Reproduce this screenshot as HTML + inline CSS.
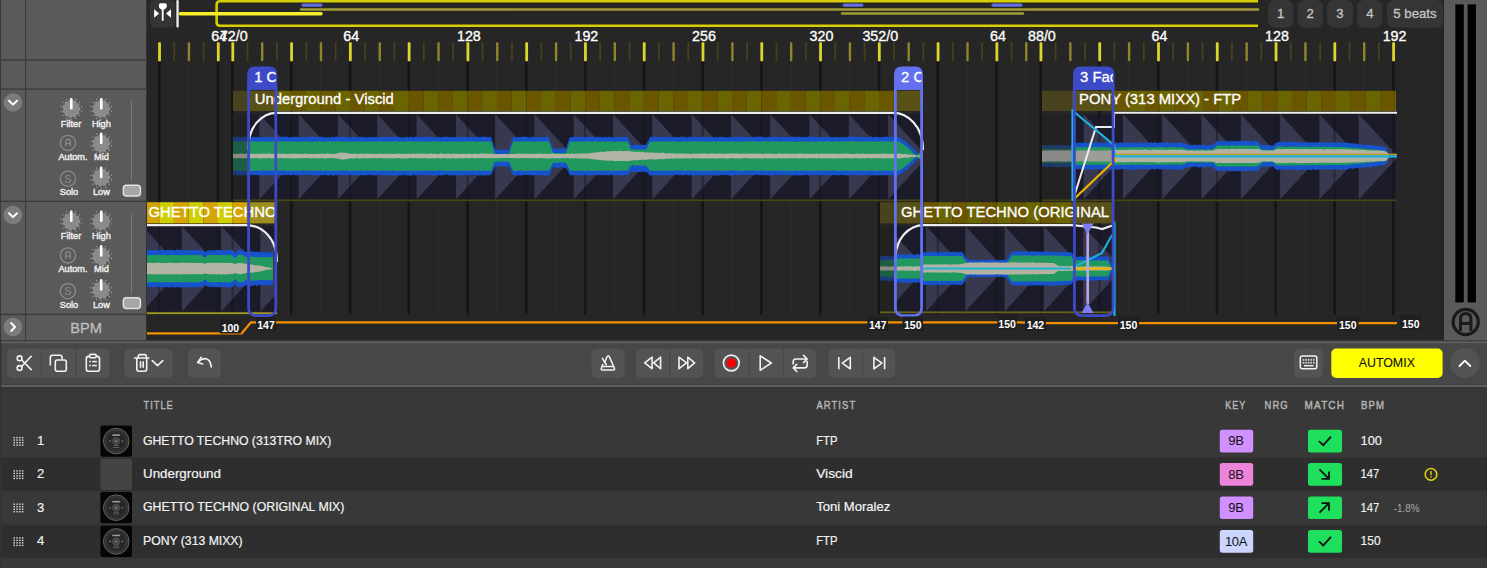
<!DOCTYPE html>
<html><head><meta charset="utf-8"><style>
html,body{margin:0;padding:0;width:1487px;height:568px;overflow:hidden;background:#262626;}
svg{position:absolute;left:0;top:0;display:block;font-family:"Liberation Sans",sans-serif;}
</style></head><body>
<svg width="1487" height="568" viewBox="0 0 1487 568">
<rect x="0" y="0" width="147" height="341" fill="#5a5a5a"/>
<rect x="147" y="0" width="1297" height="341" fill="#262626"/>
<rect x="1444" y="0" width="43" height="341" fill="#5a5a5a"/>
<rect x="0" y="0" width="1" height="341" fill="#3a3a3a"/>
<rect x="25" y="0" width="1.2" height="341" fill="#3c3c3c"/>
<rect x="146" y="0" width="1" height="341" fill="#333"/>
<rect x="0" y="59.4" width="147" height="1.4" fill="#3c3c3c"/>
<rect x="0" y="88.4" width="147" height="1.4" fill="#3c3c3c"/>
<rect x="0" y="200.6" width="147" height="1.4" fill="#3c3c3c"/>
<rect x="0" y="313.7" width="147" height="1.4" fill="#3c3c3c"/>
<rect x="157.98" y="62" width="2.5" height="252.8" fill="#151515"/>
<rect x="187.61" y="62" width="2" height="252.8" fill="#2a2a2a"/>
<rect x="216.75" y="62" width="2.5" height="252.8" fill="#151515"/>
<rect x="231.25" y="62" width="2.5" height="252.8" fill="#151515"/>
<rect x="260.89" y="62" width="2" height="252.8" fill="#2a2a2a"/>
<rect x="290.02" y="62" width="2.5" height="252.8" fill="#151515"/>
<rect x="319.66" y="62" width="2" height="252.8" fill="#2a2a2a"/>
<rect x="348.80" y="62" width="2.5" height="252.8" fill="#151515"/>
<rect x="378.44" y="62" width="2" height="252.8" fill="#2a2a2a"/>
<rect x="407.57" y="62" width="2.5" height="252.8" fill="#151515"/>
<rect x="437.21" y="62" width="2" height="252.8" fill="#2a2a2a"/>
<rect x="466.35" y="62" width="2.5" height="252.8" fill="#151515"/>
<rect x="495.98" y="62" width="2" height="252.8" fill="#2a2a2a"/>
<rect x="525.12" y="62" width="2.5" height="252.8" fill="#151515"/>
<rect x="554.76" y="62" width="2" height="252.8" fill="#2a2a2a"/>
<rect x="583.90" y="62" width="2.5" height="252.8" fill="#151515"/>
<rect x="613.53" y="62" width="2" height="252.8" fill="#2a2a2a"/>
<rect x="642.67" y="62" width="2.5" height="252.8" fill="#151515"/>
<rect x="672.31" y="62" width="2" height="252.8" fill="#2a2a2a"/>
<rect x="701.45" y="62" width="2.5" height="252.8" fill="#151515"/>
<rect x="731.08" y="62" width="2" height="252.8" fill="#2a2a2a"/>
<rect x="760.22" y="62" width="2.5" height="252.8" fill="#151515"/>
<rect x="789.86" y="62" width="2" height="252.8" fill="#2a2a2a"/>
<rect x="818.99" y="62" width="2.5" height="252.8" fill="#151515"/>
<rect x="848.63" y="62" width="2" height="252.8" fill="#2a2a2a"/>
<rect x="877.77" y="62" width="2.5" height="252.8" fill="#151515"/>
<rect x="907.41" y="62" width="2" height="252.8" fill="#2a2a2a"/>
<rect x="936.54" y="62" width="2.5" height="252.8" fill="#151515"/>
<rect x="966.18" y="62" width="2" height="252.8" fill="#2a2a2a"/>
<rect x="995.32" y="62" width="2.5" height="252.8" fill="#151515"/>
<rect x="1024.95" y="62" width="2" height="252.8" fill="#2a2a2a"/>
<rect x="1039.40" y="62" width="2.5" height="252.8" fill="#151515"/>
<rect x="1069.04" y="62" width="2" height="252.8" fill="#2a2a2a"/>
<rect x="1098.17" y="62" width="2.5" height="252.8" fill="#151515"/>
<rect x="1127.81" y="62" width="2" height="252.8" fill="#2a2a2a"/>
<rect x="1156.95" y="62" width="2.5" height="252.8" fill="#151515"/>
<rect x="1186.58" y="62" width="2" height="252.8" fill="#2a2a2a"/>
<rect x="1215.72" y="62" width="2.5" height="252.8" fill="#151515"/>
<rect x="1245.36" y="62" width="2" height="252.8" fill="#2a2a2a"/>
<rect x="1274.50" y="62" width="2.5" height="252.8" fill="#151515"/>
<rect x="1304.13" y="62" width="2" height="252.8" fill="#2a2a2a"/>
<rect x="1333.27" y="62" width="2.5" height="252.8" fill="#151515"/>
<rect x="1362.91" y="62" width="2" height="252.8" fill="#2a2a2a"/>
<rect x="1392.04" y="62" width="2.5" height="252.8" fill="#151515"/>
<rect x="158.13" y="42.3" width="2.8" height="18.9" rx="0.8" fill="#dcd52a"/>
<rect x="173.32" y="42.3" width="1.8" height="18.9" rx="0.8" fill="#45411c"/>
<rect x="187.71" y="42.3" width="2.4" height="18.9" rx="0.8" fill="#8e8628"/>
<rect x="202.71" y="42.3" width="1.8" height="18.9" rx="0.8" fill="#45411c"/>
<rect x="216.90" y="42.3" width="2.8" height="18.9" rx="0.8" fill="#dcd52a"/>
<rect x="231.40" y="42.3" width="2.8" height="18.9" rx="0.8" fill="#dcd52a"/>
<rect x="246.59" y="42.3" width="1.8" height="18.9" rx="0.8" fill="#45411c"/>
<rect x="260.99" y="42.3" width="2.4" height="18.9" rx="0.8" fill="#8e8628"/>
<rect x="275.98" y="42.3" width="1.8" height="18.9" rx="0.8" fill="#45411c"/>
<rect x="290.17" y="42.3" width="2.8" height="18.9" rx="0.8" fill="#dcd52a"/>
<rect x="305.37" y="42.3" width="1.8" height="18.9" rx="0.8" fill="#45411c"/>
<rect x="319.76" y="42.3" width="2.4" height="18.9" rx="0.8" fill="#8e8628"/>
<rect x="334.76" y="42.3" width="1.8" height="18.9" rx="0.8" fill="#45411c"/>
<rect x="348.95" y="42.3" width="2.8" height="18.9" rx="0.8" fill="#dcd52a"/>
<rect x="364.14" y="42.3" width="1.8" height="18.9" rx="0.8" fill="#45411c"/>
<rect x="378.54" y="42.3" width="2.4" height="18.9" rx="0.8" fill="#8e8628"/>
<rect x="393.53" y="42.3" width="1.8" height="18.9" rx="0.8" fill="#45411c"/>
<rect x="407.72" y="42.3" width="2.8" height="18.9" rx="0.8" fill="#dcd52a"/>
<rect x="422.92" y="42.3" width="1.8" height="18.9" rx="0.8" fill="#45411c"/>
<rect x="437.31" y="42.3" width="2.4" height="18.9" rx="0.8" fill="#8e8628"/>
<rect x="452.30" y="42.3" width="1.8" height="18.9" rx="0.8" fill="#45411c"/>
<rect x="466.50" y="42.3" width="2.8" height="18.9" rx="0.8" fill="#dcd52a"/>
<rect x="481.69" y="42.3" width="1.8" height="18.9" rx="0.8" fill="#45411c"/>
<rect x="496.08" y="42.3" width="2.4" height="18.9" rx="0.8" fill="#8e8628"/>
<rect x="511.08" y="42.3" width="1.8" height="18.9" rx="0.8" fill="#45411c"/>
<rect x="525.27" y="42.3" width="2.8" height="18.9" rx="0.8" fill="#dcd52a"/>
<rect x="540.47" y="42.3" width="1.8" height="18.9" rx="0.8" fill="#45411c"/>
<rect x="554.86" y="42.3" width="2.4" height="18.9" rx="0.8" fill="#8e8628"/>
<rect x="569.85" y="42.3" width="1.8" height="18.9" rx="0.8" fill="#45411c"/>
<rect x="584.05" y="42.3" width="2.8" height="18.9" rx="0.8" fill="#dcd52a"/>
<rect x="599.24" y="42.3" width="1.8" height="18.9" rx="0.8" fill="#45411c"/>
<rect x="613.63" y="42.3" width="2.4" height="18.9" rx="0.8" fill="#8e8628"/>
<rect x="628.63" y="42.3" width="1.8" height="18.9" rx="0.8" fill="#45411c"/>
<rect x="642.82" y="42.3" width="2.8" height="18.9" rx="0.8" fill="#dcd52a"/>
<rect x="658.01" y="42.3" width="1.8" height="18.9" rx="0.8" fill="#45411c"/>
<rect x="672.41" y="42.3" width="2.4" height="18.9" rx="0.8" fill="#8e8628"/>
<rect x="687.40" y="42.3" width="1.8" height="18.9" rx="0.8" fill="#45411c"/>
<rect x="701.60" y="42.3" width="2.8" height="18.9" rx="0.8" fill="#dcd52a"/>
<rect x="716.79" y="42.3" width="1.8" height="18.9" rx="0.8" fill="#45411c"/>
<rect x="731.18" y="42.3" width="2.4" height="18.9" rx="0.8" fill="#8e8628"/>
<rect x="746.18" y="42.3" width="1.8" height="18.9" rx="0.8" fill="#45411c"/>
<rect x="760.37" y="42.3" width="2.8" height="18.9" rx="0.8" fill="#dcd52a"/>
<rect x="775.56" y="42.3" width="1.8" height="18.9" rx="0.8" fill="#45411c"/>
<rect x="789.96" y="42.3" width="2.4" height="18.9" rx="0.8" fill="#8e8628"/>
<rect x="804.95" y="42.3" width="1.8" height="18.9" rx="0.8" fill="#45411c"/>
<rect x="819.14" y="42.3" width="2.8" height="18.9" rx="0.8" fill="#dcd52a"/>
<rect x="834.34" y="42.3" width="1.8" height="18.9" rx="0.8" fill="#45411c"/>
<rect x="848.73" y="42.3" width="2.4" height="18.9" rx="0.8" fill="#8e8628"/>
<rect x="863.72" y="42.3" width="1.8" height="18.9" rx="0.8" fill="#45411c"/>
<rect x="877.92" y="42.3" width="2.8" height="18.9" rx="0.8" fill="#dcd52a"/>
<rect x="893.11" y="42.3" width="1.8" height="18.9" rx="0.8" fill="#45411c"/>
<rect x="907.51" y="42.3" width="2.4" height="18.9" rx="0.8" fill="#8e8628"/>
<rect x="922.50" y="42.3" width="1.8" height="18.9" rx="0.8" fill="#45411c"/>
<rect x="936.69" y="42.3" width="2.8" height="18.9" rx="0.8" fill="#dcd52a"/>
<rect x="951.89" y="42.3" width="1.8" height="18.9" rx="0.8" fill="#45411c"/>
<rect x="966.28" y="42.3" width="2.4" height="18.9" rx="0.8" fill="#8e8628"/>
<rect x="981.27" y="42.3" width="1.8" height="18.9" rx="0.8" fill="#45411c"/>
<rect x="995.47" y="42.3" width="2.8" height="18.9" rx="0.8" fill="#dcd52a"/>
<rect x="1010.66" y="42.3" width="1.8" height="18.9" rx="0.8" fill="#45411c"/>
<rect x="1025.05" y="42.3" width="2.4" height="18.9" rx="0.8" fill="#8e8628"/>
<rect x="1039.55" y="42.3" width="2.8" height="18.9" rx="0.8" fill="#dcd52a"/>
<rect x="1054.74" y="42.3" width="1.8" height="18.9" rx="0.8" fill="#45411c"/>
<rect x="1069.14" y="42.3" width="2.4" height="18.9" rx="0.8" fill="#8e8628"/>
<rect x="1084.13" y="42.3" width="1.8" height="18.9" rx="0.8" fill="#45411c"/>
<rect x="1098.32" y="42.3" width="2.8" height="18.9" rx="0.8" fill="#dcd52a"/>
<rect x="1113.52" y="42.3" width="1.8" height="18.9" rx="0.8" fill="#45411c"/>
<rect x="1127.91" y="42.3" width="2.4" height="18.9" rx="0.8" fill="#8e8628"/>
<rect x="1142.90" y="42.3" width="1.8" height="18.9" rx="0.8" fill="#45411c"/>
<rect x="1157.10" y="42.3" width="2.8" height="18.9" rx="0.8" fill="#dcd52a"/>
<rect x="1172.29" y="42.3" width="1.8" height="18.9" rx="0.8" fill="#45411c"/>
<rect x="1186.68" y="42.3" width="2.4" height="18.9" rx="0.8" fill="#8e8628"/>
<rect x="1201.68" y="42.3" width="1.8" height="18.9" rx="0.8" fill="#45411c"/>
<rect x="1215.87" y="42.3" width="2.8" height="18.9" rx="0.8" fill="#dcd52a"/>
<rect x="1231.06" y="42.3" width="1.8" height="18.9" rx="0.8" fill="#45411c"/>
<rect x="1245.46" y="42.3" width="2.4" height="18.9" rx="0.8" fill="#8e8628"/>
<rect x="1260.45" y="42.3" width="1.8" height="18.9" rx="0.8" fill="#45411c"/>
<rect x="1274.65" y="42.3" width="2.8" height="18.9" rx="0.8" fill="#dcd52a"/>
<rect x="1289.84" y="42.3" width="1.8" height="18.9" rx="0.8" fill="#45411c"/>
<rect x="1304.23" y="42.3" width="2.4" height="18.9" rx="0.8" fill="#8e8628"/>
<rect x="1319.23" y="42.3" width="1.8" height="18.9" rx="0.8" fill="#45411c"/>
<rect x="1333.42" y="42.3" width="2.8" height="18.9" rx="0.8" fill="#dcd52a"/>
<rect x="1348.61" y="42.3" width="1.8" height="18.9" rx="0.8" fill="#45411c"/>
<rect x="1363.01" y="42.3" width="2.4" height="18.9" rx="0.8" fill="#8e8628"/>
<rect x="1378.00" y="42.3" width="1.8" height="18.9" rx="0.8" fill="#45411c"/>
<rect x="1392.19" y="42.3" width="2.8" height="18.9" rx="0.8" fill="#dcd52a"/>
<text stroke="#fff" stroke-width="0.32" x="219.3" y="41" font-size="14.3" fill="#fff" text-anchor="middle">64</text>
<text stroke="#fff" stroke-width="0.32" x="233.8" y="41" font-size="14.3" fill="#fff" text-anchor="middle">72/0</text>
<text stroke="#fff" stroke-width="0.32" x="351.3" y="41" font-size="14.3" fill="#fff" text-anchor="middle">64</text>
<text stroke="#fff" stroke-width="0.32" x="468.9" y="41" font-size="14.3" fill="#fff" text-anchor="middle">128</text>
<text stroke="#fff" stroke-width="0.32" x="586.4" y="41" font-size="14.3" fill="#fff" text-anchor="middle">192</text>
<text stroke="#fff" stroke-width="0.32" x="704.0" y="41" font-size="14.3" fill="#fff" text-anchor="middle">256</text>
<text stroke="#fff" stroke-width="0.32" x="821.5" y="41" font-size="14.3" fill="#fff" text-anchor="middle">320</text>
<text stroke="#fff" stroke-width="0.32" x="880.3" y="41" font-size="14.3" fill="#fff" text-anchor="middle">352/0</text>
<text stroke="#fff" stroke-width="0.32" x="997.9" y="41" font-size="14.3" fill="#fff" text-anchor="middle">64</text>
<text stroke="#fff" stroke-width="0.32" x="1041.9" y="41" font-size="14.3" fill="#fff" text-anchor="middle">88/0</text>
<text stroke="#fff" stroke-width="0.32" x="1159.5" y="41" font-size="14.3" fill="#fff" text-anchor="middle">64</text>
<text stroke="#fff" stroke-width="0.32" x="1277.0" y="41" font-size="14.3" fill="#fff" text-anchor="middle">128</text>
<text stroke="#fff" stroke-width="0.32" x="1394.6" y="41" font-size="14.3" fill="#fff" text-anchor="middle">192</text>
<rect x="149.9" y="0" width="25.1" height="27.5" rx="5.5" fill="#343434"/>
<path d="M160.6 3.2 L165.1 3.2 Q166.8 3.2 166.8 4.9 L166.8 6.6 Q166.8 8.4 164.8 9 L163.6 9.8 L163.6 20.4 Q162.7 21.2 161.8 20.4 L161.8 9.8 L160.6 9 Q158.9 8.4 158.9 6.6 L158.9 4.9 Q158.9 3.2 160.6 3.2 Z" fill="#fff"/>
<path d="M154.1 9.2 L159.2 13.5 L154.1 17.7 Z" fill="#fff"/><path d="M171 9.2 L166 13.5 L171 17.7 Z" fill="#fff"/>
<rect x="176.4" y="0" width="2.3" height="27.5" rx="1" fill="#f2f2f2"/>
<path d="M1258 1.3 L220 1.3 Q216.6 1.3 216.6 4.7 L216.6 22.3 Q216.6 25.7 220 25.7 L1258 25.7" fill="none" stroke="#d6ce00" stroke-width="2.6"/>
<line x1="301" y1="9.5" x2="1258" y2="9.5" stroke="#a49d36" stroke-width="2.4" stroke-linecap="round"/>
<line x1="842" y1="13.5" x2="1023" y2="13.5" stroke="#a49d36" stroke-width="2.4" stroke-linecap="round"/>
<line x1="180.5" y1="13.7" x2="321" y2="13.7" stroke="#f7ef2a" stroke-width="3.6" stroke-linecap="round"/>
<path d="M301 5.2 L303 3.6 L321 3.6 L323 5.2 L321 6.8 L303 6.8 Z" fill="#6370e0"/>
<path d="M842 5.2 L844 3.6 L862 3.6 L864 5.2 L862 6.8 L844 6.8 Z" fill="#6370e0"/>
<path d="M991 5.2 L993 3.6 L1021 3.6 L1023 5.2 L1021 6.8 L993 6.8 Z" fill="#6370e0"/>
<rect x="1268" y="0" width="25.4" height="27.8" rx="7" fill="#353535"/>
<text stroke="#c4c4c4" stroke-width="0.32" x="1280.7" y="17.8" font-size="13.2" fill="#c4c4c4" text-anchor="middle">1</text>
<rect x="1297.5" y="0" width="25.5" height="27.8" rx="7" fill="#353535"/>
<text stroke="#c4c4c4" stroke-width="0.32" x="1310.2" y="17.8" font-size="13.2" fill="#c4c4c4" text-anchor="middle">2</text>
<rect x="1327" y="0" width="26.0" height="27.8" rx="7" fill="#353535"/>
<text stroke="#c4c4c4" stroke-width="0.32" x="1340.0" y="17.8" font-size="13.2" fill="#c4c4c4" text-anchor="middle">3</text>
<rect x="1357" y="0" width="25.5" height="27.8" rx="7" fill="#353535"/>
<text stroke="#c4c4c4" stroke-width="0.32" x="1369.8" y="17.8" font-size="13.2" fill="#c4c4c4" text-anchor="middle">4</text>
<rect x="1387" y="0" width="56.0" height="27.8" rx="7" fill="#353535"/>
<text stroke="#c4c4c4" stroke-width="0.32" x="1415.0" y="17.8" font-size="13.2" fill="#c4c4c4" text-anchor="middle">5 beats</text>
<clipPath id="nt1"><rect x="147" y="226" width="130" height="85.5"/></clipPath><g clip-path="url(#nt1)"><rect x="147" y="226" width="130" height="85.5" fill="#1b1b29"/><path d="M142.5 226 L181.8 268.8 L142.5 311.5 Z" fill="#38384f"/><path d="M181.8 226 L221.1 268.8 L181.8 311.5 Z" fill="#38384f"/><path d="M221.1 226 L260.4 268.8 L221.1 311.5 Z" fill="#38384f"/><path d="M260.4 226 L299.7 268.8 L260.4 311.5 Z" fill="#38384f"/><rect x="158.2" y="226" width="2" height="85.5" fill="#111118" opacity="0.4"/><rect x="217.0" y="226" width="2" height="85.5" fill="#111118" opacity="0.4"/><rect x="231.5" y="226" width="2" height="85.5" fill="#111118" opacity="0.4"/></g>
<path d="M147.0 250.2 L148.0 249.8 L149.0 250.0 L150.0 250.5 L151.0 250.6 L152.0 250.5 L153.0 250.1 L154.0 250.5 L155.0 249.8 L156.0 249.9 L157.0 249.4 L158.0 249.6 L159.0 250.4 L160.0 250.2 L161.0 250.4 L162.0 249.8 L163.0 249.9 L164.0 250.5 L165.0 249.8 L166.0 250.2 L167.0 250.1 L168.0 249.6 L169.0 250.3 L170.0 250.0 L171.0 249.7 L172.0 249.4 L173.0 250.1 L174.0 250.4 L175.0 250.6 L176.0 249.7 L177.0 249.5 L178.0 249.8 L179.0 249.9 L180.0 249.6 L181.0 250.0 L182.0 250.5 L183.0 249.8 L184.0 249.6 L185.0 250.1 L186.0 250.6 L187.0 250.4 L188.0 250.5 L189.0 250.4 L190.0 250.1 L191.0 250.5 L192.0 249.9 L193.0 249.6 L194.0 250.3 L195.0 250.2 L196.0 249.5 L197.0 250.4 L198.0 250.3 L199.0 249.9 L200.0 250.6 L201.0 250.2 L202.0 249.5 L203.0 250.9 L204.0 251.7 L205.0 252.3 L206.0 251.4 L207.0 251.1 L208.0 250.5 L209.0 250.5 L210.0 250.3 L211.0 250.2 L212.0 250.6 L213.0 250.5 L214.0 250.6 L215.0 249.9 L216.0 250.3 L217.0 250.2 L218.0 249.6 L219.0 250.0 L220.0 250.5 L221.0 250.2 L222.0 249.6 L223.0 250.6 L224.0 250.0 L225.0 249.9 L226.0 250.0 L227.0 249.6 L228.0 250.3 L229.0 250.4 L230.0 250.0 L231.0 250.2 L232.0 249.6 L233.0 250.6 L234.0 251.7 L235.0 253.4 L236.0 252.2 L237.0 251.6 L238.0 250.3 L239.0 249.5 L240.0 249.5 L241.0 249.5 L242.0 250.3 L243.0 250.4 L244.0 250.9 L245.0 251.7 L246.0 252.1 L247.0 252.2 L248.0 250.6 L249.0 250.9 L250.0 251.7 L251.0 251.7 L252.0 251.0 L253.0 251.8 L254.0 251.4 L255.0 252.2 L256.0 251.3 L257.0 252.3 L258.0 251.3 L259.0 252.1 L260.0 252.4 L261.0 251.5 L262.0 252.1 L263.0 252.2 L264.0 251.7 L265.0 252.4 L266.0 252.4 L267.0 252.4 L268.0 252.5 L269.0 252.3 L270.0 252.0 L271.0 252.2 L272.0 252.1 L273.0 252.1 L273.0 284.5 L272.0 285.1 L271.0 285.6 L270.0 285.6 L269.0 285.0 L268.0 285.6 L267.0 285.0 L266.0 285.2 L265.0 284.9 L264.0 284.8 L263.0 285.5 L262.0 285.6 L261.0 285.3 L260.0 284.6 L259.0 285.3 L258.0 285.5 L257.0 285.7 L256.0 285.8 L255.0 285.0 L254.0 285.1 L253.0 286.1 L252.0 285.5 L251.0 286.1 L250.0 286.2 L249.0 285.9 L248.0 286.4 L247.0 285.7 L246.0 285.3 L245.0 285.1 L244.0 286.6 L243.0 286.8 L242.0 286.9 L241.0 287.0 L240.0 287.8 L239.0 287.1 L238.0 287.4 L237.0 285.9 L236.0 284.6 L235.0 284.1 L234.0 285.4 L233.0 286.5 L232.0 287.8 L231.0 286.9 L230.0 287.5 L229.0 287.5 L228.0 287.0 L227.0 287.4 L226.0 287.8 L225.0 286.6 L224.0 286.8 L223.0 287.7 L222.0 286.8 L221.0 286.9 L220.0 286.7 L219.0 287.2 L218.0 287.8 L217.0 286.7 L216.0 287.0 L215.0 286.8 L214.0 287.6 L213.0 287.0 L212.0 286.8 L211.0 286.7 L210.0 286.8 L209.0 286.7 L208.0 287.4 L207.0 286.1 L206.0 285.7 L205.0 284.7 L204.0 284.8 L203.0 286.4 L202.0 287.4 L201.0 287.3 L200.0 287.1 L199.0 286.9 L198.0 287.2 L197.0 286.9 L196.0 286.8 L195.0 287.7 L194.0 287.1 L193.0 287.6 L192.0 287.7 L191.0 287.1 L190.0 287.6 L189.0 286.9 L188.0 287.5 L187.0 286.7 L186.0 287.2 L185.0 287.4 L184.0 286.9 L183.0 287.8 L182.0 287.4 L181.0 287.4 L180.0 287.7 L179.0 287.1 L178.0 287.3 L177.0 287.0 L176.0 287.3 L175.0 287.4 L174.0 287.2 L173.0 287.5 L172.0 286.7 L171.0 286.9 L170.0 287.7 L169.0 287.3 L168.0 287.4 L167.0 287.0 L166.0 287.3 L165.0 287.1 L164.0 286.8 L163.0 286.7 L162.0 287.0 L161.0 287.3 L160.0 287.6 L159.0 286.7 L158.0 286.9 L157.0 286.7 L156.0 287.1 L155.0 287.7 L154.0 286.9 L153.0 287.6 L152.0 286.7 L151.0 287.1 L150.0 287.2 L149.0 287.0 L148.0 286.7 L147.0 286.8Z" fill="#1552cc"/><path d="M147.0 255.0 L148.0 255.3 L149.0 255.2 L150.0 254.9 L151.0 255.1 L152.0 255.0 L153.0 255.2 L154.0 255.2 L155.0 254.8 L156.0 255.0 L157.0 254.8 L158.0 254.9 L159.0 255.0 L160.0 255.0 L161.0 255.0 L162.0 254.9 L163.0 254.7 L164.0 255.0 L165.0 254.8 L166.0 255.2 L167.0 255.3 L168.0 255.3 L169.0 254.8 L170.0 255.2 L171.0 254.9 L172.0 254.8 L173.0 255.2 L174.0 255.1 L175.0 254.7 L176.0 255.2 L177.0 255.0 L178.0 255.2 L179.0 254.9 L180.0 255.0 L181.0 255.3 L182.0 254.9 L183.0 255.3 L184.0 254.8 L185.0 255.2 L186.0 255.3 L187.0 255.1 L188.0 255.0 L189.0 254.8 L190.0 255.2 L191.0 255.0 L192.0 255.2 L193.0 254.9 L194.0 255.3 L195.0 254.9 L196.0 255.2 L197.0 255.3 L198.0 255.0 L199.0 255.0 L200.0 255.1 L201.0 255.0 L202.0 255.2 L203.0 256.2 L204.0 257.0 L205.0 257.6 L206.0 256.9 L207.0 256.0 L208.0 255.1 L209.0 254.9 L210.0 255.2 L211.0 254.7 L212.0 254.8 L213.0 255.0 L214.0 255.1 L215.0 254.9 L216.0 255.1 L217.0 254.9 L218.0 255.1 L219.0 255.3 L220.0 255.3 L221.0 255.1 L222.0 255.2 L223.0 254.8 L224.0 255.1 L225.0 255.1 L226.0 255.2 L227.0 255.1 L228.0 254.7 L229.0 255.2 L230.0 255.1 L231.0 255.3 L232.0 255.0 L233.0 256.2 L234.0 257.4 L235.0 258.3 L236.0 257.3 L237.0 256.2 L238.0 254.9 L239.0 254.8 L240.0 254.9 L241.0 255.1 L242.0 254.7 L243.0 254.9 L244.0 256.3 L245.0 256.8 L246.0 257.2 L247.0 256.9 L248.0 256.1 L249.0 256.0 L250.0 256.3 L251.0 256.4 L252.0 256.8 L253.0 256.9 L254.0 256.9 L255.0 256.7 L256.0 256.7 L257.0 256.9 L258.0 256.7 L259.0 256.9 L260.0 256.9 L261.0 256.9 L262.0 257.4 L263.0 257.0 L264.0 257.0 L265.0 257.1 L266.0 257.1 L267.0 256.9 L268.0 257.0 L269.0 257.3 L270.0 257.0 L271.0 257.1 L272.0 257.4 L273.0 257.0 L273.0 280.2 L272.0 280.0 L271.0 279.8 L270.0 280.0 L269.0 280.0 L268.0 279.8 L267.0 280.2 L266.0 280.2 L265.0 280.0 L264.0 280.4 L263.0 279.9 L262.0 280.0 L261.0 280.0 L260.0 279.9 L259.0 280.3 L258.0 280.4 L257.0 280.1 L256.0 280.5 L255.0 280.5 L254.0 280.7 L253.0 280.5 L252.0 280.3 L251.0 280.8 L250.0 281.1 L249.0 281.2 L248.0 281.3 L247.0 280.5 L246.0 280.1 L245.0 280.2 L244.0 281.4 L243.0 282.3 L242.0 282.0 L241.0 282.1 L240.0 282.4 L239.0 282.3 L238.0 282.2 L237.0 281.0 L236.0 279.8 L235.0 279.0 L234.0 280.0 L233.0 281.2 L232.0 282.2 L231.0 282.1 L230.0 282.1 L229.0 282.5 L228.0 282.2 L227.0 282.5 L226.0 282.2 L225.0 282.2 L224.0 282.0 L223.0 282.3 L222.0 282.4 L221.0 282.0 L220.0 282.3 L219.0 282.0 L218.0 282.1 L217.0 282.3 L216.0 282.4 L215.0 282.5 L214.0 282.2 L213.0 282.4 L212.0 282.2 L211.0 282.0 L210.0 282.2 L209.0 282.2 L208.0 281.9 L207.0 281.0 L206.0 280.1 L205.0 279.3 L204.0 280.2 L203.0 281.1 L202.0 282.0 L201.0 282.0 L200.0 282.0 L199.0 282.5 L198.0 282.1 L197.0 282.4 L196.0 282.4 L195.0 282.4 L194.0 282.5 L193.0 282.2 L192.0 281.9 L191.0 282.3 L190.0 282.5 L189.0 282.1 L188.0 282.4 L187.0 282.0 L186.0 282.4 L185.0 282.1 L184.0 282.5 L183.0 282.5 L182.0 282.2 L181.0 282.1 L180.0 282.2 L179.0 281.9 L178.0 282.1 L177.0 282.1 L176.0 282.2 L175.0 282.4 L174.0 282.2 L173.0 282.5 L172.0 282.5 L171.0 282.0 L170.0 282.3 L169.0 282.4 L168.0 282.3 L167.0 282.0 L166.0 282.2 L165.0 282.0 L164.0 282.5 L163.0 282.1 L162.0 282.4 L161.0 282.5 L160.0 282.2 L159.0 282.3 L158.0 282.2 L157.0 282.2 L156.0 282.4 L155.0 282.2 L154.0 282.1 L153.0 282.2 L152.0 282.4 L151.0 282.2 L150.0 282.2 L149.0 282.2 L148.0 282.4 L147.0 282.0Z" fill="#20985e"/><path d="M147.0 262.8 L148.0 262.9 L149.0 262.9 L150.0 262.7 L151.0 262.6 L152.0 263.2 L153.0 262.7 L154.0 262.9 L155.0 263.1 L156.0 263.1 L157.0 263.1 L158.0 262.6 L159.0 262.7 L160.0 262.7 L161.0 263.1 L162.0 262.9 L163.0 263.2 L164.0 262.9 L165.0 263.1 L166.0 263.0 L167.0 263.2 L168.0 262.7 L169.0 262.6 L170.0 262.7 L171.0 263.0 L172.0 262.6 L173.0 263.0 L174.0 263.0 L175.0 263.1 L176.0 263.0 L177.0 263.1 L178.0 262.9 L179.0 263.0 L180.0 262.7 L181.0 262.8 L182.0 262.6 L183.0 262.8 L184.0 262.8 L185.0 262.7 L186.0 263.0 L187.0 262.6 L188.0 262.9 L189.0 263.0 L190.0 262.6 L191.0 262.8 L192.0 262.9 L193.0 263.1 L194.0 263.1 L195.0 262.9 L196.0 262.7 L197.0 262.9 L198.0 263.1 L199.0 263.0 L200.0 263.1 L201.0 262.9 L202.0 262.8 L203.0 263.2 L204.0 263.4 L205.0 263.9 L206.0 263.1 L207.0 263.1 L208.0 262.7 L209.0 263.0 L210.0 263.0 L211.0 262.6 L212.0 262.7 L213.0 263.2 L214.0 262.7 L215.0 262.8 L216.0 263.0 L217.0 262.7 L218.0 262.6 L219.0 263.1 L220.0 262.9 L221.0 262.6 L222.0 262.8 L223.0 262.9 L224.0 263.2 L225.0 263.1 L226.0 262.8 L227.0 263.1 L228.0 262.8 L229.0 263.1 L230.0 262.9 L231.0 263.0 L232.0 262.8 L233.0 263.4 L234.0 263.4 L235.0 263.9 L236.0 263.9 L237.0 263.2 L238.0 263.2 L239.0 263.1 L240.0 263.1 L241.0 263.0 L242.0 263.3 L243.0 263.2 L244.0 263.4 L245.0 263.7 L246.0 264.1 L247.0 263.8 L248.0 263.9 L249.0 264.4 L250.0 264.5 L251.0 264.5 L252.0 264.8 L253.0 264.7 L254.0 265.1 L255.0 265.2 L256.0 265.4 L257.0 265.6 L258.0 265.3 L259.0 265.5 L260.0 265.5 L261.0 266.1 L262.0 266.0 L263.0 266.2 L264.0 266.6 L265.0 266.9 L266.0 267.1 L267.0 266.9 L268.0 267.1 L269.0 267.7 L270.0 267.6 L271.0 268.2 L272.0 268.2 L273.0 268.5 L273.0 268.8 L272.0 269.3 L271.0 269.3 L270.0 269.4 L269.0 269.8 L268.0 269.6 L267.0 269.8 L266.0 270.1 L265.0 270.2 L264.0 270.6 L263.0 270.8 L262.0 270.8 L261.0 271.5 L260.0 271.3 L259.0 271.8 L258.0 271.9 L257.0 271.8 L256.0 271.7 L255.0 272.4 L254.0 272.2 L253.0 272.7 L252.0 272.6 L251.0 272.5 L250.0 273.1 L249.0 273.1 L248.0 272.9 L247.0 273.0 L246.0 272.9 L245.0 273.4 L244.0 273.5 L243.0 274.1 L242.0 273.8 L241.0 274.4 L240.0 274.0 L239.0 274.2 L238.0 273.8 L237.0 273.9 L236.0 273.3 L235.0 273.1 L234.0 273.6 L233.0 273.9 L232.0 274.0 L231.0 274.1 L230.0 274.3 L229.0 274.0 L228.0 274.4 L227.0 274.2 L226.0 274.2 L225.0 274.6 L224.0 274.5 L223.0 274.3 L222.0 274.5 L221.0 274.4 L220.0 274.4 L219.0 274.1 L218.0 274.1 L217.0 274.5 L216.0 274.6 L215.0 274.0 L214.0 274.3 L213.0 274.4 L212.0 274.0 L211.0 274.5 L210.0 274.3 L209.0 274.1 L208.0 274.1 L207.0 274.1 L206.0 273.6 L205.0 273.5 L204.0 273.7 L203.0 274.1 L202.0 274.2 L201.0 274.5 L200.0 274.2 L199.0 274.1 L198.0 274.1 L197.0 274.1 L196.0 274.6 L195.0 274.1 L194.0 274.5 L193.0 274.1 L192.0 274.2 L191.0 274.2 L190.0 274.2 L189.0 274.4 L188.0 274.2 L187.0 274.1 L186.0 274.0 L185.0 274.4 L184.0 274.3 L183.0 274.0 L182.0 274.3 L181.0 274.5 L180.0 274.5 L179.0 274.6 L178.0 274.1 L177.0 274.2 L176.0 274.6 L175.0 274.5 L174.0 274.0 L173.0 274.3 L172.0 274.4 L171.0 274.2 L170.0 274.2 L169.0 274.4 L168.0 274.1 L167.0 274.5 L166.0 274.5 L165.0 274.2 L164.0 274.2 L163.0 274.3 L162.0 274.0 L161.0 274.5 L160.0 274.4 L159.0 274.3 L158.0 274.1 L157.0 274.3 L156.0 274.3 L155.0 274.6 L154.0 274.2 L153.0 274.6 L152.0 274.3 L151.0 274.6 L150.0 274.1 L149.0 274.1 L148.0 274.3 L147.0 274.2Z" fill="#b3b3a3"/>
<rect x="147.00" y="202.2" width="12.23" height="21.200000000000017" fill="#d4a400"/><rect x="159.23" y="202.2" width="14.69" height="21.200000000000017" fill="#cfcf00"/><rect x="173.92" y="202.2" width="14.69" height="21.200000000000017" fill="#d4a400"/><rect x="188.61" y="202.2" width="14.69" height="21.200000000000017" fill="#cfcf00"/><rect x="203.31" y="202.2" width="14.69" height="21.200000000000017" fill="#d4a400"/><rect x="218.00" y="202.2" width="14.69" height="21.200000000000017" fill="#cfcf00"/><rect x="232.69" y="202.2" width="14.69" height="21.200000000000017" fill="#d4a400"/><rect x="247.39" y="202.2" width="0.61" height="21.200000000000017" fill="#cfcf00"/>
<rect x="248" y="202.2" width="29" height="21.2" fill="#9d8e1e"/>
<rect x="147" y="312.3" width="130" height="1.8" fill="#a09a22"/>
<rect x="233" y="114" width="15" height="85.5" fill="#222222"/>
<clipPath id="nt2"><rect x="248" y="114" width="673" height="85.5"/></clipPath><g clip-path="url(#nt2)"><rect x="248" y="114" width="673" height="85.5" fill="#1b1b29"/><path d="M259.3 114 L298.6 156.8 L259.3 199.5 Z" fill="#38384f"/><path d="M298.6 114 L337.9 156.8 L298.6 199.5 Z" fill="#38384f"/><path d="M337.9 114 L377.2 156.8 L337.9 199.5 Z" fill="#38384f"/><path d="M377.2 114 L416.5 156.8 L377.2 199.5 Z" fill="#38384f"/><path d="M416.5 114 L455.8 156.8 L416.5 199.5 Z" fill="#38384f"/><path d="M455.8 114 L495.1 156.8 L455.8 199.5 Z" fill="#38384f"/><path d="M495.1 114 L534.4 156.8 L495.1 199.5 Z" fill="#38384f"/><path d="M534.4 114 L573.7 156.8 L534.4 199.5 Z" fill="#38384f"/><path d="M573.7 114 L613.0 156.8 L573.7 199.5 Z" fill="#38384f"/><path d="M613.0 114 L652.3 156.8 L613.0 199.5 Z" fill="#38384f"/><path d="M652.3 114 L691.6 156.8 L652.3 199.5 Z" fill="#38384f"/><path d="M691.6 114 L730.9 156.8 L691.6 199.5 Z" fill="#38384f"/><path d="M730.9 114 L770.2 156.8 L730.9 199.5 Z" fill="#38384f"/><path d="M770.2 114 L809.5 156.8 L770.2 199.5 Z" fill="#38384f"/><path d="M809.5 114 L848.8 156.8 L809.5 199.5 Z" fill="#38384f"/><path d="M848.8 114 L888.1 156.8 L848.8 199.5 Z" fill="#38384f"/><path d="M888.1 114 L927.4 156.8 L888.1 199.5 Z" fill="#38384f"/><rect x="290.3" y="114" width="2" height="85.5" fill="#111118" opacity="0.4"/><rect x="349.0" y="114" width="2" height="85.5" fill="#111118" opacity="0.4"/><rect x="407.8" y="114" width="2" height="85.5" fill="#111118" opacity="0.4"/><rect x="466.6" y="114" width="2" height="85.5" fill="#111118" opacity="0.4"/><rect x="525.4" y="114" width="2" height="85.5" fill="#111118" opacity="0.4"/><rect x="584.1" y="114" width="2" height="85.5" fill="#111118" opacity="0.4"/><rect x="642.9" y="114" width="2" height="85.5" fill="#111118" opacity="0.4"/><rect x="701.7" y="114" width="2" height="85.5" fill="#111118" opacity="0.4"/><rect x="760.5" y="114" width="2" height="85.5" fill="#111118" opacity="0.4"/><rect x="819.2" y="114" width="2" height="85.5" fill="#111118" opacity="0.4"/><rect x="878.0" y="114" width="2" height="85.5" fill="#111118" opacity="0.4"/></g>
<clipPath id="preU"><rect x="233" y="100" width="15" height="100"/></clipPath>
<g clip-path="url(#preU)"><path d="M233.0 136.5 L234.0 137.1 L235.0 136.7 L236.0 137.6 L237.0 136.5 L238.0 136.7 L239.0 137.2 L240.0 136.5 L241.0 137.3 L242.0 137.2 L243.0 137.6 L244.0 136.5 L245.0 136.5 L246.0 137.3 L247.0 136.5 L248.0 137.1 L249.0 137.1 L250.0 136.5 L250.0 174.8 L249.0 175.2 L248.0 174.9 L247.0 175.7 L246.0 175.2 L245.0 174.6 L244.0 175.4 L243.0 175.5 L242.0 174.9 L241.0 175.5 L240.0 175.3 L239.0 174.9 L238.0 175.7 L237.0 174.9 L236.0 174.7 L235.0 174.6 L234.0 175.6 L233.0 174.6Z" fill="#1d3a7c"/><path d="M233.0 141.3 L234.0 141.3 L235.0 141.4 L236.0 141.6 L237.0 141.3 L238.0 141.7 L239.0 141.7 L240.0 141.8 L241.0 141.6 L242.0 141.3 L243.0 141.6 L244.0 141.7 L245.0 141.4 L246.0 141.7 L247.0 141.4 L248.0 141.4 L249.0 141.4 L250.0 141.3 L250.0 170.6 L249.0 170.5 L248.0 170.9 L247.0 170.8 L246.0 170.7 L245.0 170.7 L244.0 170.7 L243.0 170.5 L242.0 171.0 L241.0 171.0 L240.0 170.7 L239.0 170.4 L238.0 170.9 L237.0 170.4 L236.0 170.6 L235.0 170.6 L234.0 170.9 L233.0 170.8Z" fill="#1c5e44"/><path d="M233.0 153.8 L234.0 153.7 L235.0 154.0 L236.0 154.0 L237.0 153.8 L238.0 153.9 L239.0 153.8 L240.0 153.6 L241.0 153.5 L242.0 153.8 L243.0 153.6 L244.0 154.1 L245.0 154.0 L246.0 153.5 L247.0 153.5 L248.0 153.6 L249.0 153.9 L250.0 153.5 L250.0 158.0 L249.0 158.4 L248.0 158.2 L247.0 158.1 L246.0 158.2 L245.0 158.0 L244.0 158.1 L243.0 158.4 L242.0 158.4 L241.0 158.0 L240.0 158.3 L239.0 158.0 L238.0 158.5 L237.0 158.1 L236.0 158.4 L235.0 158.0 L234.0 158.0 L233.0 158.1Z" fill="#8a8a82"/></g>
<clipPath id="postU"><rect x="248" y="100" width="680" height="100"/></clipPath>
<g clip-path="url(#postU)"><path d="M247.0 136.9 L248.0 137.3 L249.0 137.4 L250.0 137.3 L251.0 136.8 L252.0 137.6 L253.0 136.8 L254.0 137.2 L255.0 136.6 L256.0 137.5 L257.0 137.1 L258.0 136.8 L259.0 137.4 L260.0 137.1 L261.0 137.2 L262.0 137.2 L263.0 137.2 L264.0 136.6 L265.0 137.2 L266.0 136.7 L267.0 137.6 L268.0 137.1 L269.0 137.1 L270.0 137.0 L271.0 137.6 L272.0 136.8 L273.0 137.5 L274.0 137.2 L275.0 137.4 L276.0 137.0 L277.0 137.5 L278.0 136.6 L279.0 137.4 L280.0 136.5 L281.0 137.0 L282.0 136.5 L283.0 136.5 L284.0 136.6 L285.0 136.7 L286.0 137.1 L287.0 136.6 L288.0 137.3 L289.0 137.0 L290.0 137.5 L291.0 136.7 L292.0 137.6 L293.0 136.7 L294.0 136.6 L295.0 136.9 L296.0 136.8 L297.0 137.1 L298.0 137.1 L299.0 137.1 L300.0 137.6 L301.0 137.0 L302.0 136.7 L303.0 137.1 L304.0 137.0 L305.0 137.4 L306.0 137.5 L307.0 137.0 L308.0 136.8 L309.0 136.7 L310.0 137.0 L311.0 137.0 L312.0 136.5 L313.0 136.6 L314.0 136.7 L315.0 137.4 L316.0 137.0 L317.0 136.5 L318.0 136.7 L319.0 137.5 L320.0 136.7 L321.0 136.5 L322.0 136.6 L323.0 137.0 L324.0 137.4 L325.0 137.0 L326.0 137.6 L327.0 137.4 L328.0 136.8 L329.0 137.4 L330.0 137.5 L331.0 136.8 L332.0 136.6 L333.0 136.9 L334.0 137.5 L335.0 136.8 L336.0 136.6 L337.0 136.4 L338.0 137.2 L339.0 137.1 L340.0 136.7 L341.0 136.6 L342.0 136.8 L343.0 136.9 L344.0 137.2 L345.0 137.6 L346.0 136.9 L347.0 137.0 L348.0 137.4 L349.0 136.8 L350.0 137.6 L351.0 137.5 L352.0 137.3 L353.0 136.9 L354.0 136.9 L355.0 137.4 L356.0 137.3 L357.0 137.5 L358.0 136.6 L359.0 137.1 L360.0 137.6 L361.0 136.9 L362.0 136.8 L363.0 136.5 L364.0 137.3 L365.0 137.5 L366.0 137.1 L367.0 137.5 L368.0 137.6 L369.0 136.5 L370.0 137.4 L371.0 137.0 L372.0 136.6 L373.0 137.2 L374.0 137.5 L375.0 136.7 L376.0 137.6 L377.0 136.7 L378.0 136.7 L379.0 137.3 L380.0 137.3 L381.0 137.2 L382.0 136.8 L383.0 136.7 L384.0 136.9 L385.0 136.7 L386.0 137.3 L387.0 136.4 L388.0 136.5 L389.0 137.3 L390.0 136.7 L391.0 136.7 L392.0 136.5 L393.0 137.3 L394.0 136.8 L395.0 136.8 L396.0 137.0 L397.0 136.8 L398.0 137.1 L399.0 136.9 L400.0 137.3 L401.0 137.5 L402.0 137.4 L403.0 137.5 L404.0 137.2 L405.0 137.6 L406.0 136.8 L407.0 136.8 L408.0 137.5 L409.0 137.2 L410.0 136.6 L411.0 137.5 L412.0 136.5 L413.0 137.5 L414.0 137.5 L415.0 136.6 L416.0 136.8 L417.0 136.8 L418.0 137.5 L419.0 136.7 L420.0 137.2 L421.0 137.6 L422.0 137.3 L423.0 137.2 L424.0 136.4 L425.0 136.6 L426.0 137.6 L427.0 137.1 L428.0 137.2 L429.0 137.0 L430.0 136.6 L431.0 136.6 L432.0 137.6 L433.0 136.7 L434.0 137.6 L435.0 137.0 L436.0 137.4 L437.0 137.2 L438.0 137.3 L439.0 137.3 L440.0 136.8 L441.0 137.5 L442.0 137.5 L443.0 136.8 L444.0 136.8 L445.0 137.1 L446.0 136.5 L447.0 136.5 L448.0 137.4 L449.0 136.5 L450.0 137.1 L451.0 137.3 L452.0 137.0 L453.0 136.7 L454.0 137.2 L455.0 137.4 L456.0 136.8 L457.0 137.4 L458.0 136.7 L459.0 137.4 L460.0 136.5 L461.0 137.4 L462.0 136.8 L463.0 137.4 L464.0 137.3 L465.0 137.0 L466.0 137.2 L467.0 136.4 L468.0 137.5 L469.0 137.5 L470.0 136.4 L471.0 136.7 L472.0 137.4 L473.0 137.5 L474.0 137.1 L475.0 137.1 L476.0 136.8 L477.0 136.8 L478.0 137.4 L479.0 137.1 L480.0 136.5 L481.0 136.9 L482.0 137.1 L483.0 136.7 L484.0 136.7 L485.0 136.6 L486.0 136.8 L487.0 137.2 L488.0 137.5 L489.0 136.7 L490.0 136.8 L491.0 137.1 L492.0 140.0 L493.0 143.1 L494.0 146.8 L495.0 149.3 L496.0 149.6 L497.0 150.2 L498.0 150.0 L499.0 149.1 L500.0 150.1 L501.0 149.6 L502.0 149.6 L503.0 149.2 L504.0 149.7 L505.0 149.9 L506.0 149.7 L507.0 150.1 L508.0 149.8 L509.0 149.9 L510.0 147.0 L511.0 143.4 L512.0 140.3 L513.0 137.3 L514.0 136.5 L515.0 137.3 L516.0 137.1 L517.0 137.4 L518.0 136.6 L519.0 137.0 L520.0 137.3 L521.0 137.2 L522.0 136.6 L523.0 137.0 L524.0 136.9 L525.0 136.6 L526.0 136.6 L527.0 137.1 L528.0 137.1 L529.0 137.6 L530.0 137.3 L531.0 137.2 L532.0 137.1 L533.0 136.8 L534.0 136.5 L535.0 137.5 L536.0 136.5 L537.0 137.4 L538.0 136.8 L539.0 137.6 L540.0 136.8 L541.0 137.5 L542.0 137.3 L543.0 137.2 L544.0 136.5 L545.0 137.4 L546.0 136.9 L547.0 136.8 L548.0 136.7 L549.0 137.4 L550.0 139.9 L551.0 142.9 L552.0 145.6 L553.0 148.9 L554.0 148.6 L555.0 148.6 L556.0 148.6 L557.0 148.6 L558.0 149.2 L559.0 148.6 L560.0 148.4 L561.0 148.8 L562.0 148.0 L563.0 148.4 L564.0 149.2 L565.0 148.4 L566.0 148.8 L567.0 145.7 L568.0 142.3 L569.0 139.6 L570.0 137.2 L571.0 137.2 L572.0 137.0 L573.0 137.3 L574.0 137.1 L575.0 136.6 L576.0 136.6 L577.0 137.0 L578.0 137.0 L579.0 136.8 L580.0 137.2 L581.0 137.2 L582.0 136.8 L583.0 137.6 L584.0 136.5 L585.0 137.5 L586.0 137.6 L587.0 136.5 L588.0 136.8 L589.0 136.5 L590.0 136.9 L591.0 136.8 L592.0 136.8 L593.0 136.8 L594.0 136.7 L595.0 137.4 L596.0 136.7 L597.0 136.8 L598.0 136.6 L599.0 136.9 L600.0 137.2 L601.0 137.2 L602.0 136.8 L603.0 137.5 L604.0 137.6 L605.0 136.6 L606.0 136.5 L607.0 137.6 L608.0 136.9 L609.0 136.4 L610.0 137.1 L611.0 136.8 L612.0 137.4 L613.0 137.6 L614.0 137.5 L615.0 137.5 L616.0 137.4 L617.0 136.7 L618.0 136.7 L619.0 137.5 L620.0 136.7 L621.0 136.7 L622.0 136.8 L623.0 137.0 L624.0 137.3 L625.0 136.7 L626.0 137.6 L627.0 136.6 L628.0 137.2 L629.0 140.1 L630.0 142.3 L631.0 145.2 L632.0 145.1 L633.0 145.4 L634.0 145.2 L635.0 144.8 L636.0 145.1 L637.0 144.5 L638.0 144.9 L639.0 145.5 L640.0 144.8 L641.0 145.2 L642.0 144.4 L643.0 144.9 L644.0 145.1 L645.0 145.1 L646.0 144.9 L647.0 142.6 L648.0 141.6 L649.0 139.1 L650.0 136.6 L651.0 137.5 L652.0 136.6 L653.0 136.9 L654.0 136.6 L655.0 136.8 L656.0 137.2 L657.0 136.9 L658.0 137.4 L659.0 136.5 L660.0 136.9 L661.0 137.0 L662.0 137.3 L663.0 136.7 L664.0 137.5 L665.0 136.7 L666.0 136.9 L667.0 136.5 L668.0 137.0 L669.0 137.4 L670.0 137.4 L671.0 137.2 L672.0 137.1 L673.0 137.4 L674.0 136.4 L675.0 137.5 L676.0 136.7 L677.0 136.9 L678.0 137.0 L679.0 137.6 L680.0 136.6 L681.0 136.9 L682.0 136.7 L683.0 136.5 L684.0 136.6 L685.0 137.3 L686.0 137.4 L687.0 137.5 L688.0 136.9 L689.0 137.1 L690.0 136.5 L691.0 136.9 L692.0 137.5 L693.0 137.3 L694.0 136.8 L695.0 136.8 L696.0 137.1 L697.0 136.4 L698.0 137.3 L699.0 137.3 L700.0 136.5 L701.0 136.6 L702.0 136.7 L703.0 136.8 L704.0 137.5 L705.0 136.7 L706.0 136.8 L707.0 136.9 L708.0 137.5 L709.0 137.3 L710.0 137.0 L711.0 137.3 L712.0 136.8 L713.0 136.7 L714.0 137.6 L715.0 137.3 L716.0 136.6 L717.0 137.4 L718.0 137.5 L719.0 136.6 L720.0 137.1 L721.0 136.6 L722.0 136.8 L723.0 137.3 L724.0 136.7 L725.0 137.4 L726.0 137.3 L727.0 137.4 L728.0 136.6 L729.0 137.4 L730.0 137.2 L731.0 137.5 L732.0 137.5 L733.0 136.8 L734.0 137.0 L735.0 137.3 L736.0 137.2 L737.0 136.4 L738.0 137.5 L739.0 136.5 L740.0 136.7 L741.0 136.4 L742.0 136.6 L743.0 137.4 L744.0 136.6 L745.0 137.4 L746.0 136.5 L747.0 136.9 L748.0 137.4 L749.0 136.7 L750.0 137.5 L751.0 136.9 L752.0 137.3 L753.0 136.9 L754.0 136.6 L755.0 137.4 L756.0 136.7 L757.0 136.7 L758.0 136.6 L759.0 136.6 L760.0 137.0 L761.0 136.5 L762.0 136.6 L763.0 137.4 L764.0 137.2 L765.0 137.2 L766.0 137.6 L767.0 137.1 L768.0 137.5 L769.0 136.6 L770.0 137.2 L771.0 137.1 L772.0 137.5 L773.0 136.5 L774.0 137.0 L775.0 137.0 L776.0 136.4 L777.0 137.4 L778.0 137.3 L779.0 137.6 L780.0 136.8 L781.0 137.6 L782.0 136.9 L783.0 136.8 L784.0 136.6 L785.0 137.5 L786.0 137.0 L787.0 137.3 L788.0 137.1 L789.0 136.9 L790.0 137.4 L791.0 136.7 L792.0 136.6 L793.0 137.1 L794.0 136.6 L795.0 137.1 L796.0 136.7 L797.0 137.3 L798.0 137.1 L799.0 136.6 L800.0 136.6 L801.0 137.5 L802.0 136.5 L803.0 137.3 L804.0 136.8 L805.0 137.0 L806.0 137.1 L807.0 137.6 L808.0 136.4 L809.0 136.5 L810.0 136.6 L811.0 136.5 L812.0 136.8 L813.0 136.8 L814.0 136.9 L815.0 136.9 L816.0 137.0 L817.0 136.5 L818.0 137.2 L819.0 137.5 L820.0 136.5 L821.0 137.3 L822.0 137.0 L823.0 137.5 L824.0 137.2 L825.0 137.3 L826.0 137.5 L827.0 136.6 L828.0 136.9 L829.0 137.4 L830.0 137.0 L831.0 136.9 L832.0 137.2 L833.0 137.3 L834.0 137.1 L835.0 137.6 L836.0 136.6 L837.0 136.9 L838.0 137.3 L839.0 137.2 L840.0 137.4 L841.0 136.6 L842.0 137.5 L843.0 137.1 L844.0 137.5 L845.0 136.4 L846.0 137.4 L847.0 137.2 L848.0 136.9 L849.0 136.6 L850.0 136.7 L851.0 136.7 L852.0 136.7 L853.0 136.5 L854.0 136.6 L855.0 136.7 L856.0 137.0 L857.0 136.9 L858.0 136.7 L859.0 136.9 L860.0 137.1 L861.0 136.7 L862.0 137.1 L863.0 137.1 L864.0 136.7 L865.0 137.0 L866.0 137.4 L867.0 137.4 L868.0 136.9 L869.0 136.5 L870.0 136.6 L871.0 136.4 L872.0 137.1 L873.0 137.6 L874.0 136.9 L875.0 136.5 L876.0 137.0 L877.0 137.0 L878.0 136.8 L879.0 137.2 L880.0 137.2 L881.0 136.8 L882.0 137.5 L883.0 137.1 L884.0 136.9 L885.0 136.4 L886.0 137.1 L887.0 136.4 L888.0 137.0 L889.0 137.4 L890.0 136.4 L891.0 137.0 L892.0 136.5 L893.0 136.6 L894.0 136.5 L895.0 137.4 L896.0 137.0 L897.0 137.4 L898.0 136.8 L899.0 137.2 L900.0 137.5 L901.0 138.4 L902.0 139.2 L903.0 140.3 L904.0 139.9 L905.0 140.8 L906.0 141.9 L907.0 143.0 L908.0 143.5 L909.0 144.3 L910.0 145.7 L911.0 145.8 L912.0 147.5 L913.0 148.0 L914.0 149.0 L915.0 150.7 L916.0 151.0 L917.0 152.1 L918.0 153.8 L919.0 155.0 L920.0 154.4 L921.0 154.6 L921.0 157.4 L920.0 157.3 L919.0 158.0 L918.0 158.3 L917.0 159.5 L916.0 160.5 L915.0 161.2 L914.0 163.2 L913.0 164.3 L912.0 164.6 L911.0 165.4 L910.0 166.3 L909.0 167.5 L908.0 169.0 L907.0 169.5 L906.0 170.2 L905.0 170.6 L904.0 171.8 L903.0 172.2 L902.0 173.3 L901.0 174.1 L900.0 174.0 L899.0 175.8 L898.0 175.3 L897.0 174.8 L896.0 175.2 L895.0 174.9 L894.0 175.1 L893.0 175.8 L892.0 175.4 L891.0 174.7 L890.0 175.6 L889.0 175.0 L888.0 175.6 L887.0 175.0 L886.0 175.3 L885.0 175.2 L884.0 175.7 L883.0 175.3 L882.0 175.0 L881.0 175.2 L880.0 175.7 L879.0 175.3 L878.0 175.1 L877.0 175.2 L876.0 175.8 L875.0 175.5 L874.0 175.2 L873.0 174.7 L872.0 175.7 L871.0 174.8 L870.0 175.6 L869.0 175.0 L868.0 174.7 L867.0 175.3 L866.0 175.0 L865.0 175.1 L864.0 175.6 L863.0 175.0 L862.0 175.3 L861.0 175.0 L860.0 175.1 L859.0 175.1 L858.0 175.6 L857.0 175.1 L856.0 175.8 L855.0 175.3 L854.0 174.6 L853.0 174.8 L852.0 175.5 L851.0 175.2 L850.0 175.5 L849.0 175.2 L848.0 175.6 L847.0 175.4 L846.0 175.0 L845.0 175.5 L844.0 174.9 L843.0 175.5 L842.0 175.1 L841.0 175.1 L840.0 174.7 L839.0 175.5 L838.0 175.8 L837.0 175.2 L836.0 174.9 L835.0 175.0 L834.0 175.3 L833.0 175.2 L832.0 174.9 L831.0 175.2 L830.0 175.3 L829.0 175.5 L828.0 175.4 L827.0 175.3 L826.0 175.3 L825.0 174.9 L824.0 175.1 L823.0 174.8 L822.0 174.8 L821.0 175.2 L820.0 175.2 L819.0 175.3 L818.0 175.4 L817.0 174.9 L816.0 175.1 L815.0 174.9 L814.0 175.7 L813.0 174.9 L812.0 174.9 L811.0 174.6 L810.0 175.7 L809.0 175.4 L808.0 175.5 L807.0 174.8 L806.0 175.2 L805.0 174.7 L804.0 175.0 L803.0 175.1 L802.0 175.7 L801.0 175.2 L800.0 175.6 L799.0 175.7 L798.0 175.8 L797.0 175.0 L796.0 175.0 L795.0 175.7 L794.0 175.2 L793.0 175.1 L792.0 175.7 L791.0 174.8 L790.0 175.3 L789.0 175.6 L788.0 174.8 L787.0 174.7 L786.0 175.2 L785.0 174.7 L784.0 175.5 L783.0 174.7 L782.0 175.2 L781.0 175.3 L780.0 174.8 L779.0 174.7 L778.0 175.6 L777.0 174.7 L776.0 174.9 L775.0 174.6 L774.0 175.2 L773.0 175.2 L772.0 175.6 L771.0 175.5 L770.0 175.5 L769.0 175.6 L768.0 175.5 L767.0 175.2 L766.0 175.2 L765.0 175.3 L764.0 174.8 L763.0 175.6 L762.0 174.9 L761.0 175.2 L760.0 174.6 L759.0 175.6 L758.0 175.0 L757.0 174.7 L756.0 175.1 L755.0 174.7 L754.0 175.3 L753.0 175.4 L752.0 174.8 L751.0 175.2 L750.0 174.7 L749.0 174.8 L748.0 175.5 L747.0 174.8 L746.0 174.9 L745.0 175.1 L744.0 175.2 L743.0 174.6 L742.0 175.0 L741.0 174.6 L740.0 175.0 L739.0 174.7 L738.0 174.9 L737.0 175.7 L736.0 175.8 L735.0 174.8 L734.0 174.9 L733.0 174.9 L732.0 175.7 L731.0 175.8 L730.0 175.7 L729.0 175.2 L728.0 175.0 L727.0 174.9 L726.0 175.1 L725.0 175.6 L724.0 175.3 L723.0 174.7 L722.0 174.8 L721.0 175.2 L720.0 175.0 L719.0 175.4 L718.0 175.7 L717.0 175.1 L716.0 175.7 L715.0 175.7 L714.0 175.7 L713.0 174.8 L712.0 174.6 L711.0 174.8 L710.0 174.8 L709.0 174.7 L708.0 175.0 L707.0 175.5 L706.0 175.0 L705.0 175.7 L704.0 174.8 L703.0 175.8 L702.0 175.5 L701.0 174.7 L700.0 175.7 L699.0 175.0 L698.0 174.6 L697.0 175.8 L696.0 174.8 L695.0 175.1 L694.0 175.7 L693.0 175.3 L692.0 175.8 L691.0 175.1 L690.0 174.7 L689.0 175.7 L688.0 175.6 L687.0 174.7 L686.0 174.8 L685.0 174.6 L684.0 175.8 L683.0 175.5 L682.0 175.1 L681.0 174.9 L680.0 175.2 L679.0 175.8 L678.0 174.6 L677.0 175.0 L676.0 174.8 L675.0 175.4 L674.0 175.0 L673.0 174.7 L672.0 175.2 L671.0 175.3 L670.0 175.4 L669.0 174.8 L668.0 175.3 L667.0 175.2 L666.0 175.7 L665.0 174.9 L664.0 175.6 L663.0 175.2 L662.0 175.5 L661.0 174.8 L660.0 175.4 L659.0 174.9 L658.0 175.5 L657.0 175.6 L656.0 174.7 L655.0 175.7 L654.0 175.6 L653.0 174.9 L652.0 175.6 L651.0 175.6 L650.0 175.7 L649.0 174.4 L648.0 173.1 L647.0 172.2 L646.0 172.1 L645.0 171.8 L644.0 172.1 L643.0 171.4 L642.0 172.0 L641.0 171.7 L640.0 172.0 L639.0 172.2 L638.0 171.4 L637.0 171.9 L636.0 171.9 L635.0 171.5 L634.0 171.8 L633.0 172.0 L632.0 171.8 L631.0 171.7 L630.0 172.3 L629.0 174.4 L628.0 175.5 L627.0 174.7 L626.0 175.4 L625.0 174.6 L624.0 175.8 L623.0 175.7 L622.0 175.5 L621.0 174.7 L620.0 175.6 L619.0 175.5 L618.0 174.8 L617.0 174.9 L616.0 174.6 L615.0 175.6 L614.0 175.8 L613.0 175.4 L612.0 174.6 L611.0 174.9 L610.0 174.7 L609.0 175.2 L608.0 175.7 L607.0 175.1 L606.0 175.1 L605.0 175.3 L604.0 174.7 L603.0 175.3 L602.0 175.7 L601.0 175.1 L600.0 175.1 L599.0 174.9 L598.0 175.5 L597.0 175.0 L596.0 175.7 L595.0 174.6 L594.0 174.7 L593.0 175.1 L592.0 174.9 L591.0 175.3 L590.0 175.4 L589.0 175.3 L588.0 175.5 L587.0 175.3 L586.0 174.8 L585.0 175.0 L584.0 175.3 L583.0 175.5 L582.0 175.5 L581.0 175.3 L580.0 175.0 L579.0 175.6 L578.0 175.8 L577.0 174.9 L576.0 175.1 L575.0 175.0 L574.0 175.3 L573.0 175.1 L572.0 175.5 L571.0 175.2 L570.0 175.6 L569.0 173.4 L568.0 170.7 L567.0 169.3 L566.0 168.0 L565.0 167.9 L564.0 167.5 L563.0 167.6 L562.0 166.9 L561.0 167.3 L560.0 167.8 L559.0 167.5 L558.0 167.8 L557.0 167.8 L556.0 167.4 L555.0 167.0 L554.0 166.9 L553.0 167.0 L552.0 169.1 L551.0 171.8 L550.0 173.5 L549.0 175.4 L548.0 175.6 L547.0 175.7 L546.0 175.5 L545.0 175.7 L544.0 175.6 L543.0 174.8 L542.0 175.5 L541.0 174.8 L540.0 174.9 L539.0 175.7 L538.0 174.6 L537.0 175.6 L536.0 175.5 L535.0 175.6 L534.0 175.6 L533.0 175.0 L532.0 175.4 L531.0 175.2 L530.0 174.9 L529.0 175.5 L528.0 174.8 L527.0 174.9 L526.0 174.9 L525.0 175.0 L524.0 174.8 L523.0 175.0 L522.0 175.6 L521.0 175.4 L520.0 175.8 L519.0 175.3 L518.0 175.4 L517.0 175.5 L516.0 174.9 L515.0 175.6 L514.0 175.2 L513.0 175.5 L512.0 172.7 L511.0 170.9 L510.0 168.4 L509.0 166.1 L508.0 165.7 L507.0 166.8 L506.0 166.5 L505.0 166.4 L504.0 166.7 L503.0 166.2 L502.0 166.4 L501.0 166.5 L500.0 166.3 L499.0 166.2 L498.0 166.5 L497.0 166.3 L496.0 166.8 L495.0 166.1 L494.0 168.6 L493.0 171.2 L492.0 172.8 L491.0 175.1 L490.0 174.9 L489.0 175.5 L488.0 175.1 L487.0 175.4 L486.0 175.1 L485.0 175.4 L484.0 175.4 L483.0 175.7 L482.0 174.9 L481.0 175.5 L480.0 175.1 L479.0 175.5 L478.0 175.3 L477.0 175.2 L476.0 175.2 L475.0 175.5 L474.0 174.6 L473.0 174.8 L472.0 175.4 L471.0 175.1 L470.0 175.6 L469.0 175.1 L468.0 175.8 L467.0 175.5 L466.0 174.8 L465.0 174.8 L464.0 175.0 L463.0 174.8 L462.0 175.6 L461.0 175.0 L460.0 174.9 L459.0 175.2 L458.0 175.3 L457.0 175.1 L456.0 175.5 L455.0 175.6 L454.0 175.0 L453.0 175.4 L452.0 175.5 L451.0 175.2 L450.0 175.7 L449.0 175.2 L448.0 174.9 L447.0 174.6 L446.0 174.7 L445.0 175.1 L444.0 175.0 L443.0 175.5 L442.0 175.5 L441.0 175.4 L440.0 175.2 L439.0 174.9 L438.0 175.7 L437.0 175.6 L436.0 175.2 L435.0 175.6 L434.0 175.2 L433.0 175.8 L432.0 174.8 L431.0 174.8 L430.0 174.7 L429.0 174.9 L428.0 175.4 L427.0 175.5 L426.0 175.1 L425.0 175.3 L424.0 175.2 L423.0 175.0 L422.0 175.5 L421.0 174.9 L420.0 175.1 L419.0 174.8 L418.0 174.7 L417.0 174.9 L416.0 175.6 L415.0 175.6 L414.0 174.6 L413.0 174.8 L412.0 175.7 L411.0 175.6 L410.0 175.7 L409.0 175.6 L408.0 175.3 L407.0 175.5 L406.0 175.4 L405.0 174.6 L404.0 174.8 L403.0 175.7 L402.0 174.6 L401.0 175.7 L400.0 175.3 L399.0 175.0 L398.0 175.5 L397.0 175.6 L396.0 175.6 L395.0 175.8 L394.0 175.4 L393.0 175.7 L392.0 175.0 L391.0 175.0 L390.0 175.7 L389.0 174.9 L388.0 174.6 L387.0 174.9 L386.0 175.4 L385.0 175.2 L384.0 175.1 L383.0 174.9 L382.0 175.6 L381.0 175.5 L380.0 174.6 L379.0 174.7 L378.0 175.1 L377.0 175.2 L376.0 175.6 L375.0 175.5 L374.0 175.7 L373.0 175.0 L372.0 174.8 L371.0 175.4 L370.0 175.3 L369.0 174.8 L368.0 175.3 L367.0 175.5 L366.0 174.9 L365.0 175.2 L364.0 175.7 L363.0 175.5 L362.0 175.1 L361.0 175.0 L360.0 175.4 L359.0 174.9 L358.0 175.5 L357.0 175.4 L356.0 174.8 L355.0 175.7 L354.0 175.2 L353.0 174.8 L352.0 175.3 L351.0 175.0 L350.0 175.0 L349.0 174.6 L348.0 174.9 L347.0 175.7 L346.0 175.1 L345.0 174.8 L344.0 174.6 L343.0 175.4 L342.0 175.8 L341.0 174.9 L340.0 174.7 L339.0 174.8 L338.0 175.5 L337.0 175.3 L336.0 174.9 L335.0 175.1 L334.0 175.8 L333.0 175.7 L332.0 175.3 L331.0 175.0 L330.0 175.2 L329.0 175.5 L328.0 175.7 L327.0 175.7 L326.0 174.8 L325.0 175.0 L324.0 174.9 L323.0 175.7 L322.0 174.8 L321.0 174.9 L320.0 174.8 L319.0 175.0 L318.0 175.7 L317.0 174.8 L316.0 175.7 L315.0 175.8 L314.0 175.6 L313.0 175.8 L312.0 174.8 L311.0 175.1 L310.0 174.7 L309.0 175.5 L308.0 174.7 L307.0 174.6 L306.0 175.1 L305.0 175.1 L304.0 174.7 L303.0 174.8 L302.0 175.5 L301.0 174.9 L300.0 175.3 L299.0 175.1 L298.0 175.4 L297.0 175.3 L296.0 175.0 L295.0 175.3 L294.0 174.7 L293.0 174.6 L292.0 175.3 L291.0 175.7 L290.0 174.9 L289.0 175.1 L288.0 175.1 L287.0 174.8 L286.0 175.6 L285.0 174.9 L284.0 174.8 L283.0 175.3 L282.0 175.1 L281.0 174.7 L280.0 175.8 L279.0 174.8 L278.0 175.8 L277.0 175.2 L276.0 175.7 L275.0 174.9 L274.0 175.2 L273.0 175.3 L272.0 175.7 L271.0 175.3 L270.0 174.8 L269.0 175.7 L268.0 175.6 L267.0 175.7 L266.0 174.8 L265.0 174.8 L264.0 175.8 L263.0 175.1 L262.0 175.3 L261.0 175.7 L260.0 174.9 L259.0 175.4 L258.0 174.7 L257.0 175.3 L256.0 174.7 L255.0 175.3 L254.0 174.8 L253.0 174.8 L252.0 175.0 L251.0 174.8 L250.0 175.3 L249.0 174.8 L248.0 175.0 L247.0 175.3Z" fill="#1552cc"/><path d="M247.0 141.8 L248.0 141.5 L249.0 141.5 L250.0 141.7 L251.0 141.2 L252.0 141.6 L253.0 141.3 L254.0 141.4 L255.0 141.5 L256.0 141.7 L257.0 141.4 L258.0 141.6 L259.0 141.5 L260.0 141.7 L261.0 141.6 L262.0 141.2 L263.0 141.5 L264.0 141.5 L265.0 141.6 L266.0 141.7 L267.0 141.6 L268.0 141.7 L269.0 141.7 L270.0 141.4 L271.0 141.7 L272.0 141.7 L273.0 141.3 L274.0 141.5 L275.0 141.3 L276.0 141.6 L277.0 141.6 L278.0 141.7 L279.0 141.5 L280.0 141.5 L281.0 141.4 L282.0 141.3 L283.0 141.6 L284.0 141.4 L285.0 141.3 L286.0 141.5 L287.0 141.6 L288.0 141.6 L289.0 141.5 L290.0 141.6 L291.0 141.7 L292.0 141.6 L293.0 141.7 L294.0 141.6 L295.0 141.6 L296.0 141.6 L297.0 141.7 L298.0 141.6 L299.0 141.3 L300.0 141.3 L301.0 141.7 L302.0 141.8 L303.0 141.4 L304.0 141.6 L305.0 141.4 L306.0 141.3 L307.0 141.4 L308.0 141.7 L309.0 141.4 L310.0 141.8 L311.0 141.7 L312.0 141.6 L313.0 141.8 L314.0 141.4 L315.0 141.3 L316.0 141.4 L317.0 141.5 L318.0 141.6 L319.0 141.3 L320.0 141.6 L321.0 141.3 L322.0 141.8 L323.0 141.7 L324.0 141.7 L325.0 141.4 L326.0 141.4 L327.0 141.4 L328.0 141.6 L329.0 141.2 L330.0 141.2 L331.0 141.4 L332.0 141.4 L333.0 141.8 L334.0 141.5 L335.0 141.2 L336.0 141.3 L337.0 141.4 L338.0 141.6 L339.0 141.2 L340.0 141.5 L341.0 141.8 L342.0 141.6 L343.0 141.6 L344.0 141.4 L345.0 141.7 L346.0 141.5 L347.0 141.2 L348.0 141.6 L349.0 141.7 L350.0 141.6 L351.0 141.5 L352.0 141.7 L353.0 141.4 L354.0 141.3 L355.0 141.7 L356.0 141.6 L357.0 141.8 L358.0 141.7 L359.0 141.5 L360.0 141.6 L361.0 141.6 L362.0 141.8 L363.0 141.2 L364.0 141.7 L365.0 141.2 L366.0 141.7 L367.0 141.5 L368.0 141.5 L369.0 141.2 L370.0 141.4 L371.0 141.4 L372.0 141.7 L373.0 141.8 L374.0 141.3 L375.0 141.7 L376.0 141.3 L377.0 141.7 L378.0 141.3 L379.0 141.6 L380.0 141.3 L381.0 141.6 L382.0 141.6 L383.0 141.7 L384.0 141.5 L385.0 141.3 L386.0 141.3 L387.0 141.5 L388.0 141.7 L389.0 141.5 L390.0 141.4 L391.0 141.5 L392.0 141.7 L393.0 141.5 L394.0 141.4 L395.0 141.3 L396.0 141.3 L397.0 141.6 L398.0 141.5 L399.0 141.6 L400.0 141.4 L401.0 141.3 L402.0 141.6 L403.0 141.5 L404.0 141.7 L405.0 141.6 L406.0 141.2 L407.0 141.3 L408.0 141.2 L409.0 141.3 L410.0 141.4 L411.0 141.6 L412.0 141.2 L413.0 141.4 L414.0 141.6 L415.0 141.8 L416.0 141.4 L417.0 141.7 L418.0 141.6 L419.0 141.6 L420.0 141.5 L421.0 141.7 L422.0 141.3 L423.0 141.7 L424.0 141.6 L425.0 141.5 L426.0 141.5 L427.0 141.7 L428.0 141.7 L429.0 141.4 L430.0 141.6 L431.0 141.5 L432.0 141.5 L433.0 141.3 L434.0 141.2 L435.0 141.7 L436.0 141.6 L437.0 141.2 L438.0 141.3 L439.0 141.3 L440.0 141.7 L441.0 141.8 L442.0 141.7 L443.0 141.4 L444.0 141.3 L445.0 141.3 L446.0 141.2 L447.0 141.7 L448.0 141.6 L449.0 141.4 L450.0 141.7 L451.0 141.4 L452.0 141.4 L453.0 141.4 L454.0 141.5 L455.0 141.7 L456.0 141.4 L457.0 141.7 L458.0 141.3 L459.0 141.7 L460.0 141.7 L461.0 141.7 L462.0 141.6 L463.0 141.6 L464.0 141.3 L465.0 141.4 L466.0 141.2 L467.0 141.6 L468.0 141.5 L469.0 141.3 L470.0 141.7 L471.0 141.4 L472.0 141.5 L473.0 141.3 L474.0 141.3 L475.0 141.8 L476.0 141.7 L477.0 141.4 L478.0 141.7 L479.0 141.5 L480.0 141.6 L481.0 141.8 L482.0 141.6 L483.0 141.5 L484.0 141.8 L485.0 141.4 L486.0 141.6 L487.0 141.6 L488.0 141.5 L489.0 141.2 L490.0 141.5 L491.0 141.3 L492.0 144.6 L493.0 147.9 L494.0 150.8 L495.0 153.8 L496.0 154.2 L497.0 154.0 L498.0 154.0 L499.0 154.1 L500.0 154.4 L501.0 154.2 L502.0 154.1 L503.0 154.3 L504.0 154.2 L505.0 154.4 L506.0 154.1 L507.0 154.1 L508.0 154.3 L509.0 154.2 L510.0 150.8 L511.0 147.5 L512.0 144.4 L513.0 141.8 L514.0 141.5 L515.0 141.6 L516.0 141.5 L517.0 141.8 L518.0 141.3 L519.0 141.6 L520.0 141.7 L521.0 141.4 L522.0 141.6 L523.0 141.4 L524.0 141.4 L525.0 141.4 L526.0 141.4 L527.0 141.3 L528.0 141.6 L529.0 141.7 L530.0 141.3 L531.0 141.2 L532.0 141.6 L533.0 141.4 L534.0 141.4 L535.0 141.8 L536.0 141.8 L537.0 141.6 L538.0 141.4 L539.0 141.5 L540.0 141.2 L541.0 141.2 L542.0 141.4 L543.0 141.6 L544.0 141.7 L545.0 141.3 L546.0 141.3 L547.0 141.5 L548.0 141.5 L549.0 141.4 L550.0 144.3 L551.0 147.2 L552.0 150.0 L553.0 152.9 L554.0 153.1 L555.0 153.1 L556.0 153.3 L557.0 153.1 L558.0 152.9 L559.0 152.8 L560.0 152.9 L561.0 153.4 L562.0 153.4 L563.0 153.1 L564.0 152.8 L565.0 153.3 L566.0 153.0 L567.0 150.4 L568.0 147.1 L569.0 144.1 L570.0 141.4 L571.0 141.3 L572.0 141.6 L573.0 141.7 L574.0 141.8 L575.0 141.6 L576.0 141.8 L577.0 141.6 L578.0 141.2 L579.0 141.7 L580.0 141.6 L581.0 141.7 L582.0 141.3 L583.0 141.6 L584.0 141.7 L585.0 141.7 L586.0 141.3 L587.0 141.3 L588.0 141.6 L589.0 141.5 L590.0 141.7 L591.0 141.4 L592.0 141.5 L593.0 141.7 L594.0 141.6 L595.0 141.3 L596.0 141.3 L597.0 141.6 L598.0 141.7 L599.0 141.8 L600.0 141.7 L601.0 141.7 L602.0 141.4 L603.0 141.6 L604.0 141.4 L605.0 141.2 L606.0 141.7 L607.0 141.4 L608.0 141.5 L609.0 141.5 L610.0 141.8 L611.0 141.6 L612.0 141.7 L613.0 141.7 L614.0 141.7 L615.0 141.7 L616.0 141.5 L617.0 141.6 L618.0 141.2 L619.0 141.7 L620.0 141.3 L621.0 141.6 L622.0 141.6 L623.0 141.8 L624.0 141.6 L625.0 141.6 L626.0 141.4 L627.0 141.5 L628.0 141.4 L629.0 143.9 L630.0 146.9 L631.0 149.5 L632.0 149.6 L633.0 149.6 L634.0 149.2 L635.0 149.4 L636.0 149.6 L637.0 149.6 L638.0 149.7 L639.0 149.3 L640.0 149.3 L641.0 149.4 L642.0 149.4 L643.0 149.6 L644.0 149.8 L645.0 149.3 L646.0 149.4 L647.0 147.7 L648.0 145.4 L649.0 143.4 L650.0 141.5 L651.0 141.4 L652.0 141.4 L653.0 141.7 L654.0 141.6 L655.0 141.5 L656.0 141.5 L657.0 141.7 L658.0 141.2 L659.0 141.5 L660.0 141.3 L661.0 141.7 L662.0 141.5 L663.0 141.3 L664.0 141.3 L665.0 141.6 L666.0 141.3 L667.0 141.7 L668.0 141.7 L669.0 141.3 L670.0 141.5 L671.0 141.6 L672.0 141.4 L673.0 141.5 L674.0 141.3 L675.0 141.4 L676.0 141.5 L677.0 141.6 L678.0 141.6 L679.0 141.7 L680.0 141.8 L681.0 141.4 L682.0 141.6 L683.0 141.3 L684.0 141.4 L685.0 141.7 L686.0 141.3 L687.0 141.6 L688.0 141.5 L689.0 141.4 L690.0 141.6 L691.0 141.3 L692.0 141.6 L693.0 141.2 L694.0 141.2 L695.0 141.6 L696.0 141.6 L697.0 141.3 L698.0 141.5 L699.0 141.3 L700.0 141.8 L701.0 141.5 L702.0 141.3 L703.0 141.5 L704.0 141.5 L705.0 141.5 L706.0 141.4 L707.0 141.6 L708.0 141.4 L709.0 141.3 L710.0 141.7 L711.0 141.8 L712.0 141.7 L713.0 141.3 L714.0 141.8 L715.0 141.4 L716.0 141.8 L717.0 141.5 L718.0 141.2 L719.0 141.3 L720.0 141.6 L721.0 141.8 L722.0 141.6 L723.0 141.6 L724.0 141.3 L725.0 141.5 L726.0 141.8 L727.0 141.3 L728.0 141.3 L729.0 141.7 L730.0 141.5 L731.0 141.5 L732.0 141.4 L733.0 141.3 L734.0 141.2 L735.0 141.8 L736.0 141.5 L737.0 141.5 L738.0 141.6 L739.0 141.6 L740.0 141.3 L741.0 141.5 L742.0 141.5 L743.0 141.8 L744.0 141.4 L745.0 141.3 L746.0 141.4 L747.0 141.2 L748.0 141.3 L749.0 141.4 L750.0 141.6 L751.0 141.3 L752.0 141.2 L753.0 141.7 L754.0 141.3 L755.0 141.6 L756.0 141.6 L757.0 141.4 L758.0 141.8 L759.0 141.8 L760.0 141.6 L761.0 141.5 L762.0 141.5 L763.0 141.3 L764.0 141.3 L765.0 141.3 L766.0 141.6 L767.0 141.6 L768.0 141.7 L769.0 141.7 L770.0 141.4 L771.0 141.4 L772.0 141.3 L773.0 141.2 L774.0 141.2 L775.0 141.6 L776.0 141.3 L777.0 141.2 L778.0 141.5 L779.0 141.4 L780.0 141.7 L781.0 141.6 L782.0 141.3 L783.0 141.2 L784.0 141.4 L785.0 141.6 L786.0 141.4 L787.0 141.6 L788.0 141.7 L789.0 141.7 L790.0 141.6 L791.0 141.5 L792.0 141.5 L793.0 141.4 L794.0 141.8 L795.0 141.7 L796.0 141.7 L797.0 141.6 L798.0 141.4 L799.0 141.7 L800.0 141.6 L801.0 141.3 L802.0 141.7 L803.0 141.3 L804.0 141.5 L805.0 141.7 L806.0 141.7 L807.0 141.5 L808.0 141.7 L809.0 141.7 L810.0 141.7 L811.0 141.5 L812.0 141.8 L813.0 141.5 L814.0 141.5 L815.0 141.7 L816.0 141.7 L817.0 141.8 L818.0 141.5 L819.0 141.3 L820.0 141.5 L821.0 141.4 L822.0 141.4 L823.0 141.7 L824.0 141.2 L825.0 141.4 L826.0 141.3 L827.0 141.3 L828.0 141.2 L829.0 141.2 L830.0 141.6 L831.0 141.7 L832.0 141.4 L833.0 141.6 L834.0 141.7 L835.0 141.6 L836.0 141.2 L837.0 141.5 L838.0 141.3 L839.0 141.3 L840.0 141.7 L841.0 141.3 L842.0 141.7 L843.0 141.6 L844.0 141.2 L845.0 141.4 L846.0 141.3 L847.0 141.3 L848.0 141.3 L849.0 141.4 L850.0 141.3 L851.0 141.3 L852.0 141.2 L853.0 141.2 L854.0 141.2 L855.0 141.6 L856.0 141.7 L857.0 141.5 L858.0 141.5 L859.0 141.4 L860.0 141.6 L861.0 141.3 L862.0 141.2 L863.0 141.6 L864.0 141.4 L865.0 141.6 L866.0 141.3 L867.0 141.8 L868.0 141.8 L869.0 141.3 L870.0 141.4 L871.0 141.6 L872.0 141.6 L873.0 141.4 L874.0 141.7 L875.0 141.4 L876.0 141.4 L877.0 141.7 L878.0 141.8 L879.0 141.7 L880.0 141.2 L881.0 141.7 L882.0 141.4 L883.0 141.6 L884.0 141.2 L885.0 141.2 L886.0 141.3 L887.0 141.5 L888.0 141.7 L889.0 141.5 L890.0 141.6 L891.0 141.7 L892.0 141.3 L893.0 141.6 L894.0 141.3 L895.0 141.8 L896.0 141.5 L897.0 141.6 L898.0 141.4 L899.0 141.5 L900.0 141.9 L901.0 142.9 L902.0 143.8 L903.0 144.1 L904.0 144.9 L905.0 145.3 L906.0 146.2 L907.0 147.3 L908.0 147.8 L909.0 149.1 L910.0 149.7 L911.0 150.7 L912.0 151.4 L913.0 152.4 L914.0 153.6 L915.0 154.4 L916.0 155.6 L917.0 156.9 L918.0 157.8 L919.0 159.1 L920.0 159.0 L921.0 158.8 L921.0 152.9 L920.0 153.2 L919.0 152.8 L918.0 154.2 L917.0 155.4 L916.0 156.3 L915.0 157.4 L914.0 158.3 L913.0 159.3 L912.0 160.4 L911.0 161.5 L910.0 161.9 L909.0 163.1 L908.0 164.2 L907.0 164.6 L906.0 165.4 L905.0 166.6 L904.0 167.4 L903.0 167.9 L902.0 168.8 L901.0 169.6 L900.0 170.0 L899.0 170.8 L898.0 170.6 L897.0 170.8 L896.0 171.0 L895.0 170.8 L894.0 170.8 L893.0 171.0 L892.0 170.7 L891.0 170.7 L890.0 170.6 L889.0 170.9 L888.0 171.0 L887.0 170.4 L886.0 170.5 L885.0 170.5 L884.0 170.7 L883.0 170.7 L882.0 170.9 L881.0 170.9 L880.0 170.6 L879.0 170.6 L878.0 170.9 L877.0 170.8 L876.0 170.9 L875.0 170.7 L874.0 170.6 L873.0 170.6 L872.0 170.9 L871.0 170.5 L870.0 170.7 L869.0 170.7 L868.0 170.5 L867.0 170.7 L866.0 170.9 L865.0 170.8 L864.0 170.9 L863.0 170.5 L862.0 170.9 L861.0 170.8 L860.0 170.9 L859.0 170.8 L858.0 170.9 L857.0 170.5 L856.0 170.5 L855.0 170.9 L854.0 170.9 L853.0 170.5 L852.0 170.7 L851.0 170.6 L850.0 170.9 L849.0 170.7 L848.0 170.9 L847.0 170.8 L846.0 171.0 L845.0 170.5 L844.0 170.8 L843.0 170.5 L842.0 170.8 L841.0 170.9 L840.0 170.8 L839.0 170.8 L838.0 170.9 L837.0 170.7 L836.0 170.9 L835.0 171.0 L834.0 170.5 L833.0 170.5 L832.0 170.5 L831.0 170.8 L830.0 170.5 L829.0 170.6 L828.0 170.4 L827.0 170.7 L826.0 170.6 L825.0 170.8 L824.0 170.4 L823.0 170.8 L822.0 170.4 L821.0 170.9 L820.0 170.5 L819.0 170.5 L818.0 170.6 L817.0 170.6 L816.0 170.6 L815.0 170.9 L814.0 170.8 L813.0 170.9 L812.0 171.0 L811.0 170.9 L810.0 170.9 L809.0 170.5 L808.0 170.6 L807.0 170.6 L806.0 170.7 L805.0 170.7 L804.0 170.7 L803.0 170.5 L802.0 170.5 L801.0 170.7 L800.0 170.9 L799.0 171.0 L798.0 170.5 L797.0 170.6 L796.0 170.7 L795.0 170.8 L794.0 170.7 L793.0 170.7 L792.0 170.9 L791.0 170.5 L790.0 170.4 L789.0 170.9 L788.0 170.8 L787.0 170.7 L786.0 170.4 L785.0 171.0 L784.0 171.0 L783.0 170.4 L782.0 170.5 L781.0 170.9 L780.0 170.5 L779.0 170.7 L778.0 170.9 L777.0 170.5 L776.0 170.7 L775.0 170.6 L774.0 170.7 L773.0 171.0 L772.0 170.5 L771.0 170.5 L770.0 170.7 L769.0 170.7 L768.0 170.7 L767.0 170.8 L766.0 170.4 L765.0 171.0 L764.0 170.5 L763.0 170.6 L762.0 170.5 L761.0 170.6 L760.0 170.5 L759.0 170.9 L758.0 170.8 L757.0 170.5 L756.0 170.9 L755.0 170.8 L754.0 171.0 L753.0 170.5 L752.0 170.5 L751.0 170.5 L750.0 170.5 L749.0 170.8 L748.0 170.7 L747.0 170.7 L746.0 170.5 L745.0 170.4 L744.0 170.4 L743.0 170.7 L742.0 170.9 L741.0 171.0 L740.0 170.8 L739.0 170.8 L738.0 170.9 L737.0 170.6 L736.0 170.6 L735.0 170.6 L734.0 170.7 L733.0 170.5 L732.0 170.6 L731.0 170.7 L730.0 170.6 L729.0 170.4 L728.0 170.6 L727.0 170.9 L726.0 170.6 L725.0 170.7 L724.0 170.7 L723.0 170.6 L722.0 170.6 L721.0 171.0 L720.0 170.7 L719.0 170.5 L718.0 170.9 L717.0 170.8 L716.0 170.8 L715.0 170.7 L714.0 170.8 L713.0 170.7 L712.0 170.5 L711.0 170.9 L710.0 170.5 L709.0 170.9 L708.0 170.7 L707.0 170.4 L706.0 170.8 L705.0 170.9 L704.0 170.7 L703.0 170.9 L702.0 170.6 L701.0 170.7 L700.0 170.8 L699.0 170.9 L698.0 170.7 L697.0 170.6 L696.0 170.4 L695.0 170.8 L694.0 170.8 L693.0 170.5 L692.0 170.7 L691.0 170.6 L690.0 170.8 L689.0 170.6 L688.0 170.6 L687.0 170.4 L686.0 170.8 L685.0 170.7 L684.0 170.9 L683.0 170.5 L682.0 170.5 L681.0 170.6 L680.0 170.5 L679.0 170.7 L678.0 170.4 L677.0 170.6 L676.0 170.5 L675.0 170.6 L674.0 170.5 L673.0 170.9 L672.0 170.7 L671.0 171.0 L670.0 170.5 L669.0 170.7 L668.0 170.6 L667.0 170.6 L666.0 170.5 L665.0 170.9 L664.0 170.4 L663.0 170.9 L662.0 170.8 L661.0 170.9 L660.0 170.5 L659.0 170.7 L658.0 170.7 L657.0 170.5 L656.0 170.7 L655.0 170.8 L654.0 170.9 L653.0 170.8 L652.0 170.7 L651.0 170.6 L650.0 170.8 L649.0 169.3 L648.0 168.0 L647.0 166.9 L646.0 165.8 L645.0 165.5 L644.0 165.6 L643.0 165.8 L642.0 165.5 L641.0 165.4 L640.0 165.2 L639.0 165.7 L638.0 165.3 L637.0 165.3 L636.0 165.6 L635.0 165.8 L634.0 165.2 L633.0 165.3 L632.0 165.4 L631.0 165.8 L630.0 167.1 L629.0 169.1 L628.0 171.0 L627.0 170.7 L626.0 170.8 L625.0 170.4 L624.0 170.7 L623.0 170.7 L622.0 170.4 L621.0 170.5 L620.0 170.8 L619.0 171.0 L618.0 170.6 L617.0 170.7 L616.0 170.5 L615.0 170.8 L614.0 170.8 L613.0 170.7 L612.0 170.7 L611.0 170.9 L610.0 171.0 L609.0 170.5 L608.0 170.5 L607.0 170.4 L606.0 170.9 L605.0 170.4 L604.0 170.9 L603.0 171.0 L602.0 170.5 L601.0 170.5 L600.0 170.8 L599.0 170.9 L598.0 171.0 L597.0 170.4 L596.0 171.0 L595.0 170.5 L594.0 170.9 L593.0 170.9 L592.0 170.9 L591.0 170.7 L590.0 170.8 L589.0 170.9 L588.0 170.6 L587.0 170.9 L586.0 170.6 L585.0 170.9 L584.0 170.7 L583.0 171.0 L582.0 170.8 L581.0 170.5 L580.0 170.7 L579.0 170.6 L578.0 170.8 L577.0 171.0 L576.0 170.7 L575.0 170.9 L574.0 170.8 L573.0 170.8 L572.0 170.9 L571.0 170.7 L570.0 170.6 L569.0 168.7 L568.0 166.6 L567.0 164.5 L566.0 163.1 L565.0 162.6 L564.0 162.7 L563.0 162.6 L562.0 162.8 L561.0 162.6 L560.0 162.6 L559.0 162.6 L558.0 162.7 L557.0 162.9 L556.0 162.5 L555.0 163.1 L554.0 162.7 L553.0 163.1 L552.0 164.7 L551.0 166.9 L550.0 168.6 L549.0 170.6 L548.0 170.8 L547.0 170.8 L546.0 170.7 L545.0 170.5 L544.0 170.5 L543.0 170.5 L542.0 170.8 L541.0 170.4 L540.0 170.7 L539.0 170.4 L538.0 170.6 L537.0 170.7 L536.0 170.8 L535.0 170.6 L534.0 170.6 L533.0 170.6 L532.0 170.8 L531.0 170.5 L530.0 170.8 L529.0 170.7 L528.0 170.5 L527.0 170.9 L526.0 170.4 L525.0 171.0 L524.0 170.5 L523.0 170.9 L522.0 170.5 L521.0 170.5 L520.0 170.6 L519.0 170.4 L518.0 170.6 L517.0 170.7 L516.0 170.9 L515.0 170.9 L514.0 171.0 L513.0 170.5 L512.0 168.5 L511.0 166.1 L510.0 164.0 L509.0 161.6 L508.0 161.4 L507.0 161.6 L506.0 161.7 L505.0 161.9 L504.0 161.5 L503.0 161.5 L502.0 161.6 L501.0 162.0 L500.0 161.6 L499.0 161.6 L498.0 161.6 L497.0 161.7 L496.0 161.9 L495.0 161.8 L494.0 164.2 L493.0 166.1 L492.0 168.5 L491.0 170.9 L490.0 170.9 L489.0 170.4 L488.0 171.0 L487.0 170.7 L486.0 170.7 L485.0 170.6 L484.0 170.5 L483.0 171.0 L482.0 170.4 L481.0 170.7 L480.0 170.6 L479.0 170.7 L478.0 170.6 L477.0 170.4 L476.0 170.9 L475.0 170.6 L474.0 170.8 L473.0 170.6 L472.0 170.5 L471.0 170.6 L470.0 170.9 L469.0 170.4 L468.0 170.9 L467.0 170.5 L466.0 170.4 L465.0 170.9 L464.0 170.7 L463.0 170.5 L462.0 170.8 L461.0 170.7 L460.0 170.9 L459.0 170.4 L458.0 170.7 L457.0 170.7 L456.0 170.6 L455.0 171.0 L454.0 170.9 L453.0 170.5 L452.0 170.4 L451.0 171.0 L450.0 170.6 L449.0 170.9 L448.0 170.9 L447.0 170.8 L446.0 170.9 L445.0 170.7 L444.0 170.8 L443.0 170.7 L442.0 170.6 L441.0 170.8 L440.0 170.6 L439.0 170.4 L438.0 170.5 L437.0 170.7 L436.0 170.5 L435.0 170.9 L434.0 170.8 L433.0 170.5 L432.0 170.8 L431.0 170.9 L430.0 170.4 L429.0 170.4 L428.0 170.7 L427.0 170.7 L426.0 170.7 L425.0 170.6 L424.0 170.5 L423.0 170.9 L422.0 170.7 L421.0 170.5 L420.0 170.6 L419.0 170.7 L418.0 170.7 L417.0 170.8 L416.0 170.7 L415.0 170.5 L414.0 170.9 L413.0 170.6 L412.0 170.7 L411.0 170.7 L410.0 170.8 L409.0 170.4 L408.0 170.8 L407.0 171.0 L406.0 170.9 L405.0 170.7 L404.0 170.5 L403.0 170.6 L402.0 170.7 L401.0 170.5 L400.0 170.9 L399.0 170.7 L398.0 170.7 L397.0 170.8 L396.0 170.7 L395.0 170.9 L394.0 170.4 L393.0 170.5 L392.0 170.4 L391.0 171.0 L390.0 170.5 L389.0 170.4 L388.0 170.6 L387.0 170.7 L386.0 171.0 L385.0 170.8 L384.0 170.8 L383.0 170.4 L382.0 170.9 L381.0 170.7 L380.0 170.6 L379.0 170.5 L378.0 170.8 L377.0 170.9 L376.0 171.0 L375.0 170.8 L374.0 170.6 L373.0 170.9 L372.0 170.5 L371.0 170.6 L370.0 171.0 L369.0 170.8 L368.0 170.4 L367.0 170.5 L366.0 170.7 L365.0 170.7 L364.0 170.8 L363.0 170.9 L362.0 170.4 L361.0 170.5 L360.0 170.7 L359.0 170.5 L358.0 170.8 L357.0 170.6 L356.0 170.5 L355.0 170.6 L354.0 170.9 L353.0 170.7 L352.0 170.8 L351.0 170.9 L350.0 170.9 L349.0 170.7 L348.0 170.9 L347.0 170.6 L346.0 170.7 L345.0 170.5 L344.0 170.8 L343.0 170.5 L342.0 170.5 L341.0 170.6 L340.0 170.5 L339.0 170.8 L338.0 170.7 L337.0 170.9 L336.0 170.4 L335.0 170.5 L334.0 170.7 L333.0 170.8 L332.0 170.7 L331.0 170.9 L330.0 170.8 L329.0 170.7 L328.0 170.5 L327.0 170.9 L326.0 170.6 L325.0 170.5 L324.0 170.9 L323.0 170.9 L322.0 170.5 L321.0 170.8 L320.0 170.4 L319.0 170.9 L318.0 170.4 L317.0 170.8 L316.0 170.6 L315.0 170.7 L314.0 170.5 L313.0 170.6 L312.0 170.6 L311.0 170.5 L310.0 170.4 L309.0 170.8 L308.0 170.9 L307.0 170.5 L306.0 170.6 L305.0 170.5 L304.0 170.8 L303.0 170.6 L302.0 170.8 L301.0 170.6 L300.0 170.9 L299.0 170.9 L298.0 170.6 L297.0 170.8 L296.0 170.5 L295.0 170.4 L294.0 170.7 L293.0 170.7 L292.0 170.8 L291.0 170.9 L290.0 170.5 L289.0 170.6 L288.0 170.8 L287.0 170.9 L286.0 170.7 L285.0 170.5 L284.0 170.5 L283.0 170.5 L282.0 170.8 L281.0 170.6 L280.0 170.5 L279.0 170.5 L278.0 171.0 L277.0 171.0 L276.0 170.8 L275.0 170.5 L274.0 170.9 L273.0 170.5 L272.0 170.6 L271.0 170.8 L270.0 170.6 L269.0 170.4 L268.0 170.6 L267.0 170.5 L266.0 170.9 L265.0 170.4 L264.0 170.6 L263.0 170.5 L262.0 170.6 L261.0 170.5 L260.0 170.5 L259.0 170.9 L258.0 170.9 L257.0 170.5 L256.0 170.6 L255.0 171.0 L254.0 171.0 L253.0 170.6 L252.0 170.9 L251.0 170.9 L250.0 170.4 L249.0 170.8 L248.0 171.0 L247.0 170.9Z" fill="#20985e"/><path d="M247.0 154.0 L248.0 153.6 L249.0 153.7 L250.0 153.9 L251.0 153.9 L252.0 153.5 L253.0 154.0 L254.0 153.5 L255.0 153.9 L256.0 154.0 L257.0 153.9 L258.0 153.5 L259.0 154.0 L260.0 153.8 L261.0 153.7 L262.0 153.9 L263.0 153.6 L264.0 153.8 L265.0 153.6 L266.0 153.9 L267.0 153.8 L268.0 153.7 L269.0 153.6 L270.0 153.6 L271.0 153.9 L272.0 153.9 L273.0 154.1 L274.0 153.6 L275.0 153.9 L276.0 154.0 L277.0 153.7 L278.0 153.7 L279.0 153.6 L280.0 153.5 L281.0 153.9 L282.0 153.6 L283.0 154.0 L284.0 153.8 L285.0 153.7 L286.0 154.0 L287.0 154.1 L288.0 153.8 L289.0 153.7 L290.0 153.9 L291.0 153.9 L292.0 153.6 L293.0 154.0 L294.0 153.6 L295.0 153.6 L296.0 153.7 L297.0 153.7 L298.0 154.0 L299.0 153.7 L300.0 153.9 L301.0 153.7 L302.0 153.9 L303.0 154.0 L304.0 153.7 L305.0 153.6 L306.0 153.7 L307.0 153.6 L308.0 154.1 L309.0 154.0 L310.0 154.1 L311.0 153.8 L312.0 154.1 L313.0 154.0 L314.0 153.7 L315.0 153.9 L316.0 154.0 L317.0 154.0 L318.0 153.6 L319.0 154.1 L320.0 154.1 L321.0 153.8 L322.0 153.7 L323.0 153.7 L324.0 153.8 L325.0 154.0 L326.0 153.5 L327.0 153.5 L328.0 153.5 L329.0 153.8 L330.0 153.8 L331.0 153.7 L332.0 153.9 L333.0 153.9 L334.0 154.0 L335.0 153.8 L336.0 153.8 L337.0 153.6 L338.0 153.2 L339.0 152.8 L340.0 152.7 L341.0 152.6 L342.0 152.8 L343.0 152.7 L344.0 152.4 L345.0 152.9 L346.0 153.1 L347.0 152.7 L348.0 153.5 L349.0 153.4 L350.0 153.3 L351.0 153.9 L352.0 154.0 L353.0 153.8 L354.0 153.6 L355.0 153.8 L356.0 154.0 L357.0 153.8 L358.0 154.0 L359.0 154.1 L360.0 153.7 L361.0 153.5 L362.0 153.7 L363.0 153.6 L364.0 154.0 L365.0 154.0 L366.0 153.9 L367.0 153.6 L368.0 153.8 L369.0 153.6 L370.0 154.1 L371.0 153.7 L372.0 153.8 L373.0 154.0 L374.0 153.6 L375.0 154.0 L376.0 154.0 L377.0 153.8 L378.0 153.7 L379.0 153.8 L380.0 153.7 L381.0 153.8 L382.0 153.7 L383.0 154.0 L384.0 153.7 L385.0 154.0 L386.0 153.7 L387.0 154.0 L388.0 154.0 L389.0 153.6 L390.0 153.7 L391.0 154.1 L392.0 153.5 L393.0 154.1 L394.0 154.0 L395.0 154.0 L396.0 153.5 L397.0 153.5 L398.0 154.0 L399.0 153.6 L400.0 153.5 L401.0 154.0 L402.0 154.0 L403.0 154.0 L404.0 153.6 L405.0 154.1 L406.0 153.8 L407.0 153.8 L408.0 153.7 L409.0 154.1 L410.0 153.8 L411.0 153.9 L412.0 153.7 L413.0 153.6 L414.0 153.8 L415.0 153.7 L416.0 153.8 L417.0 153.5 L418.0 153.9 L419.0 153.7 L420.0 153.6 L421.0 153.9 L422.0 153.6 L423.0 153.7 L424.0 153.6 L425.0 154.1 L426.0 153.7 L427.0 153.8 L428.0 153.9 L429.0 153.7 L430.0 153.7 L431.0 153.6 L432.0 153.7 L433.0 153.7 L434.0 153.8 L435.0 154.0 L436.0 153.8 L437.0 153.9 L438.0 153.9 L439.0 154.0 L440.0 153.5 L441.0 153.5 L442.0 153.6 L443.0 153.6 L444.0 154.0 L445.0 154.1 L446.0 153.6 L447.0 153.9 L448.0 153.6 L449.0 153.6 L450.0 154.0 L451.0 153.9 L452.0 153.9 L453.0 153.5 L454.0 153.8 L455.0 153.8 L456.0 153.9 L457.0 153.7 L458.0 154.0 L459.0 153.9 L460.0 154.1 L461.0 153.7 L462.0 154.0 L463.0 153.7 L464.0 153.7 L465.0 154.0 L466.0 154.1 L467.0 154.0 L468.0 153.5 L469.0 153.7 L470.0 153.7 L471.0 153.9 L472.0 154.1 L473.0 153.9 L474.0 154.0 L475.0 153.5 L476.0 153.9 L477.0 154.0 L478.0 153.9 L479.0 153.7 L480.0 153.7 L481.0 153.5 L482.0 153.6 L483.0 153.6 L484.0 153.6 L485.0 153.7 L486.0 154.1 L487.0 153.6 L488.0 153.7 L489.0 153.7 L490.0 154.0 L491.0 153.5 L492.0 153.8 L493.0 154.1 L494.0 154.2 L495.0 154.2 L496.0 154.1 L497.0 154.2 L498.0 154.1 L499.0 154.0 L500.0 154.2 L501.0 154.1 L502.0 153.8 L503.0 154.2 L504.0 154.1 L505.0 153.9 L506.0 153.8 L507.0 153.9 L508.0 154.2 L509.0 154.0 L510.0 154.0 L511.0 154.1 L512.0 153.9 L513.0 154.0 L514.0 154.0 L515.0 153.9 L516.0 153.5 L517.0 154.1 L518.0 153.7 L519.0 153.6 L520.0 153.6 L521.0 153.5 L522.0 154.0 L523.0 153.6 L524.0 154.1 L525.0 153.5 L526.0 153.7 L527.0 153.8 L528.0 154.0 L529.0 153.9 L530.0 153.5 L531.0 154.0 L532.0 153.7 L533.0 154.1 L534.0 153.7 L535.0 154.0 L536.0 153.7 L537.0 154.0 L538.0 153.5 L539.0 153.6 L540.0 153.6 L541.0 154.0 L542.0 153.6 L543.0 154.0 L544.0 153.8 L545.0 154.0 L546.0 153.8 L547.0 153.9 L548.0 154.1 L549.0 154.0 L550.0 153.8 L551.0 153.8 L552.0 153.7 L553.0 153.6 L554.0 153.5 L555.0 154.0 L556.0 153.9 L557.0 153.9 L558.0 154.1 L559.0 154.0 L560.0 154.1 L561.0 153.9 L562.0 153.8 L563.0 154.0 L564.0 154.0 L565.0 154.0 L566.0 153.8 L567.0 153.6 L568.0 154.0 L569.0 153.7 L570.0 153.9 L571.0 153.7 L572.0 153.5 L573.0 153.5 L574.0 154.0 L575.0 153.9 L576.0 153.8 L577.0 153.4 L578.0 153.7 L579.0 153.4 L580.0 153.5 L581.0 153.8 L582.0 153.4 L583.0 153.3 L584.0 153.2 L585.0 153.7 L586.0 153.4 L587.0 153.3 L588.0 153.6 L589.0 153.3 L590.0 153.4 L591.0 153.0 L592.0 152.8 L593.0 153.1 L594.0 152.6 L595.0 152.5 L596.0 152.2 L597.0 152.5 L598.0 151.9 L599.0 152.2 L600.0 151.7 L601.0 151.7 L602.0 151.7 L603.0 151.9 L604.0 151.7 L605.0 151.7 L606.0 151.4 L607.0 151.6 L608.0 151.1 L609.0 151.4 L610.0 151.3 L611.0 151.3 L612.0 151.1 L613.0 151.3 L614.0 151.0 L615.0 151.1 L616.0 151.0 L617.0 151.3 L618.0 151.2 L619.0 150.8 L620.0 150.8 L621.0 150.9 L622.0 151.2 L623.0 150.8 L624.0 151.2 L625.0 151.1 L626.0 151.1 L627.0 151.0 L628.0 150.5 L629.0 151.2 L630.0 150.9 L631.0 151.5 L632.0 151.6 L633.0 151.5 L634.0 151.9 L635.0 151.9 L636.0 151.7 L637.0 151.9 L638.0 151.7 L639.0 151.9 L640.0 151.7 L641.0 152.3 L642.0 152.0 L643.0 152.1 L644.0 152.1 L645.0 152.6 L646.0 152.6 L647.0 152.2 L648.0 152.6 L649.0 152.4 L650.0 152.7 L651.0 152.5 L652.0 152.5 L653.0 152.8 L654.0 152.6 L655.0 153.0 L656.0 152.9 L657.0 152.7 L658.0 152.7 L659.0 153.0 L660.0 152.8 L661.0 153.1 L662.0 152.8 L663.0 152.8 L664.0 152.8 L665.0 153.2 L666.0 153.4 L667.0 153.4 L668.0 153.2 L669.0 152.9 L670.0 153.3 L671.0 153.5 L672.0 153.3 L673.0 153.2 L674.0 153.2 L675.0 153.7 L676.0 153.5 L677.0 153.4 L678.0 153.6 L679.0 153.4 L680.0 153.7 L681.0 153.3 L682.0 153.5 L683.0 153.6 L684.0 153.7 L685.0 153.3 L686.0 153.8 L687.0 153.5 L688.0 153.9 L689.0 153.4 L690.0 153.9 L691.0 153.9 L692.0 153.9 L693.0 153.5 L694.0 153.8 L695.0 153.8 L696.0 153.4 L697.0 153.8 L698.0 153.7 L699.0 153.8 L700.0 153.3 L701.0 153.8 L702.0 153.4 L703.0 153.6 L704.0 153.6 L705.0 153.6 L706.0 153.5 L707.0 153.8 L708.0 153.9 L709.0 153.7 L710.0 153.8 L711.0 153.3 L712.0 153.4 L713.0 153.8 L714.0 153.7 L715.0 153.7 L716.0 153.4 L717.0 153.9 L718.0 153.6 L719.0 153.4 L720.0 153.4 L721.0 153.8 L722.0 153.7 L723.0 153.7 L724.0 153.8 L725.0 153.7 L726.0 153.4 L727.0 153.8 L728.0 153.5 L729.0 153.5 L730.0 153.5 L731.0 153.6 L732.0 153.4 L733.0 153.6 L734.0 153.5 L735.0 153.4 L736.0 153.4 L737.0 153.4 L738.0 153.5 L739.0 153.9 L740.0 153.6 L741.0 153.8 L742.0 153.5 L743.0 153.8 L744.0 153.8 L745.0 153.8 L746.0 153.5 L747.0 153.9 L748.0 153.5 L749.0 153.7 L750.0 153.5 L751.0 153.8 L752.0 153.4 L753.0 153.4 L754.0 153.8 L755.0 153.6 L756.0 153.6 L757.0 153.7 L758.0 153.7 L759.0 153.6 L760.0 153.8 L761.0 153.4 L762.0 153.9 L763.0 154.0 L764.0 153.7 L765.0 153.7 L766.0 153.7 L767.0 153.5 L768.0 153.8 L769.0 153.5 L770.0 153.5 L771.0 153.7 L772.0 153.6 L773.0 153.9 L774.0 153.8 L775.0 153.9 L776.0 153.7 L777.0 153.9 L778.0 153.4 L779.0 153.5 L780.0 153.4 L781.0 153.5 L782.0 153.8 L783.0 153.9 L784.0 153.7 L785.0 153.5 L786.0 153.7 L787.0 153.7 L788.0 153.6 L789.0 153.7 L790.0 153.8 L791.0 153.7 L792.0 153.7 L793.0 154.0 L794.0 153.6 L795.0 153.9 L796.0 153.7 L797.0 153.6 L798.0 153.9 L799.0 153.6 L800.0 153.6 L801.0 153.8 L802.0 153.5 L803.0 153.4 L804.0 154.0 L805.0 153.5 L806.0 153.9 L807.0 153.6 L808.0 153.8 L809.0 153.9 L810.0 153.9 L811.0 153.6 L812.0 153.9 L813.0 154.0 L814.0 153.8 L815.0 153.9 L816.0 153.8 L817.0 153.7 L818.0 153.7 L819.0 153.7 L820.0 153.9 L821.0 153.6 L822.0 153.8 L823.0 153.8 L824.0 153.6 L825.0 153.9 L826.0 153.7 L827.0 153.5 L828.0 153.8 L829.0 153.5 L830.0 153.8 L831.0 153.7 L832.0 153.6 L833.0 154.0 L834.0 153.5 L835.0 153.7 L836.0 153.8 L837.0 153.7 L838.0 153.9 L839.0 153.5 L840.0 154.0 L841.0 153.8 L842.0 153.8 L843.0 153.8 L844.0 153.5 L845.0 153.8 L846.0 153.8 L847.0 153.6 L848.0 153.8 L849.0 153.8 L850.0 153.7 L851.0 153.9 L852.0 154.0 L853.0 154.0 L854.0 154.0 L855.0 154.0 L856.0 154.0 L857.0 153.6 L858.0 153.5 L859.0 153.7 L860.0 154.0 L861.0 153.8 L862.0 153.6 L863.0 153.8 L864.0 153.5 L865.0 153.7 L866.0 154.0 L867.0 154.0 L868.0 153.6 L869.0 154.0 L870.0 154.0 L871.0 153.7 L872.0 153.9 L873.0 153.8 L874.0 153.9 L875.0 153.5 L876.0 153.7 L877.0 154.0 L878.0 153.9 L879.0 154.0 L880.0 153.7 L881.0 153.8 L882.0 153.7 L883.0 153.6 L884.0 153.9 L885.0 153.5 L886.0 153.5 L887.0 154.0 L888.0 153.9 L889.0 154.1 L890.0 153.6 L891.0 154.1 L892.0 153.8 L893.0 153.8 L894.0 153.9 L895.0 153.5 L896.0 153.7 L897.0 153.9 L898.0 153.6 L899.0 153.6 L900.0 153.6 L901.0 154.0 L902.0 154.1 L903.0 154.3 L904.0 154.1 L905.0 153.9 L906.0 154.0 L907.0 154.6 L908.0 154.4 L909.0 154.5 L910.0 154.4 L911.0 154.5 L912.0 154.9 L913.0 154.7 L914.0 154.9 L915.0 155.0 L916.0 155.5 L917.0 155.2 L918.0 155.4 L919.0 155.7 L920.0 155.3 L921.0 155.6 L921.0 156.4 L920.0 156.7 L919.0 156.7 L918.0 156.4 L917.0 156.5 L916.0 156.7 L915.0 156.9 L914.0 156.8 L913.0 157.1 L912.0 157.0 L911.0 157.0 L910.0 157.1 L909.0 157.4 L908.0 157.8 L907.0 157.8 L906.0 157.9 L905.0 157.5 L904.0 157.7 L903.0 158.1 L902.0 158.1 L901.0 158.2 L900.0 158.2 L899.0 158.4 L898.0 158.4 L897.0 158.1 L896.0 158.1 L895.0 158.5 L894.0 158.5 L893.0 158.3 L892.0 158.3 L891.0 158.4 L890.0 158.2 L889.0 158.4 L888.0 158.3 L887.0 158.0 L886.0 158.2 L885.0 158.4 L884.0 158.2 L883.0 158.3 L882.0 158.2 L881.0 158.4 L880.0 157.9 L879.0 158.2 L878.0 158.4 L877.0 158.0 L876.0 158.0 L875.0 158.5 L874.0 158.1 L873.0 158.2 L872.0 158.5 L871.0 158.5 L870.0 158.3 L869.0 158.0 L868.0 158.3 L867.0 157.9 L866.0 158.0 L865.0 158.5 L864.0 158.4 L863.0 158.0 L862.0 158.4 L861.0 158.1 L860.0 158.5 L859.0 158.5 L858.0 158.5 L857.0 158.4 L856.0 158.1 L855.0 158.1 L854.0 158.4 L853.0 158.1 L852.0 158.4 L851.0 158.4 L850.0 158.1 L849.0 158.5 L848.0 158.2 L847.0 158.1 L846.0 158.3 L845.0 158.1 L844.0 158.3 L843.0 158.3 L842.0 158.5 L841.0 158.3 L840.0 158.1 L839.0 158.4 L838.0 158.0 L837.0 158.2 L836.0 158.5 L835.0 158.4 L834.0 158.4 L833.0 158.2 L832.0 158.5 L831.0 158.4 L830.0 158.1 L829.0 158.2 L828.0 158.3 L827.0 158.4 L826.0 158.0 L825.0 158.5 L824.0 158.2 L823.0 158.2 L822.0 158.2 L821.0 158.6 L820.0 158.0 L819.0 158.1 L818.0 158.1 L817.0 158.5 L816.0 158.6 L815.0 158.3 L814.0 158.3 L813.0 158.1 L812.0 158.1 L811.0 158.2 L810.0 158.2 L809.0 158.1 L808.0 158.4 L807.0 158.6 L806.0 158.3 L805.0 158.4 L804.0 158.0 L803.0 158.3 L802.0 158.0 L801.0 158.5 L800.0 158.4 L799.0 158.4 L798.0 158.3 L797.0 158.5 L796.0 158.1 L795.0 158.1 L794.0 158.4 L793.0 158.2 L792.0 158.1 L791.0 158.3 L790.0 158.2 L789.0 158.4 L788.0 158.5 L787.0 158.1 L786.0 158.6 L785.0 158.6 L784.0 158.5 L783.0 158.0 L782.0 158.6 L781.0 158.5 L780.0 158.3 L779.0 158.1 L778.0 158.3 L777.0 158.6 L776.0 158.4 L775.0 158.3 L774.0 158.5 L773.0 158.2 L772.0 158.6 L771.0 158.2 L770.0 158.6 L769.0 158.2 L768.0 158.5 L767.0 158.2 L766.0 158.5 L765.0 158.1 L764.0 158.5 L763.0 158.4 L762.0 158.6 L761.0 158.4 L760.0 158.2 L759.0 158.2 L758.0 158.6 L757.0 158.3 L756.0 158.5 L755.0 158.1 L754.0 158.6 L753.0 158.5 L752.0 158.3 L751.0 158.4 L750.0 158.6 L749.0 158.3 L748.0 158.2 L747.0 158.1 L746.0 158.2 L745.0 158.1 L744.0 158.1 L743.0 158.2 L742.0 158.6 L741.0 158.5 L740.0 158.3 L739.0 158.6 L738.0 158.4 L737.0 158.5 L736.0 158.1 L735.0 158.6 L734.0 158.3 L733.0 158.3 L732.0 158.1 L731.0 158.3 L730.0 158.2 L729.0 158.5 L728.0 158.7 L727.0 158.6 L726.0 158.5 L725.0 158.4 L724.0 158.6 L723.0 158.1 L722.0 158.3 L721.0 158.3 L720.0 158.6 L719.0 158.3 L718.0 158.6 L717.0 158.5 L716.0 158.4 L715.0 158.6 L714.0 158.2 L713.0 158.5 L712.0 158.3 L711.0 158.2 L710.0 158.4 L709.0 158.2 L708.0 158.6 L707.0 158.7 L706.0 158.2 L705.0 158.5 L704.0 158.3 L703.0 158.7 L702.0 158.6 L701.0 158.5 L700.0 158.2 L699.0 158.2 L698.0 158.3 L697.0 158.5 L696.0 158.2 L695.0 158.4 L694.0 158.1 L693.0 158.2 L692.0 158.3 L691.0 158.7 L690.0 158.3 L689.0 158.4 L688.0 158.5 L687.0 158.3 L686.0 158.4 L685.0 158.6 L684.0 158.1 L683.0 158.5 L682.0 158.2 L681.0 158.7 L680.0 158.4 L679.0 158.6 L678.0 158.5 L677.0 158.3 L676.0 158.4 L675.0 158.5 L674.0 158.4 L673.0 158.7 L672.0 158.6 L671.0 158.7 L670.0 158.6 L669.0 159.0 L668.0 158.6 L667.0 158.6 L666.0 159.0 L665.0 159.1 L664.0 158.9 L663.0 159.3 L662.0 159.3 L661.0 158.9 L660.0 159.0 L659.0 159.1 L658.0 159.4 L657.0 159.4 L656.0 159.2 L655.0 159.5 L654.0 159.5 L653.0 159.3 L652.0 159.3 L651.0 159.2 L650.0 159.3 L649.0 159.6 L648.0 159.3 L647.0 159.7 L646.0 159.7 L645.0 159.7 L644.0 159.9 L643.0 159.6 L642.0 159.8 L641.0 159.7 L640.0 160.0 L639.0 159.9 L638.0 160.0 L637.0 160.4 L636.0 160.4 L635.0 160.1 L634.0 160.2 L633.0 160.3 L632.0 160.5 L631.0 160.6 L630.0 160.6 L629.0 161.3 L628.0 160.9 L627.0 161.3 L626.0 161.0 L625.0 161.2 L624.0 160.8 L623.0 160.9 L622.0 161.1 L621.0 160.8 L620.0 161.2 L619.0 161.0 L618.0 160.8 L617.0 161.1 L616.0 161.2 L615.0 160.9 L614.0 161.0 L613.0 161.1 L612.0 160.6 L611.0 160.5 L610.0 160.5 L609.0 160.8 L608.0 160.7 L607.0 160.7 L606.0 160.6 L605.0 160.4 L604.0 160.3 L603.0 160.2 L602.0 160.4 L601.0 160.0 L600.0 159.9 L599.0 160.2 L598.0 159.6 L597.0 159.6 L596.0 159.7 L595.0 159.2 L594.0 159.4 L593.0 159.2 L592.0 159.3 L591.0 158.9 L590.0 159.0 L589.0 158.8 L588.0 158.5 L587.0 158.4 L586.0 158.4 L585.0 158.8 L584.0 158.3 L583.0 158.7 L582.0 158.5 L581.0 158.3 L580.0 158.4 L579.0 158.6 L578.0 158.4 L577.0 158.6 L576.0 158.2 L575.0 158.0 L574.0 158.5 L573.0 158.2 L572.0 158.1 L571.0 158.4 L570.0 158.4 L569.0 158.2 L568.0 158.0 L567.0 157.9 L566.0 158.2 L565.0 158.0 L564.0 158.5 L563.0 158.0 L562.0 158.3 L561.0 158.2 L560.0 158.3 L559.0 158.4 L558.0 158.1 L557.0 158.3 L556.0 158.1 L555.0 158.5 L554.0 158.2 L553.0 158.0 L552.0 158.0 L551.0 158.5 L550.0 158.5 L549.0 158.2 L548.0 158.5 L547.0 158.3 L546.0 158.5 L545.0 158.3 L544.0 158.0 L543.0 157.9 L542.0 157.9 L541.0 158.3 L540.0 158.0 L539.0 158.1 L538.0 158.3 L537.0 158.4 L536.0 158.3 L535.0 158.2 L534.0 158.2 L533.0 158.2 L532.0 158.2 L531.0 157.9 L530.0 158.2 L529.0 158.0 L528.0 158.3 L527.0 158.1 L526.0 157.9 L525.0 158.2 L524.0 158.1 L523.0 158.0 L522.0 158.0 L521.0 158.2 L520.0 158.0 L519.0 158.5 L518.0 158.2 L517.0 158.0 L516.0 158.2 L515.0 158.2 L514.0 157.9 L513.0 158.2 L512.0 158.0 L511.0 157.9 L510.0 158.2 L509.0 157.8 L508.0 157.7 L507.0 158.2 L506.0 157.7 L505.0 158.0 L504.0 157.9 L503.0 157.8 L502.0 157.8 L501.0 157.9 L500.0 158.2 L499.0 157.8 L498.0 157.9 L497.0 158.2 L496.0 158.1 L495.0 158.3 L494.0 158.3 L493.0 157.8 L492.0 158.2 L491.0 158.1 L490.0 158.0 L489.0 158.0 L488.0 158.3 L487.0 158.0 L486.0 158.0 L485.0 158.1 L484.0 158.4 L483.0 158.0 L482.0 157.9 L481.0 158.1 L480.0 158.0 L479.0 158.2 L478.0 158.1 L477.0 158.0 L476.0 158.4 L475.0 158.3 L474.0 158.2 L473.0 158.0 L472.0 157.9 L471.0 157.9 L470.0 158.3 L469.0 158.3 L468.0 158.3 L467.0 158.1 L466.0 158.3 L465.0 158.1 L464.0 158.4 L463.0 158.3 L462.0 158.2 L461.0 158.5 L460.0 158.1 L459.0 158.4 L458.0 158.0 L457.0 158.5 L456.0 158.4 L455.0 158.5 L454.0 158.3 L453.0 158.0 L452.0 158.2 L451.0 158.3 L450.0 158.4 L449.0 158.2 L448.0 158.4 L447.0 158.4 L446.0 158.5 L445.0 158.0 L444.0 158.1 L443.0 158.1 L442.0 158.5 L441.0 158.4 L440.0 158.3 L439.0 158.2 L438.0 158.1 L437.0 158.1 L436.0 158.3 L435.0 158.5 L434.0 158.4 L433.0 158.4 L432.0 157.9 L431.0 158.4 L430.0 158.4 L429.0 158.4 L428.0 158.3 L427.0 158.2 L426.0 158.3 L425.0 158.0 L424.0 157.9 L423.0 158.5 L422.0 158.0 L421.0 158.1 L420.0 158.0 L419.0 158.4 L418.0 158.0 L417.0 158.2 L416.0 158.0 L415.0 158.0 L414.0 158.0 L413.0 158.4 L412.0 157.9 L411.0 157.9 L410.0 158.1 L409.0 157.9 L408.0 158.4 L407.0 158.3 L406.0 158.4 L405.0 158.4 L404.0 158.4 L403.0 158.4 L402.0 158.2 L401.0 158.4 L400.0 158.3 L399.0 158.0 L398.0 157.9 L397.0 158.1 L396.0 158.3 L395.0 158.3 L394.0 158.5 L393.0 157.9 L392.0 158.4 L391.0 158.0 L390.0 158.3 L389.0 158.4 L388.0 158.1 L387.0 158.5 L386.0 157.9 L385.0 158.4 L384.0 158.2 L383.0 158.3 L382.0 158.3 L381.0 158.1 L380.0 157.9 L379.0 157.9 L378.0 158.3 L377.0 158.3 L376.0 158.0 L375.0 158.3 L374.0 158.1 L373.0 158.0 L372.0 158.3 L371.0 158.4 L370.0 158.1 L369.0 158.2 L368.0 157.9 L367.0 158.4 L366.0 157.9 L365.0 158.3 L364.0 157.9 L363.0 158.4 L362.0 158.1 L361.0 158.2 L360.0 158.5 L359.0 158.4 L358.0 158.1 L357.0 158.2 L356.0 158.0 L355.0 158.4 L354.0 158.4 L353.0 158.5 L352.0 158.4 L351.0 158.1 L350.0 158.5 L349.0 158.9 L348.0 158.6 L347.0 158.9 L346.0 159.2 L345.0 159.2 L344.0 159.5 L343.0 159.8 L342.0 159.2 L341.0 159.4 L340.0 159.3 L339.0 159.0 L338.0 158.8 L337.0 158.4 L336.0 158.5 L335.0 158.2 L334.0 158.3 L333.0 158.1 L332.0 158.0 L331.0 158.2 L330.0 158.3 L329.0 158.0 L328.0 157.9 L327.0 158.1 L326.0 158.4 L325.0 158.4 L324.0 158.3 L323.0 158.1 L322.0 158.3 L321.0 157.9 L320.0 158.2 L319.0 158.4 L318.0 158.2 L317.0 158.4 L316.0 158.4 L315.0 158.2 L314.0 158.1 L313.0 158.0 L312.0 158.4 L311.0 158.4 L310.0 158.2 L309.0 158.1 L308.0 158.3 L307.0 158.1 L306.0 157.9 L305.0 158.1 L304.0 158.5 L303.0 158.0 L302.0 158.0 L301.0 158.4 L300.0 157.9 L299.0 158.3 L298.0 158.3 L297.0 158.4 L296.0 158.4 L295.0 158.4 L294.0 158.2 L293.0 158.3 L292.0 158.4 L291.0 158.4 L290.0 158.2 L289.0 158.2 L288.0 158.4 L287.0 158.1 L286.0 158.1 L285.0 158.4 L284.0 158.2 L283.0 158.4 L282.0 158.1 L281.0 158.1 L280.0 158.3 L279.0 158.1 L278.0 158.3 L277.0 158.5 L276.0 158.1 L275.0 158.4 L274.0 158.3 L273.0 158.2 L272.0 158.0 L271.0 158.5 L270.0 158.2 L269.0 157.9 L268.0 158.1 L267.0 158.1 L266.0 158.5 L265.0 158.1 L264.0 158.3 L263.0 158.2 L262.0 158.0 L261.0 158.4 L260.0 158.4 L259.0 158.4 L258.0 158.1 L257.0 158.1 L256.0 158.1 L255.0 158.2 L254.0 158.0 L253.0 158.1 L252.0 158.5 L251.0 158.1 L250.0 157.9 L249.0 158.0 L248.0 158.0 L247.0 158.2Z" fill="#b3b3a3"/></g>
<rect x="233" y="90.8" width="15" height="20.2" fill="#48431c"/>
<rect x="248" y="90.8" width="28" height="20.2" fill="#5a5118"/>
<rect x="276.00" y="90.8" width="0.58" height="20.200000000000003" fill="#6b5600"/><rect x="276.58" y="90.8" width="14.69" height="20.200000000000003" fill="#6a6500"/><rect x="291.27" y="90.8" width="14.69" height="20.200000000000003" fill="#6b5600"/><rect x="305.97" y="90.8" width="14.69" height="20.200000000000003" fill="#6a6500"/><rect x="320.66" y="90.8" width="14.69" height="20.200000000000003" fill="#6b5600"/><rect x="335.36" y="90.8" width="14.69" height="20.200000000000003" fill="#6a6500"/><rect x="350.05" y="90.8" width="14.69" height="20.200000000000003" fill="#6b5600"/><rect x="364.74" y="90.8" width="14.69" height="20.200000000000003" fill="#6a6500"/><rect x="379.44" y="90.8" width="14.69" height="20.200000000000003" fill="#6b5600"/><rect x="394.13" y="90.8" width="14.69" height="20.200000000000003" fill="#6a6500"/><rect x="408.82" y="90.8" width="14.69" height="20.200000000000003" fill="#6b5600"/><rect x="423.52" y="90.8" width="14.69" height="20.200000000000003" fill="#6a6500"/><rect x="438.21" y="90.8" width="14.69" height="20.200000000000003" fill="#6b5600"/><rect x="452.90" y="90.8" width="14.69" height="20.200000000000003" fill="#6a6500"/><rect x="467.60" y="90.8" width="14.69" height="20.200000000000003" fill="#6b5600"/><rect x="482.29" y="90.8" width="14.69" height="20.200000000000003" fill="#6a6500"/><rect x="496.98" y="90.8" width="14.69" height="20.200000000000003" fill="#6b5600"/><rect x="511.68" y="90.8" width="14.69" height="20.200000000000003" fill="#6a6500"/><rect x="526.37" y="90.8" width="14.69" height="20.200000000000003" fill="#6b5600"/><rect x="541.07" y="90.8" width="14.69" height="20.200000000000003" fill="#6a6500"/><rect x="555.76" y="90.8" width="14.69" height="20.200000000000003" fill="#6b5600"/><rect x="570.45" y="90.8" width="14.69" height="20.200000000000003" fill="#6a6500"/><rect x="585.15" y="90.8" width="14.69" height="20.200000000000003" fill="#6b5600"/><rect x="599.84" y="90.8" width="14.69" height="20.200000000000003" fill="#6a6500"/><rect x="614.53" y="90.8" width="14.69" height="20.200000000000003" fill="#6b5600"/><rect x="629.23" y="90.8" width="14.69" height="20.200000000000003" fill="#6a6500"/><rect x="643.92" y="90.8" width="14.69" height="20.200000000000003" fill="#6b5600"/><rect x="658.61" y="90.8" width="14.69" height="20.200000000000003" fill="#6a6500"/><rect x="673.31" y="90.8" width="14.69" height="20.200000000000003" fill="#6b5600"/><rect x="688.00" y="90.8" width="14.69" height="20.200000000000003" fill="#6a6500"/><rect x="702.70" y="90.8" width="14.69" height="20.200000000000003" fill="#6b5600"/><rect x="717.39" y="90.8" width="14.69" height="20.200000000000003" fill="#6a6500"/><rect x="732.08" y="90.8" width="14.69" height="20.200000000000003" fill="#6b5600"/><rect x="746.78" y="90.8" width="14.69" height="20.200000000000003" fill="#6a6500"/><rect x="761.47" y="90.8" width="14.69" height="20.200000000000003" fill="#6b5600"/><rect x="776.16" y="90.8" width="14.69" height="20.200000000000003" fill="#6a6500"/><rect x="790.86" y="90.8" width="14.69" height="20.200000000000003" fill="#6b5600"/><rect x="805.55" y="90.8" width="14.69" height="20.200000000000003" fill="#6a6500"/><rect x="820.24" y="90.8" width="14.69" height="20.200000000000003" fill="#6b5600"/><rect x="834.94" y="90.8" width="14.69" height="20.200000000000003" fill="#6a6500"/><rect x="849.63" y="90.8" width="14.69" height="20.200000000000003" fill="#6b5600"/><rect x="864.32" y="90.8" width="14.69" height="20.200000000000003" fill="#6a6500"/><rect x="879.02" y="90.8" width="14.69" height="20.200000000000003" fill="#6b5600"/><rect x="893.71" y="90.8" width="0.29" height="20.200000000000003" fill="#6a6500"/>
<rect x="894" y="90.8" width="27" height="20.2" fill="#5a5118"/>
<rect x="233" y="199.5" width="688" height="1.6" fill="#4a4512"/>
<rect x="880" y="226" width="15" height="85.5" fill="#222222"/>
<clipPath id="nt3"><rect x="895" y="226" width="219" height="85.5"/></clipPath><g clip-path="url(#nt3)"><rect x="895" y="226" width="219" height="85.5" fill="#1b1b29"/><path d="M886.7 226 L926.0 268.8 L886.7 311.5 Z" fill="#38384f"/><path d="M926.0 226 L965.3 268.8 L926.0 311.5 Z" fill="#38384f"/><path d="M965.3 226 L1004.6 268.8 L965.3 311.5 Z" fill="#38384f"/><path d="M1004.6 226 L1043.9 268.8 L1004.6 311.5 Z" fill="#38384f"/><path d="M1043.9 226 L1083.2 268.8 L1043.9 311.5 Z" fill="#38384f"/><path d="M1083.2 226 L1122.5 268.8 L1083.2 311.5 Z" fill="#38384f"/><rect x="936.8" y="226" width="2" height="85.5" fill="#111118" opacity="0.4"/><rect x="995.6" y="226" width="2" height="85.5" fill="#111118" opacity="0.4"/><rect x="1039.6" y="226" width="2" height="85.5" fill="#111118" opacity="0.4"/><rect x="1098.4" y="226" width="2" height="85.5" fill="#111118" opacity="0.4"/></g>
<clipPath id="preO"><rect x="880" y="220" width="15" height="95"/></clipPath>
<g clip-path="url(#preO)"><path d="M880.0 256.1 L881.0 256.5 L882.0 256.5 L883.0 256.4 L884.0 256.1 L885.0 256.1 L886.0 255.7 L887.0 256.0 L888.0 256.1 L889.0 256.5 L890.0 256.7 L891.0 256.6 L892.0 255.6 L893.0 256.1 L894.0 255.7 L895.0 255.4 L896.0 254.9 L897.0 254.1 L897.0 282.0 L896.0 282.1 L895.0 282.3 L894.0 281.3 L893.0 280.9 L892.0 280.4 L891.0 281.3 L890.0 280.8 L889.0 281.2 L888.0 280.6 L887.0 280.3 L886.0 280.8 L885.0 280.1 L884.0 280.2 L883.0 280.1 L882.0 281.1 L881.0 281.0 L880.0 280.8Z" fill="#1d3a7c"/><path d="M880.0 260.7 L881.0 260.6 L882.0 260.2 L883.0 260.2 L884.0 260.1 L885.0 260.1 L886.0 260.0 L887.0 260.2 L888.0 260.0 L889.0 260.4 L890.0 260.0 L891.0 260.0 L892.0 260.1 L893.0 259.8 L894.0 260.2 L895.0 259.2 L896.0 258.7 L897.0 258.5 L897.0 278.5 L896.0 278.3 L895.0 277.7 L894.0 277.1 L893.0 277.2 L892.0 277.1 L891.0 276.7 L890.0 277.0 L889.0 277.1 L888.0 276.8 L887.0 276.8 L886.0 276.9 L885.0 276.7 L884.0 276.5 L883.0 276.5 L882.0 276.6 L881.0 276.3 L880.0 276.5Z" fill="#1c5e44"/><path d="M880.0 266.6 L881.0 266.5 L882.0 266.4 L883.0 266.3 L884.0 266.2 L885.0 266.7 L886.0 266.2 L887.0 266.5 L888.0 266.8 L889.0 266.7 L890.0 266.4 L891.0 266.2 L892.0 266.6 L893.0 266.4 L894.0 266.3 L895.0 266.6 L896.0 266.6 L897.0 266.6 L897.0 270.8 L896.0 270.8 L895.0 270.6 L894.0 270.6 L893.0 270.5 L892.0 270.8 L891.0 270.6 L890.0 270.5 L889.0 270.4 L888.0 270.3 L887.0 270.4 L886.0 270.4 L885.0 270.5 L884.0 270.8 L883.0 270.4 L882.0 270.3 L881.0 270.7 L880.0 270.4Z" fill="#8a8a82"/></g>
<clipPath id="postO"><rect x="895" y="220" width="220" height="95"/></clipPath>
<g clip-path="url(#postO)"><path d="M893.0 256.6 L894.0 255.9 L895.0 255.2 L896.0 254.1 L897.0 254.3 L898.0 253.9 L899.0 254.2 L900.0 255.0 L901.0 253.9 L902.0 254.4 L903.0 254.6 L904.0 254.4 L905.0 255.1 L906.0 254.9 L907.0 255.0 L908.0 254.8 L909.0 254.5 L910.0 253.9 L911.0 254.3 L912.0 254.1 L913.0 255.0 L914.0 254.8 L915.0 254.7 L916.0 254.0 L917.0 253.9 L918.0 254.3 L919.0 254.2 L920.0 254.7 L921.0 254.8 L922.0 254.1 L923.0 252.7 L924.0 252.4 L925.0 251.9 L926.0 252.1 L927.0 252.6 L928.0 252.1 L929.0 251.7 L930.0 251.6 L931.0 252.5 L932.0 252.1 L933.0 251.7 L934.0 251.8 L935.0 252.1 L936.0 251.5 L937.0 252.4 L938.0 252.5 L939.0 252.5 L940.0 252.1 L941.0 252.0 L942.0 252.3 L943.0 252.2 L944.0 251.5 L945.0 252.1 L946.0 252.5 L947.0 251.6 L948.0 252.4 L949.0 252.5 L950.0 252.2 L951.0 251.7 L952.0 252.0 L953.0 251.8 L954.0 251.8 L955.0 251.5 L956.0 252.3 L957.0 252.4 L958.0 251.8 L959.0 252.2 L960.0 251.8 L961.0 252.1 L962.0 252.1 L963.0 253.8 L964.0 254.1 L965.0 256.5 L966.0 257.3 L967.0 258.5 L968.0 259.6 L969.0 259.5 L970.0 260.0 L971.0 260.0 L972.0 259.8 L973.0 259.9 L974.0 260.5 L975.0 259.6 L976.0 260.2 L977.0 259.9 L978.0 260.2 L979.0 260.2 L980.0 260.3 L981.0 260.1 L982.0 260.5 L983.0 259.6 L984.0 260.4 L985.0 259.7 L986.0 260.1 L987.0 260.6 L988.0 260.2 L989.0 259.4 L990.0 259.5 L991.0 259.6 L992.0 259.4 L993.0 259.5 L994.0 260.4 L995.0 260.0 L996.0 260.2 L997.0 259.9 L998.0 260.3 L999.0 260.0 L1000.0 259.8 L1001.0 260.0 L1002.0 259.7 L1003.0 259.7 L1004.0 260.3 L1005.0 260.0 L1006.0 260.3 L1007.0 258.3 L1008.0 257.2 L1009.0 256.1 L1010.0 254.5 L1011.0 253.1 L1012.0 251.2 L1013.0 251.8 L1014.0 251.3 L1015.0 251.3 L1016.0 251.8 L1017.0 251.7 L1018.0 250.9 L1019.0 251.3 L1020.0 251.1 L1021.0 251.7 L1022.0 251.1 L1023.0 251.5 L1024.0 251.8 L1025.0 251.2 L1026.0 251.1 L1027.0 251.6 L1028.0 251.7 L1029.0 251.9 L1030.0 251.8 L1031.0 251.1 L1032.0 251.1 L1033.0 251.6 L1034.0 251.2 L1035.0 252.0 L1036.0 251.6 L1037.0 251.4 L1038.0 252.1 L1039.0 251.6 L1040.0 251.7 L1041.0 251.7 L1042.0 251.4 L1043.0 252.1 L1044.0 251.4 L1045.0 251.9 L1046.0 251.0 L1047.0 251.4 L1048.0 251.7 L1049.0 251.7 L1050.0 251.4 L1051.0 252.0 L1052.0 251.7 L1053.0 251.7 L1054.0 252.0 L1055.0 251.9 L1056.0 252.1 L1057.0 252.0 L1058.0 251.6 L1059.0 252.3 L1060.0 252.0 L1061.0 252.5 L1062.0 252.3 L1063.0 251.7 L1064.0 251.9 L1065.0 251.6 L1066.0 252.3 L1067.0 252.1 L1068.0 252.5 L1069.0 252.3 L1070.0 252.5 L1071.0 252.2 L1072.0 253.5 L1073.0 254.8 L1074.0 255.9 L1075.0 256.5 L1076.0 256.7 L1077.0 256.8 L1078.0 256.7 L1079.0 256.4 L1080.0 256.8 L1081.0 256.0 L1082.0 257.0 L1083.0 256.5 L1084.0 256.7 L1085.0 256.7 L1086.0 256.0 L1087.0 256.6 L1088.0 256.3 L1089.0 256.6 L1090.0 256.8 L1091.0 256.6 L1092.0 256.7 L1093.0 257.1 L1094.0 255.9 L1095.0 256.3 L1096.0 256.5 L1097.0 256.9 L1098.0 256.3 L1099.0 256.3 L1100.0 256.4 L1101.0 256.5 L1102.0 256.4 L1103.0 256.5 L1104.0 256.9 L1105.0 256.3 L1106.0 256.4 L1107.0 256.4 L1108.0 256.6 L1109.0 258.7 L1110.0 261.2 L1111.0 262.7 L1112.0 265.3 L1112.0 271.0 L1111.0 274.1 L1110.0 275.9 L1109.0 278.6 L1108.0 280.9 L1107.0 280.2 L1106.0 280.8 L1105.0 280.6 L1104.0 280.3 L1103.0 280.6 L1102.0 280.1 L1101.0 280.3 L1100.0 280.1 L1099.0 280.1 L1098.0 280.2 L1097.0 280.7 L1096.0 280.1 L1095.0 280.5 L1094.0 280.7 L1093.0 280.2 L1092.0 280.8 L1091.0 280.9 L1090.0 280.8 L1089.0 280.4 L1088.0 280.7 L1087.0 280.1 L1086.0 280.3 L1085.0 280.4 L1084.0 280.9 L1083.0 280.3 L1082.0 280.7 L1081.0 280.3 L1080.0 280.0 L1079.0 280.6 L1078.0 280.3 L1077.0 281.0 L1076.0 280.9 L1075.0 280.5 L1074.0 280.1 L1073.0 282.0 L1072.0 283.2 L1071.0 284.9 L1070.0 284.5 L1069.0 284.4 L1068.0 285.0 L1067.0 285.6 L1066.0 285.3 L1065.0 284.5 L1064.0 284.9 L1063.0 285.4 L1062.0 285.1 L1061.0 284.9 L1060.0 285.6 L1059.0 285.3 L1058.0 285.4 L1057.0 284.6 L1056.0 285.4 L1055.0 285.8 L1054.0 286.1 L1053.0 286.0 L1052.0 285.4 L1051.0 285.2 L1050.0 285.5 L1049.0 285.7 L1048.0 284.9 L1047.0 285.6 L1046.0 285.2 L1045.0 285.9 L1044.0 285.3 L1043.0 285.7 L1042.0 285.1 L1041.0 285.7 L1040.0 285.8 L1039.0 284.9 L1038.0 285.4 L1037.0 285.2 L1036.0 285.4 L1035.0 286.0 L1034.0 285.3 L1033.0 285.1 L1032.0 286.0 L1031.0 285.3 L1030.0 286.0 L1029.0 285.1 L1028.0 286.1 L1027.0 285.4 L1026.0 285.9 L1025.0 286.0 L1024.0 285.5 L1023.0 285.3 L1022.0 285.8 L1021.0 285.0 L1020.0 285.2 L1019.0 286.1 L1018.0 285.5 L1017.0 284.9 L1016.0 285.0 L1015.0 285.7 L1014.0 285.7 L1013.0 285.8 L1012.0 285.1 L1011.0 284.4 L1010.0 282.4 L1009.0 281.2 L1008.0 280.1 L1007.0 278.8 L1006.0 276.9 L1005.0 276.9 L1004.0 277.5 L1003.0 277.0 L1002.0 277.2 L1001.0 276.7 L1000.0 276.6 L999.0 276.9 L998.0 277.0 L997.0 276.7 L996.0 277.0 L995.0 276.8 L994.0 277.0 L993.0 277.1 L992.0 277.2 L991.0 277.1 L990.0 277.3 L989.0 276.8 L988.0 277.4 L987.0 276.5 L986.0 277.2 L985.0 276.5 L984.0 277.4 L983.0 277.2 L982.0 277.3 L981.0 276.4 L980.0 277.6 L979.0 277.3 L978.0 277.2 L977.0 277.3 L976.0 276.5 L975.0 276.5 L974.0 277.3 L973.0 277.6 L972.0 277.2 L971.0 276.6 L970.0 276.6 L969.0 277.4 L968.0 276.8 L967.0 278.3 L966.0 279.3 L965.0 281.0 L964.0 282.8 L963.0 283.7 L962.0 284.6 L961.0 285.2 L960.0 284.7 L959.0 284.7 L958.0 285.6 L957.0 284.5 L956.0 284.9 L955.0 284.4 L954.0 284.5 L953.0 284.9 L952.0 284.6 L951.0 285.3 L950.0 284.5 L949.0 285.0 L948.0 285.2 L947.0 285.2 L946.0 284.5 L945.0 284.6 L944.0 285.2 L943.0 284.8 L942.0 284.6 L941.0 285.5 L940.0 284.8 L939.0 285.2 L938.0 284.8 L937.0 284.5 L936.0 285.1 L935.0 285.0 L934.0 285.4 L933.0 284.7 L932.0 284.8 L931.0 285.0 L930.0 284.7 L929.0 284.7 L928.0 284.7 L927.0 284.5 L926.0 285.1 L925.0 285.1 L924.0 285.0 L923.0 284.5 L922.0 282.9 L921.0 282.1 L920.0 283.0 L919.0 282.6 L918.0 282.1 L917.0 282.6 L916.0 283.1 L915.0 282.7 L914.0 282.1 L913.0 282.8 L912.0 283.1 L911.0 282.0 L910.0 282.4 L909.0 282.3 L908.0 283.0 L907.0 283.0 L906.0 282.9 L905.0 282.1 L904.0 282.9 L903.0 283.0 L902.0 281.9 L901.0 282.3 L900.0 282.4 L899.0 281.9 L898.0 282.7 L897.0 283.0 L896.0 282.7 L895.0 281.3 L894.0 280.6 L893.0 280.4Z" fill="#1552cc"/><path d="M893.0 260.0 L894.0 259.7 L895.0 259.1 L896.0 258.3 L897.0 258.3 L898.0 258.8 L899.0 258.5 L900.0 258.4 L901.0 258.3 L902.0 258.3 L903.0 258.8 L904.0 258.8 L905.0 258.4 L906.0 258.7 L907.0 258.6 L908.0 258.3 L909.0 258.2 L910.0 258.3 L911.0 258.2 L912.0 258.4 L913.0 258.7 L914.0 258.5 L915.0 258.3 L916.0 258.4 L917.0 258.3 L918.0 258.7 L919.0 258.6 L920.0 258.3 L921.0 258.4 L922.0 257.8 L923.0 256.6 L924.0 256.0 L925.0 256.3 L926.0 255.9 L927.0 256.1 L928.0 256.1 L929.0 255.9 L930.0 256.0 L931.0 255.7 L932.0 256.0 L933.0 256.2 L934.0 256.1 L935.0 256.2 L936.0 255.9 L937.0 256.1 L938.0 256.2 L939.0 256.3 L940.0 256.1 L941.0 256.0 L942.0 255.9 L943.0 255.8 L944.0 255.8 L945.0 255.9 L946.0 256.0 L947.0 255.7 L948.0 256.2 L949.0 256.0 L950.0 256.2 L951.0 256.1 L952.0 256.2 L953.0 256.2 L954.0 256.0 L955.0 256.0 L956.0 256.3 L957.0 256.2 L958.0 255.8 L959.0 256.0 L960.0 255.8 L961.0 255.9 L962.0 256.0 L963.0 257.4 L964.0 258.9 L965.0 259.9 L966.0 261.3 L967.0 262.9 L968.0 263.8 L969.0 264.2 L970.0 264.1 L971.0 264.0 L972.0 264.1 L973.0 264.1 L974.0 263.9 L975.0 264.2 L976.0 264.1 L977.0 263.9 L978.0 263.7 L979.0 264.3 L980.0 264.1 L981.0 264.1 L982.0 264.3 L983.0 264.0 L984.0 264.0 L985.0 263.8 L986.0 264.2 L987.0 263.8 L988.0 263.9 L989.0 264.0 L990.0 264.2 L991.0 263.8 L992.0 264.1 L993.0 263.7 L994.0 263.9 L995.0 263.8 L996.0 264.2 L997.0 263.9 L998.0 264.2 L999.0 263.9 L1000.0 264.3 L1001.0 264.1 L1002.0 264.1 L1003.0 263.9 L1004.0 263.8 L1005.0 264.0 L1006.0 264.2 L1007.0 262.8 L1008.0 261.5 L1009.0 259.8 L1010.0 258.4 L1011.0 257.0 L1012.0 255.5 L1013.0 255.2 L1014.0 255.5 L1015.0 255.2 L1016.0 255.4 L1017.0 255.6 L1018.0 255.6 L1019.0 255.8 L1020.0 255.3 L1021.0 255.5 L1022.0 255.6 L1023.0 255.5 L1024.0 255.2 L1025.0 255.7 L1026.0 255.6 L1027.0 255.5 L1028.0 255.6 L1029.0 255.4 L1030.0 255.2 L1031.0 255.6 L1032.0 255.8 L1033.0 255.7 L1034.0 255.8 L1035.0 255.7 L1036.0 255.7 L1037.0 255.5 L1038.0 255.3 L1039.0 255.6 L1040.0 255.3 L1041.0 255.4 L1042.0 255.2 L1043.0 255.4 L1044.0 255.7 L1045.0 255.4 L1046.0 255.4 L1047.0 255.5 L1048.0 255.5 L1049.0 255.4 L1050.0 255.6 L1051.0 255.7 L1052.0 255.5 L1053.0 255.7 L1054.0 255.5 L1055.0 255.7 L1056.0 255.5 L1057.0 255.6 L1058.0 255.7 L1059.0 256.1 L1060.0 255.9 L1061.0 255.7 L1062.0 255.8 L1063.0 256.3 L1064.0 256.2 L1065.0 255.9 L1066.0 256.0 L1067.0 256.2 L1068.0 256.2 L1069.0 255.9 L1070.0 256.3 L1071.0 255.7 L1072.0 257.5 L1073.0 258.9 L1074.0 260.4 L1075.0 260.5 L1076.0 260.7 L1077.0 260.2 L1078.0 260.2 L1079.0 260.3 L1080.0 260.4 L1081.0 260.2 L1082.0 260.3 L1083.0 260.3 L1084.0 260.6 L1085.0 260.3 L1086.0 260.3 L1087.0 260.7 L1088.0 260.5 L1089.0 260.6 L1090.0 260.7 L1091.0 260.7 L1092.0 260.6 L1093.0 260.6 L1094.0 260.6 L1095.0 260.5 L1096.0 260.8 L1097.0 260.6 L1098.0 260.2 L1099.0 260.6 L1100.0 260.7 L1101.0 260.5 L1102.0 260.7 L1103.0 260.2 L1104.0 260.2 L1105.0 260.7 L1106.0 260.8 L1107.0 260.3 L1108.0 260.5 L1109.0 263.0 L1110.0 265.1 L1111.0 267.4 L1112.0 269.5 L1112.0 267.7 L1111.0 269.9 L1110.0 271.9 L1109.0 274.3 L1108.0 276.7 L1107.0 276.6 L1106.0 276.6 L1105.0 276.7 L1104.0 276.7 L1103.0 276.4 L1102.0 276.4 L1101.0 276.5 L1100.0 276.6 L1099.0 276.2 L1098.0 276.3 L1097.0 276.2 L1096.0 276.7 L1095.0 276.4 L1094.0 276.2 L1093.0 276.4 L1092.0 276.7 L1091.0 276.7 L1090.0 276.6 L1089.0 276.3 L1088.0 276.3 L1087.0 276.3 L1086.0 276.6 L1085.0 276.7 L1084.0 276.4 L1083.0 276.5 L1082.0 276.4 L1081.0 276.7 L1080.0 276.6 L1079.0 276.3 L1078.0 276.5 L1077.0 276.7 L1076.0 276.8 L1075.0 276.5 L1074.0 276.4 L1073.0 278.1 L1072.0 279.4 L1071.0 280.9 L1070.0 280.8 L1069.0 281.1 L1068.0 281.0 L1067.0 281.1 L1066.0 281.1 L1065.0 280.8 L1064.0 280.9 L1063.0 281.2 L1062.0 281.0 L1061.0 281.1 L1060.0 280.8 L1059.0 281.2 L1058.0 281.3 L1057.0 281.4 L1056.0 281.1 L1055.0 281.3 L1054.0 281.6 L1053.0 281.5 L1052.0 281.3 L1051.0 281.7 L1050.0 281.6 L1049.0 281.4 L1048.0 281.4 L1047.0 281.3 L1046.0 281.4 L1045.0 281.6 L1044.0 281.2 L1043.0 281.7 L1042.0 281.4 L1041.0 281.3 L1040.0 281.2 L1039.0 281.3 L1038.0 281.5 L1037.0 281.3 L1036.0 281.3 L1035.0 281.2 L1034.0 281.3 L1033.0 281.5 L1032.0 281.4 L1031.0 281.6 L1030.0 281.3 L1029.0 281.2 L1028.0 281.6 L1027.0 281.7 L1026.0 281.2 L1025.0 281.5 L1024.0 281.7 L1023.0 281.5 L1022.0 281.3 L1021.0 281.7 L1020.0 281.3 L1019.0 281.5 L1018.0 281.3 L1017.0 281.7 L1016.0 281.7 L1015.0 281.4 L1014.0 281.3 L1013.0 281.4 L1012.0 281.4 L1011.0 279.9 L1010.0 278.7 L1009.0 277.1 L1008.0 276.0 L1007.0 274.7 L1006.0 273.1 L1005.0 273.2 L1004.0 272.9 L1003.0 272.9 L1002.0 272.8 L1001.0 273.1 L1000.0 273.0 L999.0 273.1 L998.0 273.1 L997.0 273.1 L996.0 272.9 L995.0 273.0 L994.0 273.1 L993.0 272.7 L992.0 273.2 L991.0 272.7 L990.0 273.0 L989.0 273.0 L988.0 273.0 L987.0 272.9 L986.0 272.9 L985.0 273.0 L984.0 273.2 L983.0 273.0 L982.0 273.3 L981.0 272.9 L980.0 273.3 L979.0 273.2 L978.0 272.8 L977.0 273.2 L976.0 272.8 L975.0 272.7 L974.0 272.8 L973.0 273.2 L972.0 273.0 L971.0 272.9 L970.0 272.8 L969.0 272.8 L968.0 272.7 L967.0 274.5 L966.0 275.8 L965.0 276.8 L964.0 278.4 L963.0 279.7 L962.0 281.1 L961.0 280.8 L960.0 280.9 L959.0 280.8 L958.0 281.0 L957.0 280.7 L956.0 281.3 L955.0 281.2 L954.0 281.0 L953.0 281.0 L952.0 281.0 L951.0 280.8 L950.0 281.2 L949.0 280.8 L948.0 280.9 L947.0 280.8 L946.0 281.1 L945.0 281.2 L944.0 281.2 L943.0 280.9 L942.0 280.8 L941.0 281.1 L940.0 281.2 L939.0 281.2 L938.0 281.0 L937.0 281.0 L936.0 281.0 L935.0 280.9 L934.0 281.2 L933.0 281.1 L932.0 281.2 L931.0 281.0 L930.0 280.8 L929.0 280.9 L928.0 281.1 L927.0 280.8 L926.0 281.2 L925.0 281.2 L924.0 281.0 L923.0 280.1 L922.0 279.2 L921.0 278.4 L920.0 278.3 L919.0 278.6 L918.0 278.8 L917.0 278.5 L916.0 278.5 L915.0 278.3 L914.0 278.6 L913.0 278.8 L912.0 278.3 L911.0 278.7 L910.0 278.4 L909.0 278.5 L908.0 278.7 L907.0 278.8 L906.0 278.4 L905.0 278.3 L904.0 278.2 L903.0 278.4 L902.0 278.4 L901.0 278.3 L900.0 278.5 L899.0 278.7 L898.0 278.7 L897.0 278.5 L896.0 278.3 L895.0 277.6 L894.0 277.3 L893.0 276.7Z" fill="#20985e"/><path d="M893.0 266.4 L894.0 266.2 L895.0 266.5 L896.0 266.2 L897.0 266.7 L898.0 266.4 L899.0 266.4 L900.0 266.2 L901.0 266.5 L902.0 266.3 L903.0 266.7 L904.0 266.3 L905.0 266.3 L906.0 266.6 L907.0 266.4 L908.0 266.1 L909.0 266.4 L910.0 266.3 L911.0 266.1 L912.0 266.6 L913.0 266.7 L914.0 266.4 L915.0 266.4 L916.0 266.2 L917.0 266.5 L918.0 266.3 L919.0 266.2 L920.0 266.4 L921.0 266.0 L922.0 265.8 L923.0 265.3 L924.0 264.5 L925.0 264.4 L926.0 264.3 L927.0 264.5 L928.0 264.6 L929.0 264.4 L930.0 264.5 L931.0 264.5 L932.0 264.7 L933.0 264.3 L934.0 264.7 L935.0 264.3 L936.0 264.3 L937.0 264.3 L938.0 264.6 L939.0 264.3 L940.0 264.7 L941.0 264.6 L942.0 264.3 L943.0 264.6 L944.0 264.2 L945.0 264.3 L946.0 264.2 L947.0 264.5 L948.0 264.4 L949.0 264.4 L950.0 264.4 L951.0 264.4 L952.0 264.8 L953.0 264.3 L954.0 264.3 L955.0 264.4 L956.0 264.6 L957.0 264.5 L958.0 264.3 L959.0 264.3 L960.0 263.9 L961.0 263.8 L962.0 264.0 L963.0 263.8 L964.0 263.7 L965.0 263.1 L966.0 263.3 L967.0 262.8 L968.0 262.7 L969.0 262.6 L970.0 262.2 L971.0 262.6 L972.0 262.7 L973.0 262.4 L974.0 262.7 L975.0 262.5 L976.0 262.3 L977.0 262.7 L978.0 262.3 L979.0 262.8 L980.0 262.3 L981.0 262.3 L982.0 262.4 L983.0 262.2 L984.0 262.3 L985.0 262.6 L986.0 262.4 L987.0 262.5 L988.0 262.6 L989.0 262.7 L990.0 262.3 L991.0 262.4 L992.0 262.7 L993.0 262.3 L994.0 262.7 L995.0 262.3 L996.0 262.3 L997.0 262.7 L998.0 262.3 L999.0 262.8 L1000.0 262.7 L1001.0 262.7 L1002.0 262.4 L1003.0 262.6 L1004.0 262.8 L1005.0 262.7 L1006.0 262.4 L1007.0 262.5 L1008.0 262.7 L1009.0 262.6 L1010.0 262.4 L1011.0 262.6 L1012.0 262.3 L1013.0 262.5 L1014.0 262.3 L1015.0 262.6 L1016.0 262.3 L1017.0 262.7 L1018.0 262.6 L1019.0 262.8 L1020.0 262.3 L1021.0 262.7 L1022.0 262.4 L1023.0 262.9 L1024.0 262.5 L1025.0 262.6 L1026.0 262.7 L1027.0 262.7 L1028.0 262.4 L1029.0 262.4 L1030.0 262.4 L1031.0 262.5 L1032.0 262.5 L1033.0 262.5 L1034.0 262.6 L1035.0 262.8 L1036.0 263.0 L1037.0 262.8 L1038.0 263.0 L1039.0 262.7 L1040.0 262.5 L1041.0 262.9 L1042.0 262.8 L1043.0 262.6 L1044.0 263.0 L1045.0 263.2 L1046.0 262.9 L1047.0 262.6 L1048.0 263.0 L1049.0 263.1 L1050.0 262.9 L1051.0 263.0 L1052.0 263.1 L1053.0 263.0 L1054.0 263.0 L1055.0 264.0 L1056.0 264.6 L1057.0 265.0 L1058.0 265.8 L1059.0 266.0 L1060.0 266.3 L1061.0 265.9 L1062.0 266.1 L1063.0 265.8 L1064.0 266.3 L1065.0 265.9 L1066.0 266.3 L1067.0 266.3 L1068.0 265.9 L1069.0 266.0 L1070.0 266.2 L1071.0 265.8 L1072.0 266.0 L1073.0 266.1 L1074.0 266.4 L1075.0 266.5 L1076.0 266.2 L1077.0 266.5 L1078.0 266.7 L1079.0 266.7 L1080.0 266.8 L1081.0 266.3 L1082.0 266.4 L1083.0 266.7 L1084.0 266.6 L1085.0 266.6 L1086.0 266.5 L1087.0 266.2 L1088.0 266.2 L1089.0 266.3 L1090.0 266.5 L1091.0 266.3 L1092.0 266.7 L1093.0 266.5 L1094.0 266.5 L1095.0 266.3 L1096.0 266.5 L1097.0 266.6 L1098.0 266.3 L1099.0 266.5 L1100.0 266.4 L1101.0 266.5 L1102.0 266.4 L1103.0 266.6 L1104.0 266.7 L1105.0 266.4 L1106.0 266.7 L1107.0 266.7 L1108.0 266.7 L1109.0 267.0 L1110.0 267.4 L1111.0 267.4 L1112.0 267.9 L1112.0 269.1 L1111.0 269.2 L1110.0 270.0 L1109.0 270.1 L1108.0 270.3 L1107.0 270.7 L1106.0 270.6 L1105.0 270.5 L1104.0 270.4 L1103.0 270.4 L1102.0 270.3 L1101.0 270.6 L1100.0 270.3 L1099.0 270.6 L1098.0 270.6 L1097.0 270.6 L1096.0 270.2 L1095.0 270.3 L1094.0 270.2 L1093.0 270.7 L1092.0 270.7 L1091.0 270.4 L1090.0 270.4 L1089.0 270.2 L1088.0 270.2 L1087.0 270.4 L1086.0 270.7 L1085.0 270.7 L1084.0 270.6 L1083.0 270.6 L1082.0 270.4 L1081.0 270.7 L1080.0 270.5 L1079.0 270.7 L1078.0 270.4 L1077.0 270.6 L1076.0 270.6 L1075.0 270.3 L1074.0 270.4 L1073.0 270.7 L1072.0 270.7 L1071.0 271.0 L1070.0 270.8 L1069.0 270.8 L1068.0 270.9 L1067.0 271.1 L1066.0 271.0 L1065.0 270.8 L1064.0 271.0 L1063.0 270.9 L1062.0 271.3 L1061.0 271.1 L1060.0 270.7 L1059.0 271.0 L1058.0 271.0 L1057.0 271.6 L1056.0 272.7 L1055.0 273.0 L1054.0 273.8 L1053.0 274.3 L1052.0 274.0 L1051.0 273.9 L1050.0 274.1 L1049.0 274.3 L1048.0 274.0 L1047.0 274.0 L1046.0 274.1 L1045.0 274.1 L1044.0 273.9 L1043.0 274.2 L1042.0 274.4 L1041.0 274.1 L1040.0 274.0 L1039.0 273.9 L1038.0 274.4 L1037.0 274.1 L1036.0 274.4 L1035.0 274.4 L1034.0 274.4 L1033.0 274.0 L1032.0 274.2 L1031.0 274.4 L1030.0 274.1 L1029.0 274.3 L1028.0 274.6 L1027.0 274.3 L1026.0 274.2 L1025.0 274.2 L1024.0 274.6 L1023.0 274.5 L1022.0 274.3 L1021.0 274.6 L1020.0 274.4 L1019.0 274.4 L1018.0 274.6 L1017.0 274.2 L1016.0 274.3 L1015.0 274.5 L1014.0 274.7 L1013.0 274.4 L1012.0 274.6 L1011.0 274.4 L1010.0 274.3 L1009.0 274.4 L1008.0 274.4 L1007.0 274.6 L1006.0 274.7 L1005.0 274.7 L1004.0 274.4 L1003.0 274.5 L1002.0 274.7 L1001.0 274.3 L1000.0 274.6 L999.0 274.7 L998.0 274.3 L997.0 274.4 L996.0 274.3 L995.0 274.5 L994.0 274.4 L993.0 274.4 L992.0 274.7 L991.0 274.6 L990.0 274.3 L989.0 274.7 L988.0 274.5 L987.0 274.4 L986.0 274.7 L985.0 274.6 L984.0 274.8 L983.0 274.4 L982.0 274.7 L981.0 274.7 L980.0 274.3 L979.0 274.7 L978.0 274.3 L977.0 274.8 L976.0 274.7 L975.0 274.3 L974.0 274.7 L973.0 274.5 L972.0 274.4 L971.0 274.3 L970.0 274.2 L969.0 274.5 L968.0 274.7 L967.0 274.5 L966.0 273.9 L965.0 274.0 L964.0 273.5 L963.0 273.4 L962.0 272.9 L961.0 272.8 L960.0 273.0 L959.0 272.8 L958.0 272.8 L957.0 272.8 L956.0 272.5 L955.0 272.7 L954.0 272.2 L953.0 272.2 L952.0 272.4 L951.0 272.8 L950.0 272.5 L949.0 272.5 L948.0 272.8 L947.0 272.5 L946.0 272.2 L945.0 272.5 L944.0 272.5 L943.0 272.5 L942.0 272.6 L941.0 272.4 L940.0 272.5 L939.0 272.7 L938.0 272.8 L937.0 272.6 L936.0 272.2 L935.0 272.8 L934.0 272.6 L933.0 272.6 L932.0 272.6 L931.0 272.4 L930.0 272.4 L929.0 272.2 L928.0 272.4 L927.0 272.2 L926.0 272.6 L925.0 272.8 L924.0 272.7 L923.0 271.6 L922.0 271.0 L921.0 270.5 L920.0 270.8 L919.0 270.7 L918.0 270.6 L917.0 270.6 L916.0 270.7 L915.0 270.9 L914.0 270.9 L913.0 270.6 L912.0 270.6 L911.0 270.4 L910.0 270.4 L909.0 270.8 L908.0 270.9 L907.0 270.5 L906.0 270.4 L905.0 270.8 L904.0 270.4 L903.0 270.6 L902.0 270.4 L901.0 270.5 L900.0 270.7 L899.0 270.6 L898.0 270.8 L897.0 270.4 L896.0 270.4 L895.0 270.4 L894.0 270.7 L893.0 270.6Z" fill="#b3b3a3"/></g>
<rect x="880" y="202.2" width="15" height="21.2" fill="#48431c"/>
<rect x="895" y="202.2" width="28" height="21.2" fill="#5a5118"/>
<rect x="923.00" y="202.2" width="0.10" height="21.200000000000017" fill="#6a6500"/><rect x="923.10" y="202.2" width="14.69" height="21.200000000000017" fill="#6b5600"/><rect x="937.79" y="202.2" width="14.69" height="21.200000000000017" fill="#6a6500"/><rect x="952.49" y="202.2" width="14.69" height="21.200000000000017" fill="#6b5600"/><rect x="967.18" y="202.2" width="14.69" height="21.200000000000017" fill="#6a6500"/><rect x="981.87" y="202.2" width="14.69" height="21.200000000000017" fill="#6b5600"/><rect x="996.57" y="202.2" width="14.69" height="21.200000000000017" fill="#6a6500"/><rect x="1011.26" y="202.2" width="14.69" height="21.200000000000017" fill="#6b5600"/><rect x="1025.95" y="202.2" width="14.69" height="21.200000000000017" fill="#6a6500"/><rect x="1040.65" y="202.2" width="14.69" height="21.200000000000017" fill="#6b5600"/><rect x="1055.34" y="202.2" width="14.69" height="21.200000000000017" fill="#6a6500"/><rect x="1070.04" y="202.2" width="1.96" height="21.200000000000017" fill="#6b5600"/>
<rect x="1072" y="202.2" width="40" height="21.2" fill="#5a5118"/>
<rect x="880" y="311.5" width="234" height="1.6" fill="#6a6418"/>
<rect x="1042" y="114" width="30" height="85.5" fill="#222222"/>
<clipPath id="nt4"><rect x="1072" y="114" width="324" height="85.5"/></clipPath><g clip-path="url(#nt4)"><rect x="1072" y="114" width="324" height="85.5" fill="#1b1b29"/><path d="M1044.3 114 L1083.6 156.8 L1044.3 199.5 Z" fill="#38384f"/><path d="M1083.6 114 L1122.9 156.8 L1083.6 199.5 Z" fill="#38384f"/><path d="M1122.9 114 L1162.2 156.8 L1122.9 199.5 Z" fill="#38384f"/><path d="M1162.2 114 L1201.5 156.8 L1162.2 199.5 Z" fill="#38384f"/><path d="M1201.5 114 L1240.8 156.8 L1201.5 199.5 Z" fill="#38384f"/><path d="M1240.8 114 L1280.1 156.8 L1240.8 199.5 Z" fill="#38384f"/><path d="M1280.1 114 L1319.4 156.8 L1280.1 199.5 Z" fill="#38384f"/><path d="M1319.4 114 L1358.7 156.8 L1319.4 199.5 Z" fill="#38384f"/><path d="M1358.7 114 L1398.0 156.8 L1358.7 199.5 Z" fill="#38384f"/><rect x="1098.4" y="114" width="2" height="85.5" fill="#111118" opacity="0.4"/><rect x="1157.2" y="114" width="2" height="85.5" fill="#111118" opacity="0.4"/><rect x="1216.0" y="114" width="2" height="85.5" fill="#111118" opacity="0.4"/><rect x="1274.7" y="114" width="2" height="85.5" fill="#111118" opacity="0.4"/><rect x="1333.5" y="114" width="2" height="85.5" fill="#111118" opacity="0.4"/><rect x="1392.3" y="114" width="2" height="85.5" fill="#111118" opacity="0.4"/></g>
<clipPath id="preP"><rect x="1042" y="100" width="30" height="100"/></clipPath>
<g clip-path="url(#preP)"><path d="M1042.0 144.9 L1043.0 144.5 L1044.0 145.6 L1045.0 145.2 L1046.0 145.1 L1047.0 145.6 L1048.0 145.2 L1049.0 144.5 L1050.0 145.3 L1051.0 145.2 L1052.0 145.4 L1053.0 144.9 L1054.0 145.2 L1055.0 144.7 L1056.0 145.2 L1057.0 144.7 L1058.0 145.0 L1059.0 145.4 L1060.0 144.9 L1061.0 144.5 L1062.0 145.6 L1063.0 145.3 L1064.0 144.6 L1065.0 145.0 L1066.0 145.4 L1067.0 145.1 L1068.0 145.4 L1069.0 145.6 L1070.0 145.5 L1071.0 144.4 L1072.0 143.5 L1073.0 143.1 L1074.0 143.1 L1074.0 169.0 L1073.0 169.2 L1072.0 167.7 L1071.0 167.2 L1070.0 166.6 L1069.0 166.7 L1068.0 167.3 L1067.0 167.6 L1066.0 167.2 L1065.0 167.2 L1064.0 166.8 L1063.0 167.0 L1062.0 167.2 L1061.0 167.5 L1060.0 166.5 L1059.0 167.5 L1058.0 166.8 L1057.0 167.1 L1056.0 167.5 L1055.0 167.3 L1054.0 167.0 L1053.0 166.9 L1052.0 166.7 L1051.0 166.5 L1050.0 166.5 L1049.0 166.7 L1048.0 166.4 L1047.0 167.4 L1046.0 167.5 L1045.0 166.6 L1044.0 166.8 L1043.0 167.5 L1042.0 166.7Z" fill="#1f3a66"/><path d="M1042.0 148.8 L1043.0 148.7 L1044.0 149.1 L1045.0 149.1 L1046.0 148.8 L1047.0 149.0 L1048.0 149.2 L1049.0 148.8 L1050.0 148.9 L1051.0 148.7 L1052.0 148.8 L1053.0 149.1 L1054.0 149.1 L1055.0 149.3 L1056.0 149.1 L1057.0 149.0 L1058.0 149.1 L1059.0 149.3 L1060.0 149.3 L1061.0 148.9 L1062.0 148.7 L1063.0 148.7 L1064.0 148.9 L1065.0 148.9 L1066.0 148.7 L1067.0 148.9 L1068.0 149.1 L1069.0 148.7 L1070.0 149.3 L1071.0 148.1 L1072.0 148.0 L1073.0 147.2 L1074.0 147.2 L1074.0 164.6 L1073.0 164.7 L1072.0 163.9 L1071.0 163.7 L1070.0 162.8 L1069.0 162.9 L1068.0 162.7 L1067.0 163.2 L1066.0 163.0 L1065.0 162.7 L1064.0 163.1 L1063.0 162.7 L1062.0 163.3 L1061.0 163.0 L1060.0 163.2 L1059.0 163.0 L1058.0 163.0 L1057.0 163.2 L1056.0 163.2 L1055.0 163.3 L1054.0 163.2 L1053.0 163.1 L1052.0 163.1 L1051.0 162.8 L1050.0 162.8 L1049.0 163.1 L1048.0 163.2 L1047.0 163.3 L1046.0 162.8 L1045.0 163.3 L1044.0 163.3 L1043.0 162.9 L1042.0 163.0Z" fill="#2a5a44"/><path d="M1042.0 150.6 L1043.0 150.8 L1044.0 150.8 L1045.0 150.7 L1046.0 150.3 L1047.0 150.8 L1048.0 150.5 L1049.0 150.7 L1050.0 150.3 L1051.0 150.3 L1052.0 150.6 L1053.0 150.5 L1054.0 150.5 L1055.0 150.5 L1056.0 150.2 L1057.0 150.8 L1058.0 150.6 L1059.0 150.5 L1060.0 150.2 L1061.0 150.3 L1062.0 150.4 L1063.0 150.6 L1064.0 150.7 L1065.0 150.4 L1066.0 150.7 L1067.0 150.3 L1068.0 150.2 L1069.0 150.7 L1070.0 150.4 L1071.0 150.4 L1072.0 150.5 L1073.0 150.2 L1074.0 150.4 L1074.0 161.6 L1073.0 161.6 L1072.0 161.5 L1071.0 161.7 L1070.0 161.6 L1069.0 161.3 L1068.0 161.3 L1067.0 161.7 L1066.0 161.4 L1065.0 161.7 L1064.0 161.5 L1063.0 161.6 L1062.0 161.7 L1061.0 161.6 L1060.0 161.5 L1059.0 161.2 L1058.0 161.3 L1057.0 161.4 L1056.0 161.3 L1055.0 161.5 L1054.0 161.7 L1053.0 161.6 L1052.0 161.3 L1051.0 161.5 L1050.0 161.3 L1049.0 161.5 L1048.0 161.5 L1047.0 161.6 L1046.0 161.6 L1045.0 161.8 L1044.0 161.8 L1043.0 161.5 L1042.0 161.8Z" fill="#8a8a88"/></g>
<clipPath id="postP"><rect x="1072" y="100" width="330" height="100"/></clipPath>
<g clip-path="url(#postP)"><path d="M1070.0 145.0 L1071.0 144.3 L1072.0 143.9 L1073.0 143.4 L1074.0 142.9 L1075.0 142.8 L1076.0 142.1 L1077.0 143.3 L1078.0 142.8 L1079.0 142.6 L1080.0 143.0 L1081.0 142.3 L1082.0 143.0 L1083.0 142.9 L1084.0 142.2 L1085.0 143.0 L1086.0 142.5 L1087.0 142.7 L1088.0 143.0 L1089.0 142.3 L1090.0 143.2 L1091.0 142.1 L1092.0 142.7 L1093.0 143.2 L1094.0 143.2 L1095.0 142.5 L1096.0 142.2 L1097.0 142.6 L1098.0 142.6 L1099.0 143.0 L1100.0 142.4 L1101.0 143.0 L1102.0 142.6 L1103.0 142.8 L1104.0 143.1 L1105.0 142.9 L1106.0 142.2 L1107.0 142.6 L1108.0 142.8 L1109.0 142.5 L1110.0 143.3 L1111.0 142.6 L1112.0 142.9 L1113.0 142.2 L1114.0 143.0 L1114.5 143.0 L1114.5 169.6 L1114.0 169.4 L1113.0 169.3 L1112.0 169.4 L1111.0 168.9 L1110.0 168.8 L1109.0 169.1 L1108.0 169.4 L1107.0 168.8 L1106.0 169.1 L1105.0 169.8 L1104.0 169.6 L1103.0 169.7 L1102.0 169.1 L1101.0 169.1 L1100.0 168.8 L1099.0 169.8 L1098.0 169.2 L1097.0 168.8 L1096.0 169.8 L1095.0 169.3 L1094.0 169.7 L1093.0 169.6 L1092.0 168.9 L1091.0 169.6 L1090.0 169.4 L1089.0 169.7 L1088.0 169.7 L1087.0 169.2 L1086.0 169.7 L1085.0 169.0 L1084.0 169.7 L1083.0 168.8 L1082.0 169.3 L1081.0 169.8 L1080.0 168.7 L1079.0 169.1 L1078.0 169.2 L1077.0 169.6 L1076.0 168.8 L1075.0 169.1 L1074.0 169.2 L1073.0 168.8 L1072.0 168.1 L1071.0 167.1 L1070.0 167.3Z" fill="#1552cc"/><path d="M1070.0 149.2 L1071.0 148.5 L1072.0 148.1 L1073.0 147.6 L1074.0 147.3 L1075.0 147.0 L1076.0 147.2 L1077.0 147.0 L1078.0 147.2 L1079.0 147.3 L1080.0 147.2 L1081.0 147.3 L1082.0 147.4 L1083.0 147.3 L1084.0 147.2 L1085.0 147.4 L1086.0 147.3 L1087.0 147.2 L1088.0 147.1 L1089.0 147.5 L1090.0 147.4 L1091.0 147.2 L1092.0 147.4 L1093.0 147.3 L1094.0 147.0 L1095.0 147.1 L1096.0 147.1 L1097.0 147.5 L1098.0 147.3 L1099.0 147.0 L1100.0 147.2 L1101.0 146.9 L1102.0 147.3 L1103.0 146.9 L1104.0 147.0 L1105.0 147.1 L1106.0 147.0 L1107.0 147.4 L1108.0 147.0 L1109.0 147.1 L1110.0 147.3 L1111.0 147.4 L1112.0 147.5 L1113.0 147.3 L1114.0 147.2 L1114.5 147.4 L1114.5 164.6 L1114.0 165.1 L1113.0 164.6 L1112.0 164.9 L1111.0 165.1 L1110.0 164.7 L1109.0 164.9 L1108.0 165.1 L1107.0 164.6 L1106.0 164.7 L1105.0 164.7 L1104.0 164.6 L1103.0 164.7 L1102.0 164.5 L1101.0 165.0 L1100.0 164.6 L1099.0 164.9 L1098.0 164.8 L1097.0 164.6 L1096.0 164.6 L1095.0 165.0 L1094.0 165.0 L1093.0 164.7 L1092.0 164.7 L1091.0 164.7 L1090.0 165.0 L1089.0 164.7 L1088.0 164.8 L1087.0 164.5 L1086.0 164.9 L1085.0 164.6 L1084.0 164.8 L1083.0 164.9 L1082.0 165.0 L1081.0 164.7 L1080.0 164.9 L1079.0 165.1 L1078.0 165.1 L1077.0 165.0 L1076.0 164.7 L1075.0 164.7 L1074.0 164.7 L1073.0 164.4 L1072.0 164.0 L1071.0 163.8 L1070.0 162.9Z" fill="#20985e"/><path d="M1070.0 150.4 L1071.0 150.5 L1072.0 150.3 L1073.0 150.7 L1074.0 150.5 L1075.0 150.5 L1076.0 150.3 L1077.0 150.8 L1078.0 150.8 L1079.0 150.7 L1080.0 150.3 L1081.0 150.6 L1082.0 150.4 L1083.0 150.4 L1084.0 150.6 L1085.0 150.4 L1086.0 150.7 L1087.0 150.6 L1088.0 150.6 L1089.0 150.5 L1090.0 150.3 L1091.0 150.6 L1092.0 150.3 L1093.0 150.3 L1094.0 150.3 L1095.0 150.7 L1096.0 150.7 L1097.0 150.6 L1098.0 150.5 L1099.0 150.4 L1100.0 150.3 L1101.0 150.6 L1102.0 150.3 L1103.0 150.6 L1104.0 150.7 L1105.0 150.5 L1106.0 150.6 L1107.0 150.5 L1108.0 150.3 L1109.0 150.4 L1110.0 150.3 L1111.0 150.5 L1112.0 150.6 L1113.0 150.1 L1114.0 150.4 L1114.5 149.8 L1114.5 161.7 L1114.0 161.7 L1113.0 161.6 L1112.0 161.7 L1111.0 161.4 L1110.0 161.7 L1109.0 161.4 L1108.0 161.4 L1107.0 161.6 L1106.0 161.4 L1105.0 161.7 L1104.0 161.7 L1103.0 161.4 L1102.0 161.6 L1101.0 161.3 L1100.0 161.7 L1099.0 161.7 L1098.0 161.3 L1097.0 161.4 L1096.0 161.7 L1095.0 161.4 L1094.0 161.5 L1093.0 161.5 L1092.0 161.8 L1091.0 161.8 L1090.0 161.3 L1089.0 161.4 L1088.0 161.5 L1087.0 161.3 L1086.0 161.3 L1085.0 161.4 L1084.0 161.3 L1083.0 161.7 L1082.0 161.3 L1081.0 161.7 L1080.0 161.3 L1079.0 161.6 L1078.0 161.4 L1077.0 161.7 L1076.0 161.5 L1075.0 161.6 L1074.0 161.5 L1073.0 161.3 L1072.0 161.3 L1071.0 161.3 L1070.0 161.6Z" fill="#9c9c98"/><path d="M1114.5 142.3 L1115.5 142.6 L1116.5 142.8 L1117.5 143.2 L1118.5 143.2 L1119.5 142.5 L1120.5 142.3 L1121.5 142.2 L1122.5 143.3 L1123.5 142.4 L1124.5 142.7 L1125.5 143.1 L1126.5 142.2 L1127.5 142.8 L1128.5 143.0 L1129.5 142.4 L1130.5 142.9 L1131.5 142.7 L1132.5 142.9 L1133.5 142.5 L1134.5 142.6 L1135.5 142.7 L1136.5 143.3 L1137.5 142.4 L1138.5 142.3 L1139.5 142.9 L1140.5 142.3 L1141.5 142.1 L1142.5 143.2 L1143.5 143.2 L1144.5 142.9 L1145.5 142.8 L1146.5 142.2 L1147.5 142.6 L1148.5 142.9 L1149.5 142.9 L1150.5 142.2 L1151.5 142.3 L1152.5 143.2 L1153.5 143.1 L1154.5 142.1 L1155.5 142.1 L1156.5 143.0 L1157.5 143.0 L1158.5 142.7 L1159.5 142.5 L1160.5 142.6 L1161.5 142.4 L1162.5 142.4 L1163.5 142.7 L1164.5 143.3 L1165.5 142.6 L1166.5 142.3 L1167.5 142.3 L1168.5 142.7 L1169.5 143.0 L1170.5 142.1 L1171.5 143.3 L1172.5 142.9 L1173.5 143.2 L1174.5 142.9 L1175.5 142.9 L1176.5 143.1 L1177.5 142.6 L1178.5 143.2 L1179.5 142.4 L1180.5 142.2 L1181.5 142.9 L1182.5 142.7 L1183.5 143.3 L1184.5 143.0 L1185.5 144.1 L1186.5 144.6 L1187.5 144.5 L1188.5 145.3 L1189.5 145.6 L1190.5 144.5 L1191.5 145.2 L1192.5 145.3 L1193.5 144.8 L1194.5 144.5 L1195.5 144.8 L1196.5 145.4 L1197.5 144.4 L1198.5 145.0 L1199.5 144.4 L1200.5 145.0 L1201.5 145.0 L1202.5 144.7 L1203.5 144.6 L1204.5 144.9 L1205.5 145.4 L1206.5 145.6 L1207.5 144.9 L1208.5 144.5 L1209.5 145.4 L1210.5 144.9 L1211.5 145.6 L1212.5 144.7 L1213.5 144.8 L1214.5 143.1 L1215.5 142.9 L1216.5 141.2 L1217.5 141.2 L1218.5 141.1 L1219.5 140.9 L1220.5 141.3 L1221.5 140.8 L1222.5 141.3 L1223.5 140.4 L1224.5 141.2 L1225.5 141.4 L1226.5 140.8 L1227.5 140.6 L1228.5 141.5 L1229.5 141.1 L1230.5 141.5 L1231.5 140.8 L1232.5 141.4 L1233.5 140.7 L1234.5 141.0 L1235.5 140.9 L1236.5 141.4 L1237.5 140.9 L1238.5 140.4 L1239.5 141.2 L1240.5 140.8 L1241.5 141.3 L1242.5 140.4 L1243.5 140.5 L1244.5 140.8 L1245.5 141.4 L1246.5 140.4 L1247.5 141.2 L1248.5 140.7 L1249.5 140.5 L1250.5 141.6 L1251.5 141.6 L1252.5 141.6 L1253.5 140.8 L1254.5 140.6 L1255.5 140.4 L1256.5 140.9 L1257.5 141.3 L1258.5 142.2 L1259.5 142.9 L1260.5 143.8 L1261.5 145.2 L1262.5 145.1 L1263.5 145.2 L1264.5 145.5 L1265.5 145.6 L1266.5 145.0 L1267.5 145.2 L1268.5 145.9 L1269.5 145.1 L1270.5 145.3 L1271.5 145.8 L1272.5 145.5 L1273.5 145.3 L1274.5 144.7 L1275.5 142.8 L1276.5 143.0 L1277.5 142.5 L1278.5 141.6 L1279.5 141.7 L1280.5 142.6 L1281.5 141.6 L1282.5 142.0 L1283.5 141.6 L1284.5 142.3 L1285.5 141.5 L1286.5 141.7 L1287.5 142.0 L1288.5 141.8 L1289.5 141.5 L1290.5 141.8 L1291.5 142.3 L1292.5 141.5 L1293.5 142.2 L1294.5 141.5 L1295.5 141.9 L1296.5 141.8 L1297.5 142.3 L1298.5 141.9 L1299.5 142.4 L1300.5 141.9 L1301.5 142.3 L1302.5 142.7 L1303.5 142.4 L1304.5 142.7 L1305.5 141.9 L1306.5 142.6 L1307.5 141.8 L1308.5 142.6 L1309.5 142.4 L1310.5 142.7 L1311.5 142.1 L1312.5 142.7 L1313.5 142.3 L1314.5 142.5 L1315.5 142.3 L1316.5 142.2 L1317.5 142.2 L1318.5 142.5 L1319.5 141.7 L1320.5 142.8 L1321.5 142.7 L1322.5 142.8 L1323.5 142.3 L1324.5 142.6 L1325.5 142.7 L1326.5 142.7 L1327.5 142.6 L1328.5 142.5 L1329.5 143.0 L1330.5 142.1 L1331.5 143.0 L1332.5 141.9 L1333.5 142.8 L1334.5 142.0 L1335.5 142.4 L1336.5 142.9 L1337.5 142.3 L1338.5 142.3 L1339.5 142.6 L1340.5 143.0 L1341.5 142.0 L1342.5 143.0 L1343.5 142.9 L1344.5 142.9 L1345.5 142.2 L1346.5 142.8 L1347.5 143.1 L1348.5 142.7 L1349.5 143.1 L1350.5 142.7 L1351.5 143.7 L1352.5 143.2 L1353.5 143.4 L1354.5 143.2 L1355.5 143.6 L1356.5 144.1 L1357.5 144.4 L1358.5 143.5 L1359.5 144.6 L1360.5 144.1 L1361.5 144.9 L1362.5 144.3 L1363.5 145.0 L1364.5 145.0 L1365.5 144.7 L1366.5 144.3 L1367.5 145.1 L1368.5 144.7 L1369.5 144.9 L1370.5 145.0 L1371.5 144.9 L1372.5 145.2 L1373.5 145.5 L1374.5 146.1 L1375.5 146.2 L1376.5 146.0 L1377.5 145.8 L1378.5 145.6 L1379.5 145.9 L1380.5 146.2 L1381.5 146.0 L1382.5 146.8 L1383.5 146.8 L1384.5 147.1 L1385.5 147.0 L1386.5 148.6 L1387.5 150.7 L1388.5 152.8 L1389.0 154.4 L1389.0 157.4 L1388.5 159.0 L1387.5 161.5 L1386.5 163.8 L1385.5 164.5 L1384.5 164.7 L1383.5 165.3 L1382.5 164.8 L1381.5 165.4 L1380.5 165.6 L1379.5 165.4 L1378.5 166.4 L1377.5 166.2 L1376.5 166.0 L1375.5 166.4 L1374.5 166.6 L1373.5 166.3 L1372.5 166.1 L1371.5 167.2 L1370.5 166.9 L1369.5 166.9 L1368.5 167.5 L1367.5 167.1 L1366.5 167.0 L1365.5 167.1 L1364.5 167.5 L1363.5 167.8 L1362.5 167.7 L1361.5 167.2 L1360.5 167.8 L1359.5 167.6 L1358.5 168.2 L1357.5 167.9 L1356.5 167.8 L1355.5 168.0 L1354.5 168.1 L1353.5 169.0 L1352.5 168.8 L1351.5 168.5 L1350.5 168.5 L1349.5 168.5 L1348.5 168.8 L1347.5 169.3 L1346.5 169.9 L1345.5 169.8 L1344.5 169.9 L1343.5 169.3 L1342.5 169.8 L1341.5 170.0 L1340.5 169.9 L1339.5 169.0 L1338.5 169.7 L1337.5 169.8 L1336.5 169.3 L1335.5 169.6 L1334.5 169.1 L1333.5 170.0 L1332.5 169.5 L1331.5 169.3 L1330.5 169.6 L1329.5 170.0 L1328.5 169.4 L1327.5 169.5 L1326.5 169.3 L1325.5 169.0 L1324.5 169.5 L1323.5 169.1 L1322.5 169.1 L1321.5 169.9 L1320.5 169.2 L1319.5 170.0 L1318.5 169.1 L1317.5 170.0 L1316.5 169.9 L1315.5 170.2 L1314.5 169.8 L1313.5 169.2 L1312.5 169.5 L1311.5 170.3 L1310.5 170.2 L1309.5 169.5 L1308.5 169.8 L1307.5 169.9 L1306.5 170.0 L1305.5 169.9 L1304.5 170.1 L1303.5 169.4 L1302.5 169.3 L1301.5 169.9 L1300.5 169.9 L1299.5 170.3 L1298.5 170.3 L1297.5 170.1 L1296.5 169.7 L1295.5 169.9 L1294.5 169.9 L1293.5 169.4 L1292.5 169.4 L1291.5 169.7 L1290.5 169.6 L1289.5 169.4 L1288.5 170.4 L1287.5 170.5 L1286.5 170.3 L1285.5 169.8 L1284.5 169.3 L1283.5 169.5 L1282.5 169.6 L1281.5 170.4 L1280.5 169.5 L1279.5 169.5 L1278.5 170.3 L1277.5 170.3 L1276.5 169.5 L1275.5 169.1 L1274.5 168.4 L1273.5 166.8 L1272.5 165.9 L1271.5 167.0 L1270.5 166.3 L1269.5 166.7 L1268.5 165.9 L1267.5 166.7 L1266.5 167.0 L1265.5 167.1 L1264.5 166.4 L1263.5 166.4 L1262.5 166.0 L1261.5 167.2 L1260.5 167.6 L1259.5 169.8 L1258.5 170.1 L1257.5 171.3 L1256.5 171.1 L1255.5 170.8 L1254.5 170.9 L1253.5 170.6 L1252.5 171.0 L1251.5 170.9 L1250.5 170.5 L1249.5 171.2 L1248.5 171.2 L1247.5 171.0 L1246.5 170.5 L1245.5 170.8 L1244.5 171.4 L1243.5 170.9 L1242.5 170.9 L1241.5 171.2 L1240.5 171.3 L1239.5 170.7 L1238.5 171.1 L1237.5 171.5 L1236.5 171.0 L1235.5 170.9 L1234.5 171.2 L1233.5 171.0 L1232.5 171.1 L1231.5 170.8 L1230.5 171.3 L1229.5 171.5 L1228.5 171.2 L1227.5 170.6 L1226.5 170.8 L1225.5 170.9 L1224.5 171.0 L1223.5 170.8 L1222.5 170.9 L1221.5 170.5 L1220.5 170.5 L1219.5 171.6 L1218.5 170.7 L1217.5 170.4 L1216.5 170.6 L1215.5 168.9 L1214.5 169.0 L1213.5 167.9 L1212.5 166.6 L1211.5 166.5 L1210.5 166.9 L1209.5 166.9 L1208.5 166.9 L1207.5 166.6 L1206.5 167.0 L1205.5 167.4 L1204.5 167.4 L1203.5 166.9 L1202.5 167.2 L1201.5 167.6 L1200.5 166.7 L1199.5 167.5 L1198.5 167.4 L1197.5 167.4 L1196.5 166.5 L1195.5 166.8 L1194.5 166.5 L1193.5 166.5 L1192.5 167.3 L1191.5 167.1 L1190.5 166.7 L1189.5 166.9 L1188.5 167.4 L1187.5 167.5 L1186.5 167.8 L1185.5 167.7 L1184.5 168.2 L1183.5 168.4 L1182.5 169.8 L1181.5 169.9 L1180.5 168.8 L1179.5 169.9 L1178.5 169.4 L1177.5 169.7 L1176.5 169.9 L1175.5 169.1 L1174.5 169.8 L1173.5 169.7 L1172.5 169.4 L1171.5 169.1 L1170.5 168.8 L1169.5 169.6 L1168.5 168.9 L1167.5 169.7 L1166.5 169.8 L1165.5 168.9 L1164.5 169.3 L1163.5 169.0 L1162.5 169.3 L1161.5 169.5 L1160.5 169.1 L1159.5 169.4 L1158.5 169.1 L1157.5 168.8 L1156.5 168.7 L1155.5 169.0 L1154.5 169.7 L1153.5 169.2 L1152.5 169.1 L1151.5 168.8 L1150.5 169.6 L1149.5 169.9 L1148.5 169.4 L1147.5 169.2 L1146.5 169.7 L1145.5 168.8 L1144.5 169.0 L1143.5 169.4 L1142.5 168.8 L1141.5 169.5 L1140.5 169.1 L1139.5 169.6 L1138.5 168.9 L1137.5 169.3 L1136.5 169.8 L1135.5 169.9 L1134.5 169.7 L1133.5 169.2 L1132.5 169.8 L1131.5 169.7 L1130.5 169.6 L1129.5 169.5 L1128.5 169.9 L1127.5 169.3 L1126.5 169.6 L1125.5 169.3 L1124.5 169.6 L1123.5 168.9 L1122.5 169.0 L1121.5 168.8 L1120.5 169.5 L1119.5 169.5 L1118.5 168.9 L1117.5 169.8 L1116.5 169.4 L1115.5 169.3 L1114.5 169.3Z" fill="#1552cc"/><path d="M1114.5 147.2 L1115.5 147.3 L1116.5 147.3 L1117.5 147.2 L1118.5 147.5 L1119.5 147.4 L1120.5 147.3 L1121.5 146.9 L1122.5 147.2 L1123.5 147.1 L1124.5 147.0 L1125.5 147.5 L1126.5 147.2 L1127.5 147.5 L1128.5 147.3 L1129.5 147.3 L1130.5 147.3 L1131.5 147.0 L1132.5 147.3 L1133.5 146.9 L1134.5 147.4 L1135.5 147.5 L1136.5 147.0 L1137.5 147.0 L1138.5 147.0 L1139.5 147.0 L1140.5 147.0 L1141.5 147.3 L1142.5 147.2 L1143.5 147.4 L1144.5 147.2 L1145.5 147.4 L1146.5 147.2 L1147.5 147.3 L1148.5 147.1 L1149.5 147.1 L1150.5 146.9 L1151.5 147.5 L1152.5 147.4 L1153.5 147.4 L1154.5 147.2 L1155.5 147.2 L1156.5 147.1 L1157.5 147.3 L1158.5 146.9 L1159.5 146.9 L1160.5 147.3 L1161.5 147.3 L1162.5 147.0 L1163.5 147.2 L1164.5 147.0 L1165.5 147.4 L1166.5 147.2 L1167.5 147.4 L1168.5 146.9 L1169.5 147.1 L1170.5 147.0 L1171.5 146.9 L1172.5 147.0 L1173.5 147.5 L1174.5 147.5 L1175.5 146.9 L1176.5 147.1 L1177.5 147.2 L1178.5 147.4 L1179.5 147.2 L1180.5 147.0 L1181.5 147.4 L1182.5 147.5 L1183.5 147.4 L1184.5 147.7 L1185.5 148.8 L1186.5 149.0 L1187.5 149.1 L1188.5 149.6 L1189.5 149.6 L1190.5 149.3 L1191.5 149.7 L1192.5 149.1 L1193.5 149.5 L1194.5 149.6 L1195.5 149.2 L1196.5 149.3 L1197.5 149.3 L1198.5 149.2 L1199.5 149.6 L1200.5 149.3 L1201.5 149.6 L1202.5 149.2 L1203.5 149.5 L1204.5 149.4 L1205.5 149.4 L1206.5 149.5 L1207.5 149.4 L1208.5 149.3 L1209.5 149.4 L1210.5 149.4 L1211.5 149.7 L1212.5 149.5 L1213.5 148.7 L1214.5 147.9 L1215.5 147.1 L1216.5 146.0 L1217.5 145.3 L1218.5 145.6 L1219.5 145.3 L1220.5 145.2 L1221.5 145.8 L1222.5 145.8 L1223.5 145.4 L1224.5 145.5 L1225.5 145.7 L1226.5 145.3 L1227.5 145.4 L1228.5 145.7 L1229.5 145.8 L1230.5 145.5 L1231.5 145.5 L1232.5 145.5 L1233.5 145.6 L1234.5 145.2 L1235.5 145.8 L1236.5 145.7 L1237.5 145.5 L1238.5 145.2 L1239.5 145.7 L1240.5 145.4 L1241.5 145.4 L1242.5 145.8 L1243.5 145.3 L1244.5 145.8 L1245.5 145.3 L1246.5 145.7 L1247.5 145.2 L1248.5 145.4 L1249.5 145.7 L1250.5 145.3 L1251.5 145.7 L1252.5 145.4 L1253.5 145.8 L1254.5 145.2 L1255.5 145.3 L1256.5 145.5 L1257.5 145.6 L1258.5 146.1 L1259.5 147.0 L1260.5 147.9 L1261.5 149.5 L1262.5 149.8 L1263.5 149.8 L1264.5 149.7 L1265.5 149.5 L1266.5 149.6 L1267.5 149.9 L1268.5 149.7 L1269.5 149.9 L1270.5 149.7 L1271.5 150.0 L1272.5 149.7 L1273.5 149.5 L1274.5 148.7 L1275.5 147.9 L1276.5 146.9 L1277.5 146.3 L1278.5 146.4 L1279.5 146.5 L1280.5 146.5 L1281.5 146.4 L1282.5 146.7 L1283.5 146.5 L1284.5 146.4 L1285.5 146.6 L1286.5 146.9 L1287.5 146.9 L1288.5 146.3 L1289.5 146.8 L1290.5 146.7 L1291.5 146.5 L1292.5 146.5 L1293.5 146.4 L1294.5 146.5 L1295.5 146.8 L1296.5 146.7 L1297.5 146.4 L1298.5 146.7 L1299.5 146.4 L1300.5 146.8 L1301.5 146.7 L1302.5 146.8 L1303.5 146.6 L1304.5 146.4 L1305.5 146.4 L1306.5 146.7 L1307.5 146.8 L1308.5 146.7 L1309.5 146.6 L1310.5 146.9 L1311.5 147.0 L1312.5 146.5 L1313.5 146.5 L1314.5 146.8 L1315.5 146.7 L1316.5 146.6 L1317.5 146.9 L1318.5 146.6 L1319.5 146.7 L1320.5 147.1 L1321.5 146.9 L1322.5 146.6 L1323.5 146.8 L1324.5 146.8 L1325.5 147.1 L1326.5 146.6 L1327.5 146.7 L1328.5 146.7 L1329.5 146.7 L1330.5 146.8 L1331.5 147.1 L1332.5 147.0 L1333.5 146.7 L1334.5 146.6 L1335.5 147.2 L1336.5 147.2 L1337.5 147.0 L1338.5 146.7 L1339.5 146.9 L1340.5 147.0 L1341.5 147.1 L1342.5 147.0 L1343.5 147.2 L1344.5 146.8 L1345.5 147.3 L1346.5 147.3 L1347.5 147.5 L1348.5 147.5 L1349.5 147.4 L1350.5 147.5 L1351.5 147.6 L1352.5 147.8 L1353.5 147.9 L1354.5 147.8 L1355.5 147.8 L1356.5 147.9 L1357.5 147.8 L1358.5 148.2 L1359.5 148.2 L1360.5 148.2 L1361.5 148.3 L1362.5 148.5 L1363.5 148.4 L1364.5 148.7 L1365.5 149.0 L1366.5 149.0 L1367.5 148.9 L1368.5 148.8 L1369.5 149.3 L1370.5 149.5 L1371.5 149.4 L1372.5 149.3 L1373.5 149.7 L1374.5 149.6 L1375.5 150.1 L1376.5 149.7 L1377.5 150.0 L1378.5 150.0 L1379.5 150.4 L1380.5 150.4 L1381.5 150.7 L1382.5 150.5 L1383.5 150.5 L1384.5 150.6 L1385.5 150.7 L1386.5 152.4 L1387.5 154.3 L1388.5 156.8 L1389.0 158.0 L1389.0 153.8 L1388.5 155.1 L1387.5 157.6 L1386.5 160.1 L1385.5 160.8 L1384.5 161.4 L1383.5 161.6 L1382.5 161.4 L1381.5 161.3 L1380.5 161.5 L1379.5 161.6 L1378.5 162.0 L1377.5 161.7 L1376.5 162.0 L1375.5 162.1 L1374.5 162.2 L1373.5 162.4 L1372.5 162.6 L1371.5 162.4 L1370.5 162.8 L1369.5 162.6 L1368.5 162.8 L1367.5 162.9 L1366.5 163.0 L1365.5 163.0 L1364.5 163.1 L1363.5 163.5 L1362.5 163.5 L1361.5 163.5 L1360.5 163.6 L1359.5 163.6 L1358.5 163.7 L1357.5 163.8 L1356.5 163.9 L1355.5 163.8 L1354.5 164.1 L1353.5 164.1 L1352.5 164.6 L1351.5 164.5 L1350.5 164.5 L1349.5 164.8 L1348.5 164.6 L1347.5 164.9 L1346.5 165.1 L1345.5 165.2 L1344.5 165.0 L1343.5 165.0 L1342.5 164.8 L1341.5 165.0 L1340.5 165.3 L1339.5 165.0 L1338.5 165.1 L1337.5 165.0 L1336.5 165.3 L1335.5 165.0 L1334.5 164.8 L1333.5 165.0 L1332.5 165.3 L1331.5 165.0 L1330.5 165.2 L1329.5 165.3 L1328.5 165.1 L1327.5 165.4 L1326.5 165.3 L1325.5 165.3 L1324.5 165.3 L1323.5 164.9 L1322.5 165.0 L1321.5 165.2 L1320.5 165.4 L1319.5 164.9 L1318.5 165.3 L1317.5 164.9 L1316.5 165.4 L1315.5 165.2 L1314.5 165.2 L1313.5 165.3 L1312.5 165.0 L1311.5 165.5 L1310.5 165.5 L1309.5 165.2 L1308.5 165.5 L1307.5 165.0 L1306.5 165.0 L1305.5 165.2 L1304.5 165.5 L1303.5 165.2 L1302.5 165.1 L1301.5 165.3 L1300.5 165.4 L1299.5 165.1 L1298.5 165.4 L1297.5 165.5 L1296.5 165.1 L1295.5 165.3 L1294.5 165.6 L1293.5 165.4 L1292.5 165.2 L1291.5 165.5 L1290.5 165.6 L1289.5 165.6 L1288.5 165.5 L1287.5 165.7 L1286.5 165.3 L1285.5 165.5 L1284.5 165.4 L1283.5 165.5 L1282.5 165.7 L1281.5 165.2 L1280.5 165.3 L1279.5 165.6 L1278.5 165.6 L1277.5 165.2 L1276.5 165.3 L1275.5 164.0 L1274.5 163.6 L1273.5 162.9 L1272.5 161.9 L1271.5 162.2 L1270.5 162.0 L1269.5 162.2 L1268.5 162.2 L1267.5 162.3 L1266.5 162.2 L1265.5 162.2 L1264.5 162.0 L1263.5 161.9 L1262.5 162.5 L1261.5 163.0 L1260.5 164.0 L1259.5 165.0 L1258.5 165.7 L1257.5 166.3 L1256.5 166.3 L1255.5 166.3 L1254.5 166.6 L1253.5 166.5 L1252.5 166.2 L1251.5 166.7 L1250.5 166.4 L1249.5 166.5 L1248.5 166.7 L1247.5 166.7 L1246.5 166.6 L1245.5 166.5 L1244.5 166.3 L1243.5 166.6 L1242.5 166.5 L1241.5 166.5 L1240.5 166.6 L1239.5 166.2 L1238.5 166.7 L1237.5 166.5 L1236.5 166.6 L1235.5 166.4 L1234.5 166.5 L1233.5 166.5 L1232.5 166.5 L1231.5 166.8 L1230.5 166.8 L1229.5 166.6 L1228.5 166.4 L1227.5 166.3 L1226.5 166.6 L1225.5 166.4 L1224.5 166.6 L1223.5 166.4 L1222.5 166.7 L1221.5 166.6 L1220.5 166.3 L1219.5 166.7 L1218.5 166.4 L1217.5 166.5 L1216.5 165.8 L1215.5 165.0 L1214.5 163.9 L1213.5 163.1 L1212.5 162.7 L1211.5 162.6 L1210.5 162.7 L1209.5 162.5 L1208.5 162.4 L1207.5 162.9 L1206.5 162.6 L1205.5 162.8 L1204.5 162.4 L1203.5 162.9 L1202.5 162.6 L1201.5 162.5 L1200.5 162.3 L1199.5 162.4 L1198.5 162.6 L1197.5 162.7 L1196.5 162.3 L1195.5 162.6 L1194.5 162.8 L1193.5 162.8 L1192.5 162.5 L1191.5 162.3 L1190.5 162.8 L1189.5 162.7 L1188.5 162.4 L1187.5 162.7 L1186.5 162.9 L1185.5 163.6 L1184.5 164.2 L1183.5 164.8 L1182.5 164.7 L1181.5 164.6 L1180.5 164.9 L1179.5 164.7 L1178.5 164.8 L1177.5 164.8 L1176.5 164.5 L1175.5 164.7 L1174.5 164.7 L1173.5 164.6 L1172.5 164.6 L1171.5 164.6 L1170.5 164.8 L1169.5 164.6 L1168.5 164.5 L1167.5 164.7 L1166.5 165.0 L1165.5 164.8 L1164.5 164.8 L1163.5 165.1 L1162.5 164.6 L1161.5 164.9 L1160.5 164.8 L1159.5 164.5 L1158.5 165.1 L1157.5 165.0 L1156.5 164.8 L1155.5 164.6 L1154.5 164.8 L1153.5 164.8 L1152.5 164.6 L1151.5 165.0 L1150.5 164.9 L1149.5 165.0 L1148.5 164.8 L1147.5 165.1 L1146.5 164.6 L1145.5 164.8 L1144.5 165.0 L1143.5 165.0 L1142.5 164.5 L1141.5 164.6 L1140.5 164.8 L1139.5 164.8 L1138.5 164.7 L1137.5 164.6 L1136.5 164.9 L1135.5 164.7 L1134.5 165.0 L1133.5 164.6 L1132.5 164.8 L1131.5 164.6 L1130.5 164.7 L1129.5 165.1 L1128.5 164.9 L1127.5 164.9 L1126.5 164.8 L1125.5 165.1 L1124.5 164.7 L1123.5 164.9 L1122.5 165.1 L1121.5 164.8 L1120.5 164.7 L1119.5 164.7 L1118.5 164.6 L1117.5 165.0 L1116.5 164.9 L1115.5 164.7 L1114.5 165.1Z" fill="#20985e"/><path d="M1114.5 150.0 L1115.5 150.1 L1116.5 149.8 L1117.5 149.9 L1118.5 149.9 L1119.5 150.0 L1120.5 149.8 L1121.5 150.1 L1122.5 149.8 L1123.5 150.0 L1124.5 149.9 L1125.5 150.0 L1126.5 150.1 L1127.5 149.7 L1128.5 150.0 L1129.5 149.5 L1130.5 149.8 L1131.5 149.8 L1132.5 149.6 L1133.5 149.9 L1134.5 150.0 L1135.5 149.6 L1136.5 149.7 L1137.5 150.0 L1138.5 149.7 L1139.5 149.8 L1140.5 150.1 L1141.5 149.7 L1142.5 149.5 L1143.5 149.8 L1144.5 149.5 L1145.5 149.6 L1146.5 149.6 L1147.5 150.0 L1148.5 150.1 L1149.5 150.0 L1150.5 150.0 L1151.5 149.7 L1152.5 149.5 L1153.5 149.7 L1154.5 149.6 L1155.5 149.6 L1156.5 149.9 L1157.5 149.5 L1158.5 149.9 L1159.5 149.7 L1160.5 149.6 L1161.5 149.9 L1162.5 149.7 L1163.5 149.6 L1164.5 150.1 L1165.5 150.0 L1166.5 150.0 L1167.5 150.0 L1168.5 149.6 L1169.5 149.9 L1170.5 149.8 L1171.5 149.8 L1172.5 149.8 L1173.5 149.7 L1174.5 149.7 L1175.5 149.6 L1176.5 149.9 L1177.5 150.0 L1178.5 149.6 L1179.5 150.0 L1180.5 149.6 L1181.5 149.6 L1182.5 149.9 L1183.5 149.8 L1184.5 150.2 L1185.5 150.3 L1186.5 150.6 L1187.5 150.4 L1188.5 150.4 L1189.5 150.8 L1190.5 150.6 L1191.5 150.2 L1192.5 150.8 L1193.5 150.7 L1194.5 150.5 L1195.5 150.6 L1196.5 150.7 L1197.5 150.3 L1198.5 150.7 L1199.5 150.7 L1200.5 150.4 L1201.5 150.5 L1202.5 150.4 L1203.5 150.3 L1204.5 150.7 L1205.5 150.4 L1206.5 150.8 L1207.5 150.6 L1208.5 150.3 L1209.5 150.4 L1210.5 150.6 L1211.5 150.6 L1212.5 150.5 L1213.5 150.5 L1214.5 150.1 L1215.5 149.4 L1216.5 149.3 L1217.5 149.3 L1218.5 149.2 L1219.5 148.8 L1220.5 148.8 L1221.5 149.2 L1222.5 149.2 L1223.5 149.1 L1224.5 149.0 L1225.5 148.8 L1226.5 148.7 L1227.5 149.0 L1228.5 149.2 L1229.5 149.2 L1230.5 148.9 L1231.5 148.8 L1232.5 148.8 L1233.5 148.8 L1234.5 148.9 L1235.5 148.9 L1236.5 148.9 L1237.5 149.2 L1238.5 148.8 L1239.5 148.9 L1240.5 148.9 L1241.5 149.0 L1242.5 148.9 L1243.5 149.0 L1244.5 148.9 L1245.5 149.2 L1246.5 148.8 L1247.5 148.8 L1248.5 149.1 L1249.5 149.3 L1250.5 148.9 L1251.5 149.0 L1252.5 148.9 L1253.5 148.8 L1254.5 149.3 L1255.5 148.8 L1256.5 148.9 L1257.5 148.8 L1258.5 149.0 L1259.5 149.4 L1260.5 150.0 L1261.5 150.1 L1262.5 150.2 L1263.5 150.4 L1264.5 150.6 L1265.5 150.5 L1266.5 150.6 L1267.5 150.3 L1268.5 150.4 L1269.5 150.5 L1270.5 150.8 L1271.5 150.2 L1272.5 150.5 L1273.5 150.5 L1274.5 150.2 L1275.5 149.4 L1276.5 149.3 L1277.5 149.1 L1278.5 148.7 L1279.5 148.9 L1280.5 149.3 L1281.5 149.2 L1282.5 149.2 L1283.5 148.9 L1284.5 148.9 L1285.5 149.0 L1286.5 148.8 L1287.5 149.0 L1288.5 149.1 L1289.5 149.1 L1290.5 149.0 L1291.5 149.2 L1292.5 149.3 L1293.5 149.1 L1294.5 148.8 L1295.5 148.9 L1296.5 149.2 L1297.5 148.8 L1298.5 149.1 L1299.5 149.2 L1300.5 149.2 L1301.5 149.2 L1302.5 148.8 L1303.5 149.3 L1304.5 148.9 L1305.5 148.9 L1306.5 149.0 L1307.5 148.9 L1308.5 149.4 L1309.5 149.2 L1310.5 149.2 L1311.5 149.1 L1312.5 148.9 L1313.5 149.2 L1314.5 149.3 L1315.5 148.9 L1316.5 149.2 L1317.5 148.9 L1318.5 148.8 L1319.5 149.4 L1320.5 149.1 L1321.5 149.3 L1322.5 149.0 L1323.5 149.4 L1324.5 149.4 L1325.5 149.4 L1326.5 148.9 L1327.5 149.0 L1328.5 149.1 L1329.5 149.0 L1330.5 149.4 L1331.5 149.3 L1332.5 149.0 L1333.5 149.4 L1334.5 149.4 L1335.5 149.1 L1336.5 149.2 L1337.5 149.0 L1338.5 149.1 L1339.5 149.4 L1340.5 149.0 L1341.5 149.1 L1342.5 149.0 L1343.5 149.3 L1344.5 149.4 L1345.5 149.2 L1346.5 149.1 L1347.5 149.3 L1348.5 149.3 L1349.5 149.4 L1350.5 149.2 L1351.5 149.3 L1352.5 149.8 L1353.5 149.7 L1354.5 149.6 L1355.5 149.4 L1356.5 149.8 L1357.5 149.5 L1358.5 149.7 L1359.5 149.9 L1360.5 149.7 L1361.5 150.1 L1362.5 150.0 L1363.5 150.0 L1364.5 149.8 L1365.5 149.9 L1366.5 150.2 L1367.5 150.4 L1368.5 150.4 L1369.5 150.5 L1370.5 150.4 L1371.5 150.3 L1372.5 150.7 L1373.5 150.3 L1374.5 150.6 L1375.5 150.4 L1376.5 150.3 L1377.5 150.6 L1378.5 150.8 L1379.5 150.4 L1380.5 150.7 L1381.5 150.5 L1382.5 150.7 L1383.5 151.1 L1384.5 151.2 L1385.5 151.2 L1386.5 151.9 L1387.5 152.8 L1388.5 154.1 L1389.0 155.2 L1389.0 156.9 L1388.5 157.5 L1387.5 158.9 L1386.5 160.6 L1385.5 160.8 L1384.5 161.1 L1383.5 161.0 L1382.5 161.3 L1381.5 161.3 L1380.5 161.0 L1379.5 161.1 L1378.5 161.3 L1377.5 161.1 L1376.5 161.5 L1375.5 161.2 L1374.5 161.4 L1373.5 161.8 L1372.5 161.8 L1371.5 161.5 L1370.5 161.5 L1369.5 161.8 L1368.5 161.8 L1367.5 161.7 L1366.5 161.6 L1365.5 161.7 L1364.5 162.2 L1363.5 162.1 L1362.5 161.9 L1361.5 162.3 L1360.5 162.0 L1359.5 162.4 L1358.5 162.5 L1357.5 162.0 L1356.5 162.4 L1355.5 162.5 L1354.5 162.3 L1353.5 162.3 L1352.5 162.3 L1351.5 162.6 L1350.5 162.6 L1349.5 162.7 L1348.5 162.6 L1347.5 162.7 L1346.5 162.6 L1345.5 163.0 L1344.5 162.5 L1343.5 162.8 L1342.5 162.8 L1341.5 162.8 L1340.5 162.8 L1339.5 163.0 L1338.5 162.9 L1337.5 162.9 L1336.5 162.7 L1335.5 162.7 L1334.5 162.9 L1333.5 162.9 L1332.5 162.6 L1331.5 163.1 L1330.5 163.1 L1329.5 162.6 L1328.5 162.7 L1327.5 163.1 L1326.5 162.6 L1325.5 163.0 L1324.5 162.6 L1323.5 162.8 L1322.5 162.7 L1321.5 162.9 L1320.5 162.6 L1319.5 162.7 L1318.5 162.8 L1317.5 163.2 L1316.5 163.1 L1315.5 162.7 L1314.5 163.1 L1313.5 162.7 L1312.5 162.8 L1311.5 163.0 L1310.5 162.9 L1309.5 163.0 L1308.5 162.9 L1307.5 163.0 L1306.5 163.1 L1305.5 162.7 L1304.5 162.9 L1303.5 163.2 L1302.5 163.0 L1301.5 163.0 L1300.5 162.9 L1299.5 163.2 L1298.5 163.2 L1297.5 163.0 L1296.5 163.0 L1295.5 163.1 L1294.5 162.7 L1293.5 162.7 L1292.5 162.7 L1291.5 162.9 L1290.5 162.7 L1289.5 163.1 L1288.5 162.7 L1287.5 163.1 L1286.5 163.1 L1285.5 162.7 L1284.5 162.9 L1283.5 162.8 L1282.5 163.3 L1281.5 163.2 L1280.5 162.8 L1279.5 162.8 L1278.5 163.0 L1277.5 163.0 L1276.5 163.1 L1275.5 162.7 L1274.5 162.2 L1273.5 161.9 L1272.5 161.2 L1271.5 161.3 L1270.5 161.5 L1269.5 161.6 L1268.5 161.5 L1267.5 161.6 L1266.5 161.7 L1265.5 161.3 L1264.5 161.5 L1263.5 161.6 L1262.5 161.5 L1261.5 162.0 L1260.5 162.3 L1259.5 162.5 L1258.5 162.7 L1257.5 162.7 L1256.5 163.2 L1255.5 162.9 L1254.5 163.2 L1253.5 163.1 L1252.5 162.9 L1251.5 163.0 L1250.5 162.8 L1249.5 163.3 L1248.5 163.0 L1247.5 163.1 L1246.5 162.9 L1245.5 162.8 L1244.5 162.9 L1243.5 162.9 L1242.5 162.7 L1241.5 163.0 L1240.5 162.9 L1239.5 163.0 L1238.5 162.7 L1237.5 162.9 L1236.5 163.1 L1235.5 162.9 L1234.5 162.8 L1233.5 163.0 L1232.5 162.8 L1231.5 163.0 L1230.5 162.9 L1229.5 162.8 L1228.5 162.9 L1227.5 163.0 L1226.5 163.2 L1225.5 162.8 L1224.5 163.3 L1223.5 163.1 L1222.5 163.0 L1221.5 162.9 L1220.5 162.7 L1219.5 162.8 L1218.5 162.7 L1217.5 163.3 L1216.5 163.1 L1215.5 162.7 L1214.5 162.0 L1213.5 161.9 L1212.5 161.6 L1211.5 161.5 L1210.5 161.6 L1209.5 161.7 L1208.5 161.5 L1207.5 161.5 L1206.5 161.5 L1205.5 161.7 L1204.5 161.3 L1203.5 161.6 L1202.5 161.6 L1201.5 161.4 L1200.5 161.3 L1199.5 161.5 L1198.5 161.6 L1197.5 161.5 L1196.5 161.4 L1195.5 161.5 L1194.5 161.2 L1193.5 161.7 L1192.5 161.3 L1191.5 161.3 L1190.5 161.5 L1189.5 161.8 L1188.5 161.5 L1187.5 161.4 L1186.5 161.6 L1185.5 161.7 L1184.5 162.2 L1183.5 162.1 L1182.5 162.2 L1181.5 162.0 L1180.5 162.2 L1179.5 162.3 L1178.5 162.4 L1177.5 162.2 L1176.5 162.0 L1175.5 162.2 L1174.5 162.5 L1173.5 162.0 L1172.5 162.1 L1171.5 162.2 L1170.5 162.5 L1169.5 162.3 L1168.5 162.3 L1167.5 162.0 L1166.5 162.4 L1165.5 162.4 L1164.5 162.2 L1163.5 161.9 L1162.5 162.2 L1161.5 162.4 L1160.5 162.2 L1159.5 162.4 L1158.5 162.4 L1157.5 162.5 L1156.5 162.4 L1155.5 162.3 L1154.5 162.4 L1153.5 162.1 L1152.5 162.1 L1151.5 162.3 L1150.5 162.3 L1149.5 162.3 L1148.5 162.2 L1147.5 162.1 L1146.5 162.2 L1145.5 161.9 L1144.5 162.2 L1143.5 161.9 L1142.5 162.3 L1141.5 162.3 L1140.5 162.0 L1139.5 161.9 L1138.5 162.0 L1137.5 161.9 L1136.5 162.2 L1135.5 162.1 L1134.5 162.5 L1133.5 162.1 L1132.5 162.2 L1131.5 161.9 L1130.5 162.2 L1129.5 162.1 L1128.5 162.2 L1127.5 162.2 L1126.5 161.9 L1125.5 162.3 L1124.5 162.4 L1123.5 162.0 L1122.5 162.4 L1121.5 162.2 L1120.5 162.1 L1119.5 162.3 L1118.5 162.4 L1117.5 162.2 L1116.5 162.4 L1115.5 162.3 L1114.5 161.8Z" fill="#b3b3a3"/></g>
<rect x="1042" y="90.8" width="30" height="20.2" fill="#48431c"/>
<rect x="1072" y="90.8" width="42" height="20.2" fill="#5a5118"/>
<rect x="1114.00" y="90.8" width="1.62" height="20.200000000000003" fill="#6a6500"/><rect x="1115.62" y="90.8" width="14.69" height="20.200000000000003" fill="#6b5600"/><rect x="1130.31" y="90.8" width="14.69" height="20.200000000000003" fill="#6a6500"/><rect x="1145.00" y="90.8" width="14.69" height="20.200000000000003" fill="#6b5600"/><rect x="1159.70" y="90.8" width="14.69" height="20.200000000000003" fill="#6a6500"/><rect x="1174.39" y="90.8" width="14.69" height="20.200000000000003" fill="#6b5600"/><rect x="1189.08" y="90.8" width="14.69" height="20.200000000000003" fill="#6a6500"/><rect x="1203.78" y="90.8" width="14.69" height="20.200000000000003" fill="#6b5600"/><rect x="1218.47" y="90.8" width="14.69" height="20.200000000000003" fill="#6a6500"/><rect x="1233.16" y="90.8" width="14.69" height="20.200000000000003" fill="#6b5600"/><rect x="1247.86" y="90.8" width="14.69" height="20.200000000000003" fill="#6a6500"/><rect x="1262.55" y="90.8" width="14.69" height="20.200000000000003" fill="#6b5600"/><rect x="1277.25" y="90.8" width="14.69" height="20.200000000000003" fill="#6a6500"/><rect x="1291.94" y="90.8" width="14.69" height="20.200000000000003" fill="#6b5600"/><rect x="1306.63" y="90.8" width="14.69" height="20.200000000000003" fill="#6a6500"/><rect x="1321.33" y="90.8" width="14.69" height="20.200000000000003" fill="#6b5600"/><rect x="1336.02" y="90.8" width="14.69" height="20.200000000000003" fill="#6a6500"/><rect x="1350.71" y="90.8" width="14.69" height="20.200000000000003" fill="#6b5600"/><rect x="1365.41" y="90.8" width="14.69" height="20.200000000000003" fill="#6a6500"/><rect x="1380.10" y="90.8" width="14.69" height="20.200000000000003" fill="#6b5600"/><rect x="1394.79" y="90.8" width="1.21" height="20.200000000000003" fill="#6a6500"/>
<rect x="1042" y="199.5" width="354" height="1.6" fill="#4a4512"/>
<clipPath id="c313"><rect x="147" y="200" width="130" height="26"/></clipPath>
<text stroke="#fff" stroke-width="0.32" x="148.4" y="217" font-size="14.85" fill="#fff" clip-path="url(#c313)">GHETTO TECHNO (313TRO MIX) - FTP</text>
<text stroke="#fff" stroke-width="0.32" x="254.7" y="104.4" font-size="14.85" fill="#fff">Underground - Viscid</text>
<clipPath id="corg"><rect x="880" y="200" width="229.5" height="26"/></clipPath>
<text stroke="#fff" stroke-width="0.32" x="901" y="217" font-size="14.85" fill="#fff" clip-path="url(#corg)">GHETTO TECHNO (ORIGINAL MIX) - Toni Moralez</text>
<text stroke="#fff" stroke-width="0.32" x="1079" y="104.4" font-size="14.85" fill="#fff">PONY (313 MIXX) - FTP</text>
<path d="M147 225.1 L246 225.1 C262 225.1 277 238 277 262" fill="none" stroke="#ededed" stroke-width="2.2"/>
<path d="M248 150 C248 126 262 112.8 277 112.8 L893 112.8 C908 112.8 923 126 923 150" fill="none" stroke="#ededed" stroke-width="2.2"/>
<path d="M895 262 C895 238 909 225.1 924 225.1 L1072 225.1 L1096 227.5 L1102 229 L1114 225" fill="none" stroke="#ededed" stroke-width="2.2"/>
<path d="M1073 200 L1096 127 L1114 127 L1114 112.8 L1397 112.8" fill="none" stroke="#ededed" stroke-width="2"/>
<path d="M1072.5 109 L1072.5 201" stroke="#1ab4dc" stroke-width="2.2" fill="none"/>
<path d="M1115 154.4 L1397 154.4" stroke="#c49a10" stroke-width="1.1" fill="none"/>
<path d="M1073 111 L1114.5 145.5 L1114.5 156.4 L1397 156.4" stroke="#1ab4dc" stroke-width="2.2" fill="none"/>
<path d="M1073 200 L1115 160 L1115 157" stroke="#f0b400" stroke-width="2.2" fill="none"/>
<path d="M923 268.6 L1071 268.6 L1102 253 L1112 235" stroke="#1ab4dc" stroke-width="2" fill="none"/>
<rect x="1113.4" y="221.5" width="2.2" height="94.5" fill="#1ab4dc"/>
<path d="M1071 268.6 L1115 268.6" stroke="#f0b400" stroke-width="2.2"/>
<rect x="1086.4" y="231" width="2.6" height="73" fill="#b8a6e4"/>
<path d="M1081.5 223.5 L1093.5 223.5 L1087.7 234 Z" fill="#7f7ef0"/>
<path d="M1081.5 313 L1093.5 313 L1087.7 302.5 Z" fill="#7f7ef0"/>
<rect x="248.6" y="80" width="27.2" height="235.6" rx="7" fill="none" stroke="#3d4ac8" stroke-width="2.8"/><path d="M247.2 90 L247.2 74.6 Q247.2 66.6 255.2 66.6 L269.2 66.6 Q277.2 66.6 277.2 74.6 L277.2 90 Z" fill="#3d4ac8"/><clipPath id="cb247"><rect x="247.2" y="66" width="28.5" height="24"/></clipPath><text stroke="#fff" stroke-width="0.32" x="254.2" y="82.4" font-size="14.85" fill="#fff" clip-path="url(#cb247)">1 Crossfade</text>
<rect x="895.4" y="80" width="26.2" height="235.6" rx="7" fill="none" stroke="#6370f0" stroke-width="2.8"/><path d="M894 90 L894 74.6 Q894 66.6 902 66.6 L915 66.6 Q923 66.6 923 74.6 L923 90 Z" fill="#6370f0"/><clipPath id="cb894"><rect x="894" y="66" width="27.5" height="24"/></clipPath><text stroke="#fff" stroke-width="0.32" x="901" y="82.4" font-size="14.85" fill="#fff" clip-path="url(#cb894)">2 Crossfade</text>
<rect x="1074.4" y="80" width="38.7" height="235.6" rx="7" fill="none" stroke="#3d4ac8" stroke-width="2.8"/><path d="M1073 90 L1073 74.6 Q1073 66.6 1081 66.6 L1106.5 66.6 Q1114.5 66.6 1114.5 74.6 L1114.5 90 Z" fill="#3d4ac8"/><clipPath id="cb1073"><rect x="1073" y="66" width="40.0" height="24"/></clipPath><text stroke="#fff" stroke-width="0.32" x="1080" y="82.4" font-size="14.85" fill="#fff" clip-path="url(#cb1073)">3 Fade</text>
<path d="M147 333.3 L241.8 333.3 L250.9 322.4 L1019 322.4 L1046 323.2 L1397 323.2" fill="none" stroke="#f39000" stroke-width="2.2"/>
<rect x="220" y="319" width="20.8" height="14.5" fill="#1f1f1f"/>
<text x="230.4" y="331.9" font-size="10.5" font-weight="bold" fill="#fff" stroke="none" text-anchor="middle">100</text>
<rect x="256" y="317" width="20.0" height="13.5" fill="#1f1f1f"/>
<text x="266.0" y="328.9" font-size="10.5" font-weight="bold" fill="#fff" stroke="none" text-anchor="middle">147</text>
<rect x="867.5" y="316.5" width="20.5" height="14.0" fill="#1f1f1f"/>
<text x="877.8" y="328.9" font-size="10.5" font-weight="bold" fill="#fff" stroke="none" text-anchor="middle">147</text>
<rect x="902.5" y="316.5" width="20.5" height="14.0" fill="#1f1f1f"/>
<text x="912.8" y="328.9" font-size="10.5" font-weight="bold" fill="#fff" stroke="none" text-anchor="middle">150</text>
<rect x="997.4" y="314.9" width="19.4" height="14.4" fill="#1f1f1f"/>
<text x="1007.1" y="327.7" font-size="10.5" font-weight="bold" fill="#fff" stroke="none" text-anchor="middle">150</text>
<rect x="1025" y="316.7" width="20.8" height="13.9" fill="#1f1f1f"/>
<text x="1035.4" y="329.0" font-size="10.5" font-weight="bold" fill="#fff" stroke="none" text-anchor="middle">142</text>
<rect x="1118" y="316.5" width="21.0" height="14.0" fill="#1f1f1f"/>
<text x="1128.5" y="328.9" font-size="10.5" font-weight="bold" fill="#fff" stroke="none" text-anchor="middle">150</text>
<rect x="1337" y="316.5" width="21.5" height="14.0" fill="#1f1f1f"/>
<text x="1347.8" y="328.9" font-size="10.5" font-weight="bold" fill="#fff" stroke="none" text-anchor="middle">150</text>
<rect x="1400.7" y="315" width="20.3" height="14.5" fill="#1f1f1f"/>
<text x="1410.8" y="327.9" font-size="10.5" font-weight="bold" fill="#fff" stroke="none" text-anchor="middle">150</text>
<circle cx="13" cy="102.5" r="9.3" fill="#7c7c7c"/><path d="M9 100.8 L13 104.6 L17 100.8" fill="none" stroke="#fff" stroke-width="2" stroke-linecap="round" stroke-linejoin="round"/><circle cx="71.30" cy="98.30" r="0.6" fill="#cfcfcf" opacity="0.75"/><circle cx="75.90" cy="99.35" r="0.6" fill="#cfcfcf" opacity="0.75"/><circle cx="79.59" cy="102.29" r="0.6" fill="#cfcfcf" opacity="0.75"/><circle cx="81.63" cy="106.54" r="0.6" fill="#cfcfcf" opacity="0.75"/><circle cx="81.63" cy="111.26" r="0.6" fill="#cfcfcf" opacity="0.75"/><circle cx="79.59" cy="115.51" r="0.6" fill="#cfcfcf" opacity="0.75"/><circle cx="75.90" cy="118.45" r="0.6" fill="#cfcfcf" opacity="0.75"/><circle cx="71.30" cy="119.50" r="0.6" fill="#cfcfcf" opacity="0.75"/><circle cx="66.70" cy="118.45" r="0.6" fill="#cfcfcf" opacity="0.75"/><circle cx="63.01" cy="115.51" r="0.6" fill="#cfcfcf" opacity="0.75"/><circle cx="60.97" cy="111.26" r="0.6" fill="#cfcfcf" opacity="0.75"/><circle cx="60.97" cy="106.54" r="0.6" fill="#cfcfcf" opacity="0.75"/><circle cx="63.01" cy="102.29" r="0.6" fill="#cfcfcf" opacity="0.75"/><circle cx="66.70" cy="99.35" r="0.6" fill="#cfcfcf" opacity="0.75"/><circle cx="71.3" cy="108.9" r="7.4" fill="#8a8a8a"/><circle cx="78.60" cy="108.90" r="1.55" fill="#8a8a8a" stroke="#a9a9a9" stroke-width="0.5"/><circle cx="77.44" cy="112.85" r="1.55" fill="#8a8a8a" stroke="#a9a9a9" stroke-width="0.5"/><circle cx="74.33" cy="115.54" r="1.55" fill="#8a8a8a" stroke="#a9a9a9" stroke-width="0.5"/><circle cx="70.26" cy="116.13" r="1.55" fill="#8a8a8a" stroke="#a9a9a9" stroke-width="0.5"/><circle cx="66.52" cy="114.42" r="1.55" fill="#8a8a8a" stroke="#a9a9a9" stroke-width="0.5"/><circle cx="64.30" cy="110.96" r="1.55" fill="#8a8a8a" stroke="#a9a9a9" stroke-width="0.5"/><circle cx="64.30" cy="106.84" r="1.55" fill="#8a8a8a" stroke="#a9a9a9" stroke-width="0.5"/><circle cx="66.52" cy="103.38" r="1.55" fill="#8a8a8a" stroke="#a9a9a9" stroke-width="0.5"/><circle cx="70.26" cy="101.67" r="1.55" fill="#8a8a8a" stroke="#a9a9a9" stroke-width="0.5"/><circle cx="74.33" cy="102.26" r="1.55" fill="#8a8a8a" stroke="#a9a9a9" stroke-width="0.5"/><circle cx="77.44" cy="104.95" r="1.55" fill="#8a8a8a" stroke="#a9a9a9" stroke-width="0.5"/><circle cx="71.3" cy="108.9" r="7.2" fill="#8a8a8a"/><rect x="70.0" y="97.9" width="2.6" height="11.6" rx="1.3" fill="#fff"/><circle cx="101.30" cy="98.30" r="0.6" fill="#cfcfcf" opacity="0.75"/><circle cx="105.90" cy="99.35" r="0.6" fill="#cfcfcf" opacity="0.75"/><circle cx="109.59" cy="102.29" r="0.6" fill="#cfcfcf" opacity="0.75"/><circle cx="111.63" cy="106.54" r="0.6" fill="#cfcfcf" opacity="0.75"/><circle cx="111.63" cy="111.26" r="0.6" fill="#cfcfcf" opacity="0.75"/><circle cx="109.59" cy="115.51" r="0.6" fill="#cfcfcf" opacity="0.75"/><circle cx="105.90" cy="118.45" r="0.6" fill="#cfcfcf" opacity="0.75"/><circle cx="101.30" cy="119.50" r="0.6" fill="#cfcfcf" opacity="0.75"/><circle cx="96.70" cy="118.45" r="0.6" fill="#cfcfcf" opacity="0.75"/><circle cx="93.01" cy="115.51" r="0.6" fill="#cfcfcf" opacity="0.75"/><circle cx="90.97" cy="111.26" r="0.6" fill="#cfcfcf" opacity="0.75"/><circle cx="90.97" cy="106.54" r="0.6" fill="#cfcfcf" opacity="0.75"/><circle cx="93.01" cy="102.29" r="0.6" fill="#cfcfcf" opacity="0.75"/><circle cx="96.70" cy="99.35" r="0.6" fill="#cfcfcf" opacity="0.75"/><circle cx="101.3" cy="108.9" r="7.4" fill="#8a8a8a"/><circle cx="108.60" cy="108.90" r="1.55" fill="#8a8a8a" stroke="#a9a9a9" stroke-width="0.5"/><circle cx="107.44" cy="112.85" r="1.55" fill="#8a8a8a" stroke="#a9a9a9" stroke-width="0.5"/><circle cx="104.33" cy="115.54" r="1.55" fill="#8a8a8a" stroke="#a9a9a9" stroke-width="0.5"/><circle cx="100.26" cy="116.13" r="1.55" fill="#8a8a8a" stroke="#a9a9a9" stroke-width="0.5"/><circle cx="96.52" cy="114.42" r="1.55" fill="#8a8a8a" stroke="#a9a9a9" stroke-width="0.5"/><circle cx="94.30" cy="110.96" r="1.55" fill="#8a8a8a" stroke="#a9a9a9" stroke-width="0.5"/><circle cx="94.30" cy="106.84" r="1.55" fill="#8a8a8a" stroke="#a9a9a9" stroke-width="0.5"/><circle cx="96.52" cy="103.38" r="1.55" fill="#8a8a8a" stroke="#a9a9a9" stroke-width="0.5"/><circle cx="100.26" cy="101.67" r="1.55" fill="#8a8a8a" stroke="#a9a9a9" stroke-width="0.5"/><circle cx="104.33" cy="102.26" r="1.55" fill="#8a8a8a" stroke="#a9a9a9" stroke-width="0.5"/><circle cx="107.44" cy="104.95" r="1.55" fill="#8a8a8a" stroke="#a9a9a9" stroke-width="0.5"/><circle cx="101.3" cy="108.9" r="7.2" fill="#8a8a8a"/><rect x="100.0" y="97.9" width="2.6" height="11.6" rx="1.3" fill="#fff"/><circle cx="101.20" cy="133.00" r="0.6" fill="#cfcfcf" opacity="0.75"/><circle cx="105.80" cy="134.05" r="0.6" fill="#cfcfcf" opacity="0.75"/><circle cx="109.49" cy="136.99" r="0.6" fill="#cfcfcf" opacity="0.75"/><circle cx="111.53" cy="141.24" r="0.6" fill="#cfcfcf" opacity="0.75"/><circle cx="111.53" cy="145.96" r="0.6" fill="#cfcfcf" opacity="0.75"/><circle cx="109.49" cy="150.21" r="0.6" fill="#cfcfcf" opacity="0.75"/><circle cx="105.80" cy="153.15" r="0.6" fill="#cfcfcf" opacity="0.75"/><circle cx="101.20" cy="154.20" r="0.6" fill="#cfcfcf" opacity="0.75"/><circle cx="96.60" cy="153.15" r="0.6" fill="#cfcfcf" opacity="0.75"/><circle cx="92.91" cy="150.21" r="0.6" fill="#cfcfcf" opacity="0.75"/><circle cx="90.87" cy="145.96" r="0.6" fill="#cfcfcf" opacity="0.75"/><circle cx="90.87" cy="141.24" r="0.6" fill="#cfcfcf" opacity="0.75"/><circle cx="92.91" cy="136.99" r="0.6" fill="#cfcfcf" opacity="0.75"/><circle cx="96.60" cy="134.05" r="0.6" fill="#cfcfcf" opacity="0.75"/><circle cx="101.2" cy="143.6" r="7.4" fill="#8a8a8a"/><circle cx="108.50" cy="143.60" r="1.55" fill="#8a8a8a" stroke="#a9a9a9" stroke-width="0.5"/><circle cx="107.34" cy="147.55" r="1.55" fill="#8a8a8a" stroke="#a9a9a9" stroke-width="0.5"/><circle cx="104.23" cy="150.24" r="1.55" fill="#8a8a8a" stroke="#a9a9a9" stroke-width="0.5"/><circle cx="100.16" cy="150.83" r="1.55" fill="#8a8a8a" stroke="#a9a9a9" stroke-width="0.5"/><circle cx="96.42" cy="149.12" r="1.55" fill="#8a8a8a" stroke="#a9a9a9" stroke-width="0.5"/><circle cx="94.20" cy="145.66" r="1.55" fill="#8a8a8a" stroke="#a9a9a9" stroke-width="0.5"/><circle cx="94.20" cy="141.54" r="1.55" fill="#8a8a8a" stroke="#a9a9a9" stroke-width="0.5"/><circle cx="96.42" cy="138.08" r="1.55" fill="#8a8a8a" stroke="#a9a9a9" stroke-width="0.5"/><circle cx="100.16" cy="136.37" r="1.55" fill="#8a8a8a" stroke="#a9a9a9" stroke-width="0.5"/><circle cx="104.23" cy="136.96" r="1.55" fill="#8a8a8a" stroke="#a9a9a9" stroke-width="0.5"/><circle cx="107.34" cy="139.65" r="1.55" fill="#8a8a8a" stroke="#a9a9a9" stroke-width="0.5"/><circle cx="101.2" cy="143.6" r="7.2" fill="#8a8a8a"/><rect x="99.9" y="132.6" width="2.6" height="11.6" rx="1.3" fill="#fff"/><circle cx="101.20" cy="167.00" r="0.6" fill="#cfcfcf" opacity="0.75"/><circle cx="105.80" cy="168.05" r="0.6" fill="#cfcfcf" opacity="0.75"/><circle cx="109.49" cy="170.99" r="0.6" fill="#cfcfcf" opacity="0.75"/><circle cx="111.53" cy="175.24" r="0.6" fill="#cfcfcf" opacity="0.75"/><circle cx="111.53" cy="179.96" r="0.6" fill="#cfcfcf" opacity="0.75"/><circle cx="109.49" cy="184.21" r="0.6" fill="#cfcfcf" opacity="0.75"/><circle cx="105.80" cy="187.15" r="0.6" fill="#cfcfcf" opacity="0.75"/><circle cx="101.20" cy="188.20" r="0.6" fill="#cfcfcf" opacity="0.75"/><circle cx="96.60" cy="187.15" r="0.6" fill="#cfcfcf" opacity="0.75"/><circle cx="92.91" cy="184.21" r="0.6" fill="#cfcfcf" opacity="0.75"/><circle cx="90.87" cy="179.96" r="0.6" fill="#cfcfcf" opacity="0.75"/><circle cx="90.87" cy="175.24" r="0.6" fill="#cfcfcf" opacity="0.75"/><circle cx="92.91" cy="170.99" r="0.6" fill="#cfcfcf" opacity="0.75"/><circle cx="96.60" cy="168.05" r="0.6" fill="#cfcfcf" opacity="0.75"/><circle cx="101.2" cy="177.6" r="7.4" fill="#8a8a8a"/><circle cx="108.50" cy="177.60" r="1.55" fill="#8a8a8a" stroke="#a9a9a9" stroke-width="0.5"/><circle cx="107.34" cy="181.55" r="1.55" fill="#8a8a8a" stroke="#a9a9a9" stroke-width="0.5"/><circle cx="104.23" cy="184.24" r="1.55" fill="#8a8a8a" stroke="#a9a9a9" stroke-width="0.5"/><circle cx="100.16" cy="184.83" r="1.55" fill="#8a8a8a" stroke="#a9a9a9" stroke-width="0.5"/><circle cx="96.42" cy="183.12" r="1.55" fill="#8a8a8a" stroke="#a9a9a9" stroke-width="0.5"/><circle cx="94.20" cy="179.66" r="1.55" fill="#8a8a8a" stroke="#a9a9a9" stroke-width="0.5"/><circle cx="94.20" cy="175.54" r="1.55" fill="#8a8a8a" stroke="#a9a9a9" stroke-width="0.5"/><circle cx="96.42" cy="172.08" r="1.55" fill="#8a8a8a" stroke="#a9a9a9" stroke-width="0.5"/><circle cx="100.16" cy="170.37" r="1.55" fill="#8a8a8a" stroke="#a9a9a9" stroke-width="0.5"/><circle cx="104.23" cy="170.96" r="1.55" fill="#8a8a8a" stroke="#a9a9a9" stroke-width="0.5"/><circle cx="107.34" cy="173.65" r="1.55" fill="#8a8a8a" stroke="#a9a9a9" stroke-width="0.5"/><circle cx="101.2" cy="177.6" r="7.2" fill="#8a8a8a"/><rect x="99.9" y="166.6" width="2.6" height="11.6" rx="1.3" fill="#fff"/><circle cx="67.9" cy="142.9" r="7.6" fill="none" stroke="#8a8a8a" stroke-width="1.3"/><circle cx="67.9" cy="178.7" r="7.6" fill="none" stroke="#8a8a8a" stroke-width="1.3"/><path d="M65.8 146.6 L65.8 141.5 Q65.8 139.2 68.1 139.2 Q70.4 139.2 70.4 141.5 L70.4 146.6 M65.8 143.6 L70.4 143.6" fill="none" stroke="#8a8a8a" stroke-width="1.2"/><text x="67.9" y="182.6" font-size="11" fill="#8a8a8a" stroke="none" text-anchor="middle">S</text><text x="71" y="126.5" font-size="9.2" fill="#f0f0f0" stroke="#f0f0f0" stroke-width="0.4" text-anchor="middle">Filter</text><text x="101.4" y="126.5" font-size="9.2" fill="#f0f0f0" stroke="#f0f0f0" stroke-width="0.4" text-anchor="middle">High</text><text x="73" y="159.5" font-size="9.2" fill="#f0f0f0" stroke="#f0f0f0" stroke-width="0.4" text-anchor="middle">Autom.</text><text x="101.4" y="159.5" font-size="9.2" fill="#f0f0f0" stroke="#f0f0f0" stroke-width="0.4" text-anchor="middle">Mid</text><text x="69" y="195.29999999999998" font-size="9.2" fill="#f0f0f0" stroke="#f0f0f0" stroke-width="0.4" text-anchor="middle">Solo</text><text x="101.4" y="195.29999999999998" font-size="9.2" fill="#f0f0f0" stroke="#f0f0f0" stroke-width="0.4" text-anchor="middle">Low</text><rect x="131" y="100.7" width="1" height="80.3" fill="#7a7a7a"/><rect x="123.4" y="185.3" width="17" height="10.6" rx="3" fill="#a6a6a6" stroke="#e2e2e2" stroke-width="1.5"/>
<circle cx="13" cy="215.0" r="9.3" fill="#7c7c7c"/><path d="M9 213.3 L13 217.1 L17 213.3" fill="none" stroke="#fff" stroke-width="2" stroke-linecap="round" stroke-linejoin="round"/><circle cx="71.30" cy="210.80" r="0.6" fill="#cfcfcf" opacity="0.75"/><circle cx="75.90" cy="211.85" r="0.6" fill="#cfcfcf" opacity="0.75"/><circle cx="79.59" cy="214.79" r="0.6" fill="#cfcfcf" opacity="0.75"/><circle cx="81.63" cy="219.04" r="0.6" fill="#cfcfcf" opacity="0.75"/><circle cx="81.63" cy="223.76" r="0.6" fill="#cfcfcf" opacity="0.75"/><circle cx="79.59" cy="228.01" r="0.6" fill="#cfcfcf" opacity="0.75"/><circle cx="75.90" cy="230.95" r="0.6" fill="#cfcfcf" opacity="0.75"/><circle cx="71.30" cy="232.00" r="0.6" fill="#cfcfcf" opacity="0.75"/><circle cx="66.70" cy="230.95" r="0.6" fill="#cfcfcf" opacity="0.75"/><circle cx="63.01" cy="228.01" r="0.6" fill="#cfcfcf" opacity="0.75"/><circle cx="60.97" cy="223.76" r="0.6" fill="#cfcfcf" opacity="0.75"/><circle cx="60.97" cy="219.04" r="0.6" fill="#cfcfcf" opacity="0.75"/><circle cx="63.01" cy="214.79" r="0.6" fill="#cfcfcf" opacity="0.75"/><circle cx="66.70" cy="211.85" r="0.6" fill="#cfcfcf" opacity="0.75"/><circle cx="71.3" cy="221.4" r="7.4" fill="#8a8a8a"/><circle cx="78.60" cy="221.40" r="1.55" fill="#8a8a8a" stroke="#a9a9a9" stroke-width="0.5"/><circle cx="77.44" cy="225.35" r="1.55" fill="#8a8a8a" stroke="#a9a9a9" stroke-width="0.5"/><circle cx="74.33" cy="228.04" r="1.55" fill="#8a8a8a" stroke="#a9a9a9" stroke-width="0.5"/><circle cx="70.26" cy="228.63" r="1.55" fill="#8a8a8a" stroke="#a9a9a9" stroke-width="0.5"/><circle cx="66.52" cy="226.92" r="1.55" fill="#8a8a8a" stroke="#a9a9a9" stroke-width="0.5"/><circle cx="64.30" cy="223.46" r="1.55" fill="#8a8a8a" stroke="#a9a9a9" stroke-width="0.5"/><circle cx="64.30" cy="219.34" r="1.55" fill="#8a8a8a" stroke="#a9a9a9" stroke-width="0.5"/><circle cx="66.52" cy="215.88" r="1.55" fill="#8a8a8a" stroke="#a9a9a9" stroke-width="0.5"/><circle cx="70.26" cy="214.17" r="1.55" fill="#8a8a8a" stroke="#a9a9a9" stroke-width="0.5"/><circle cx="74.33" cy="214.76" r="1.55" fill="#8a8a8a" stroke="#a9a9a9" stroke-width="0.5"/><circle cx="77.44" cy="217.45" r="1.55" fill="#8a8a8a" stroke="#a9a9a9" stroke-width="0.5"/><circle cx="71.3" cy="221.4" r="7.2" fill="#8a8a8a"/><rect x="70.0" y="210.4" width="2.6" height="11.6" rx="1.3" fill="#fff"/><circle cx="101.30" cy="210.80" r="0.6" fill="#cfcfcf" opacity="0.75"/><circle cx="105.90" cy="211.85" r="0.6" fill="#cfcfcf" opacity="0.75"/><circle cx="109.59" cy="214.79" r="0.6" fill="#cfcfcf" opacity="0.75"/><circle cx="111.63" cy="219.04" r="0.6" fill="#cfcfcf" opacity="0.75"/><circle cx="111.63" cy="223.76" r="0.6" fill="#cfcfcf" opacity="0.75"/><circle cx="109.59" cy="228.01" r="0.6" fill="#cfcfcf" opacity="0.75"/><circle cx="105.90" cy="230.95" r="0.6" fill="#cfcfcf" opacity="0.75"/><circle cx="101.30" cy="232.00" r="0.6" fill="#cfcfcf" opacity="0.75"/><circle cx="96.70" cy="230.95" r="0.6" fill="#cfcfcf" opacity="0.75"/><circle cx="93.01" cy="228.01" r="0.6" fill="#cfcfcf" opacity="0.75"/><circle cx="90.97" cy="223.76" r="0.6" fill="#cfcfcf" opacity="0.75"/><circle cx="90.97" cy="219.04" r="0.6" fill="#cfcfcf" opacity="0.75"/><circle cx="93.01" cy="214.79" r="0.6" fill="#cfcfcf" opacity="0.75"/><circle cx="96.70" cy="211.85" r="0.6" fill="#cfcfcf" opacity="0.75"/><circle cx="101.3" cy="221.4" r="7.4" fill="#8a8a8a"/><circle cx="108.60" cy="221.40" r="1.55" fill="#8a8a8a" stroke="#a9a9a9" stroke-width="0.5"/><circle cx="107.44" cy="225.35" r="1.55" fill="#8a8a8a" stroke="#a9a9a9" stroke-width="0.5"/><circle cx="104.33" cy="228.04" r="1.55" fill="#8a8a8a" stroke="#a9a9a9" stroke-width="0.5"/><circle cx="100.26" cy="228.63" r="1.55" fill="#8a8a8a" stroke="#a9a9a9" stroke-width="0.5"/><circle cx="96.52" cy="226.92" r="1.55" fill="#8a8a8a" stroke="#a9a9a9" stroke-width="0.5"/><circle cx="94.30" cy="223.46" r="1.55" fill="#8a8a8a" stroke="#a9a9a9" stroke-width="0.5"/><circle cx="94.30" cy="219.34" r="1.55" fill="#8a8a8a" stroke="#a9a9a9" stroke-width="0.5"/><circle cx="96.52" cy="215.88" r="1.55" fill="#8a8a8a" stroke="#a9a9a9" stroke-width="0.5"/><circle cx="100.26" cy="214.17" r="1.55" fill="#8a8a8a" stroke="#a9a9a9" stroke-width="0.5"/><circle cx="104.33" cy="214.76" r="1.55" fill="#8a8a8a" stroke="#a9a9a9" stroke-width="0.5"/><circle cx="107.44" cy="217.45" r="1.55" fill="#8a8a8a" stroke="#a9a9a9" stroke-width="0.5"/><circle cx="101.3" cy="221.4" r="7.2" fill="#8a8a8a"/><rect x="100.0" y="210.4" width="2.6" height="11.6" rx="1.3" fill="#fff"/><circle cx="101.20" cy="245.50" r="0.6" fill="#cfcfcf" opacity="0.75"/><circle cx="105.80" cy="246.55" r="0.6" fill="#cfcfcf" opacity="0.75"/><circle cx="109.49" cy="249.49" r="0.6" fill="#cfcfcf" opacity="0.75"/><circle cx="111.53" cy="253.74" r="0.6" fill="#cfcfcf" opacity="0.75"/><circle cx="111.53" cy="258.46" r="0.6" fill="#cfcfcf" opacity="0.75"/><circle cx="109.49" cy="262.71" r="0.6" fill="#cfcfcf" opacity="0.75"/><circle cx="105.80" cy="265.65" r="0.6" fill="#cfcfcf" opacity="0.75"/><circle cx="101.20" cy="266.70" r="0.6" fill="#cfcfcf" opacity="0.75"/><circle cx="96.60" cy="265.65" r="0.6" fill="#cfcfcf" opacity="0.75"/><circle cx="92.91" cy="262.71" r="0.6" fill="#cfcfcf" opacity="0.75"/><circle cx="90.87" cy="258.46" r="0.6" fill="#cfcfcf" opacity="0.75"/><circle cx="90.87" cy="253.74" r="0.6" fill="#cfcfcf" opacity="0.75"/><circle cx="92.91" cy="249.49" r="0.6" fill="#cfcfcf" opacity="0.75"/><circle cx="96.60" cy="246.55" r="0.6" fill="#cfcfcf" opacity="0.75"/><circle cx="101.2" cy="256.1" r="7.4" fill="#8a8a8a"/><circle cx="108.50" cy="256.10" r="1.55" fill="#8a8a8a" stroke="#a9a9a9" stroke-width="0.5"/><circle cx="107.34" cy="260.05" r="1.55" fill="#8a8a8a" stroke="#a9a9a9" stroke-width="0.5"/><circle cx="104.23" cy="262.74" r="1.55" fill="#8a8a8a" stroke="#a9a9a9" stroke-width="0.5"/><circle cx="100.16" cy="263.33" r="1.55" fill="#8a8a8a" stroke="#a9a9a9" stroke-width="0.5"/><circle cx="96.42" cy="261.62" r="1.55" fill="#8a8a8a" stroke="#a9a9a9" stroke-width="0.5"/><circle cx="94.20" cy="258.16" r="1.55" fill="#8a8a8a" stroke="#a9a9a9" stroke-width="0.5"/><circle cx="94.20" cy="254.04" r="1.55" fill="#8a8a8a" stroke="#a9a9a9" stroke-width="0.5"/><circle cx="96.42" cy="250.58" r="1.55" fill="#8a8a8a" stroke="#a9a9a9" stroke-width="0.5"/><circle cx="100.16" cy="248.87" r="1.55" fill="#8a8a8a" stroke="#a9a9a9" stroke-width="0.5"/><circle cx="104.23" cy="249.46" r="1.55" fill="#8a8a8a" stroke="#a9a9a9" stroke-width="0.5"/><circle cx="107.34" cy="252.15" r="1.55" fill="#8a8a8a" stroke="#a9a9a9" stroke-width="0.5"/><circle cx="101.2" cy="256.1" r="7.2" fill="#8a8a8a"/><rect x="99.9" y="245.10000000000002" width="2.6" height="11.6" rx="1.3" fill="#fff"/><circle cx="101.20" cy="279.50" r="0.6" fill="#cfcfcf" opacity="0.75"/><circle cx="105.80" cy="280.55" r="0.6" fill="#cfcfcf" opacity="0.75"/><circle cx="109.49" cy="283.49" r="0.6" fill="#cfcfcf" opacity="0.75"/><circle cx="111.53" cy="287.74" r="0.6" fill="#cfcfcf" opacity="0.75"/><circle cx="111.53" cy="292.46" r="0.6" fill="#cfcfcf" opacity="0.75"/><circle cx="109.49" cy="296.71" r="0.6" fill="#cfcfcf" opacity="0.75"/><circle cx="105.80" cy="299.65" r="0.6" fill="#cfcfcf" opacity="0.75"/><circle cx="101.20" cy="300.70" r="0.6" fill="#cfcfcf" opacity="0.75"/><circle cx="96.60" cy="299.65" r="0.6" fill="#cfcfcf" opacity="0.75"/><circle cx="92.91" cy="296.71" r="0.6" fill="#cfcfcf" opacity="0.75"/><circle cx="90.87" cy="292.46" r="0.6" fill="#cfcfcf" opacity="0.75"/><circle cx="90.87" cy="287.74" r="0.6" fill="#cfcfcf" opacity="0.75"/><circle cx="92.91" cy="283.49" r="0.6" fill="#cfcfcf" opacity="0.75"/><circle cx="96.60" cy="280.55" r="0.6" fill="#cfcfcf" opacity="0.75"/><circle cx="101.2" cy="290.1" r="7.4" fill="#8a8a8a"/><circle cx="108.50" cy="290.10" r="1.55" fill="#8a8a8a" stroke="#a9a9a9" stroke-width="0.5"/><circle cx="107.34" cy="294.05" r="1.55" fill="#8a8a8a" stroke="#a9a9a9" stroke-width="0.5"/><circle cx="104.23" cy="296.74" r="1.55" fill="#8a8a8a" stroke="#a9a9a9" stroke-width="0.5"/><circle cx="100.16" cy="297.33" r="1.55" fill="#8a8a8a" stroke="#a9a9a9" stroke-width="0.5"/><circle cx="96.42" cy="295.62" r="1.55" fill="#8a8a8a" stroke="#a9a9a9" stroke-width="0.5"/><circle cx="94.20" cy="292.16" r="1.55" fill="#8a8a8a" stroke="#a9a9a9" stroke-width="0.5"/><circle cx="94.20" cy="288.04" r="1.55" fill="#8a8a8a" stroke="#a9a9a9" stroke-width="0.5"/><circle cx="96.42" cy="284.58" r="1.55" fill="#8a8a8a" stroke="#a9a9a9" stroke-width="0.5"/><circle cx="100.16" cy="282.87" r="1.55" fill="#8a8a8a" stroke="#a9a9a9" stroke-width="0.5"/><circle cx="104.23" cy="283.46" r="1.55" fill="#8a8a8a" stroke="#a9a9a9" stroke-width="0.5"/><circle cx="107.34" cy="286.15" r="1.55" fill="#8a8a8a" stroke="#a9a9a9" stroke-width="0.5"/><circle cx="101.2" cy="290.1" r="7.2" fill="#8a8a8a"/><rect x="99.9" y="279.1" width="2.6" height="11.6" rx="1.3" fill="#fff"/><circle cx="67.9" cy="255.4" r="7.6" fill="none" stroke="#8a8a8a" stroke-width="1.3"/><circle cx="67.9" cy="291.2" r="7.6" fill="none" stroke="#8a8a8a" stroke-width="1.3"/><path d="M65.8 259.1 L65.8 254.0 Q65.8 251.7 68.1 251.7 Q70.4 251.7 70.4 254.0 L70.4 259.1 M65.8 256.1 L70.4 256.1" fill="none" stroke="#8a8a8a" stroke-width="1.2"/><text x="67.9" y="295.09999999999997" font-size="11" fill="#8a8a8a" stroke="none" text-anchor="middle">S</text><text x="71" y="239.0" font-size="9.2" fill="#f0f0f0" stroke="#f0f0f0" stroke-width="0.4" text-anchor="middle">Filter</text><text x="101.4" y="239.0" font-size="9.2" fill="#f0f0f0" stroke="#f0f0f0" stroke-width="0.4" text-anchor="middle">High</text><text x="73" y="272.0" font-size="9.2" fill="#f0f0f0" stroke="#f0f0f0" stroke-width="0.4" text-anchor="middle">Autom.</text><text x="101.4" y="272.0" font-size="9.2" fill="#f0f0f0" stroke="#f0f0f0" stroke-width="0.4" text-anchor="middle">Mid</text><text x="69" y="307.8" font-size="9.2" fill="#f0f0f0" stroke="#f0f0f0" stroke-width="0.4" text-anchor="middle">Solo</text><text x="101.4" y="307.8" font-size="9.2" fill="#f0f0f0" stroke="#f0f0f0" stroke-width="0.4" text-anchor="middle">Low</text><rect x="131" y="213.2" width="1" height="80.3" fill="#7a7a7a"/><rect x="123.4" y="297.8" width="17" height="10.6" rx="3" fill="#a6a6a6" stroke="#e2e2e2" stroke-width="1.5"/>
<circle cx="13" cy="327" r="9.3" fill="#7c7c7c"/>
<path d="M11.2 323 L15 327 L11.2 331" fill="none" stroke="#fff" stroke-width="2" stroke-linecap="round" stroke-linejoin="round"/>
<text stroke="#bdbdbd" stroke-width="0.32" x="86" y="332.8" font-size="14.6" fill="#bdbdbd" text-anchor="middle">BPM</text>
<rect x="1455.3" y="4.4" width="8.5" height="298" fill="#000"/>
<rect x="1467.6" y="4.4" width="8.3" height="298" fill="#000"/>
<circle cx="1465.7" cy="322" r="12.6" fill="none" stroke="#1a1a1a" stroke-width="3.2"/>
<path d="M1460.5 331 L1460.5 319 Q1460.5 313.5 1465.7 313.5 Q1470.9 313.5 1470.9 319 L1470.9 331 M1460.5 323.5 L1470.9 323.5" fill="none" stroke="#1a1a1a" stroke-width="3"/>
<rect x="0" y="340.3" width="1487" height="45.7" fill="#474747"/>
<rect x="0" y="340.3" width="1487" height="1.3" fill="#3c3c3c"/>
<rect x="0" y="341.6" width="1487" height="1.5" fill="#646464"/>
<rect x="0" y="384" width="1487" height="1" fill="#424242"/>
<rect x="0" y="385" width="1487" height="2" fill="#5e5e5e"/>
<rect x="7.3" y="348.7" width="102.2" height="29.2" rx="5" fill="#535353"/><rect x="41" y="348.7" width="1" height="29.2" fill="#474747"/><rect x="75.5" y="348.7" width="1" height="29.2" fill="#474747"/>
<rect x="124.3" y="348.7" width="48.4" height="29.2" rx="5" fill="#535353"/>
<rect x="188" y="348.7" width="32.6" height="29.2" rx="5" fill="#535353"/>
<rect x="591.5" y="348.7" width="33.1" height="29.2" rx="5" fill="#535353"/>
<rect x="635.9" y="348.7" width="67.5" height="29.2" rx="5" fill="#535353"/><rect x="669.5" y="348.7" width="1" height="29.2" fill="#474747"/>
<rect x="714.7" y="348.7" width="101.7" height="29.2" rx="5" fill="#535353"/><rect x="749" y="348.7" width="1" height="29.2" fill="#474747"/><rect x="783" y="348.7" width="1" height="29.2" fill="#474747"/>
<rect x="828.5" y="348.7" width="66.9" height="29.2" rx="5" fill="#535353"/><rect x="862" y="348.7" width="1" height="29.2" fill="#474747"/>
<rect x="1294" y="348.7" width="29" height="29.2" rx="5" fill="#535353"/>
<rect x="1331.3" y="348.6" width="111.3" height="29.3" rx="5" fill="#ffff00"/>
<text x="1386.8" y="367.2" font-size="12.4" fill="#111" stroke="#111" stroke-width="0.1" text-anchor="middle">AUTOMIX</text>
<circle cx="1464.9" cy="363" r="15" fill="#535353"/>
<path d="M1459.5 366 L1464.9 360.6 L1470.3 366" fill="none" stroke="#fff" stroke-width="1.8" stroke-linecap="round" stroke-linejoin="round"/>
<g fill="none" stroke="#f2f2f2" stroke-width="1.6" stroke-linecap="round"><circle cx="19.6" cy="358.3" r="2.4"/><circle cx="19.6" cy="368" r="2.4"/><path d="M21.8 366.3 L31.2 356.3 M21.8 360 L31.2 369.6"/></g>
<g fill="none" stroke="#f2f2f2" stroke-width="1.6" stroke-linejoin="round"><rect x="55.3" y="360" width="11" height="11.3" rx="2"/><path d="M50.3 365.5 L50.3 357.5 Q50.3 355.2 52.6 355.2 L60 355.2 Q62 355.2 62 357.2 L62 359"/></g>
<g fill="none" stroke="#f2f2f2" stroke-width="1.6"><rect x="86.3" y="356.4" width="13.2" height="14.8" rx="2.3"/><rect x="89.6" y="354.4" width="6.6" height="3.4" rx="1.2" fill="#535353"/></g>
<g fill="#f2f2f2"><rect x="89.2" y="360.8" width="1.6" height="1.5"/><rect x="92.2" y="360.8" width="4.6" height="1.5"/><rect x="89.2" y="364.8" width="1.6" height="1.5"/><rect x="92.2" y="364.8" width="4.6" height="1.5"/></g>
<g fill="none" stroke="#f2f2f2" stroke-width="1.6" stroke-linecap="round" stroke-linejoin="round"><path d="M134.5 358 L149 358 M138.3 358 L138.3 356.3 Q138.3 354.6 140 354.6 L144.6 354.6 Q146.3 354.6 146.3 356.3 L146.3 358 M136.8 358 L136.8 369 Q136.8 371.2 139 371.2 L144.5 371.2 Q146.7 371.2 146.7 369 L146.7 358 M140.5 361.8 L140.5 367.3 M143.2 361.8 L143.2 367.3"/><path d="M152.3 360.6 L157.5 365.6 L162.8 360.6"/></g>
<g fill="none" stroke="#f2f2f2" stroke-width="1.6" stroke-linecap="round" stroke-linejoin="round"><path d="M198 362.3 Q204 356.3 208.6 360.2 Q210.8 362.2 211.3 367"/><path d="M201.3 357.3 L197.6 362.4 L202.6 364"/></g>
<g fill="none" stroke="#f2f2f2" stroke-width="1.6" stroke-linecap="round" stroke-linejoin="round"><path d="M604.6 362.5 L607 356.8 Q608.2 354.6 609.4 356.8 L614.4 368.3 Q615 370 613.2 370 L602.6 370 Q600.8 370 601.4 368.3 L602.8 364.6"/><path d="M603.3 366.5 L612.6 366.5"/><path d="M602.4 358.4 L606.3 364.6"/></g>
<g fill="none" stroke="#f2f2f2" stroke-width="1.6" stroke-linejoin="round"><path d="M644.7 362.9 L652.1 357.2 L652.1 368.7 Z M653.6 362.9 L660.6 357.2 L660.6 368.7 Z"/><path d="M679 357.2 L686.6 362.9 L679 368.7 Z M687.8 357.2 L694.6 362.9 L687.8 368.7 Z"/></g>
<circle cx="731.3" cy="363" r="7.9" fill="none" stroke="#f2f2f2" stroke-width="1.6"/><circle cx="731.3" cy="363" r="4.7" fill="#ff0000"/>
<path d="M760.2 355.8 L771.3 363 L760.2 370.3 Z" fill="none" stroke="#f2f2f2" stroke-width="1.6" stroke-linejoin="round"/>
<g fill="none" stroke="#f2f2f2" stroke-width="1.6" stroke-linecap="round" stroke-linejoin="round"><path d="M793.2 364 L793.2 361.8 Q793.2 359 796 359 L807 359 M803.6 355.4 L807.2 359 L803.6 362.6"/><path d="M807.2 361.6 L807.2 365 Q807.2 367.9 804.4 367.9 L793.4 367.9 M796.8 364.3 L793.2 367.9 L796.8 371.5"/></g>
<g fill="none" stroke="#f2f2f2" stroke-width="1.6" stroke-linejoin="round"><path d="M838.8 357 L838.8 369.2 M850.3 357.4 L842.3 363.1 L850.3 368.9 Z"/><path d="M884.6 357 L884.6 369.2 M873.9 357.4 L881.9 363.1 L873.9 368.9 Z"/></g>
<g fill="none" stroke="#f2f2f2" stroke-width="1.5"><rect x="1300.3" y="356" width="16.5" height="12.8" rx="2"/></g>
<rect x="1302.80" y="359.2" width="1.5" height="1.4" fill="#f2f2f2"/>
<rect x="1305.35" y="359.2" width="1.5" height="1.4" fill="#f2f2f2"/>
<rect x="1307.90" y="359.2" width="1.5" height="1.4" fill="#f2f2f2"/>
<rect x="1310.45" y="359.2" width="1.5" height="1.4" fill="#f2f2f2"/>
<rect x="1313.00" y="359.2" width="1.5" height="1.4" fill="#f2f2f2"/>
<rect x="1302.80" y="362.1" width="1.5" height="1.4" fill="#f2f2f2"/>
<rect x="1305.35" y="362.1" width="1.5" height="1.4" fill="#f2f2f2"/>
<rect x="1307.90" y="362.1" width="1.5" height="1.4" fill="#f2f2f2"/>
<rect x="1310.45" y="362.1" width="1.5" height="1.4" fill="#f2f2f2"/>
<rect x="1313.00" y="362.1" width="1.5" height="1.4" fill="#f2f2f2"/>
<rect x="1304" y="365" width="9.5" height="1.4" fill="#f2f2f2"/>
<rect x="0" y="387" width="1487" height="181" fill="#383838"/>
<rect x="0" y="387" width="1487" height="1.2" fill="#333"/>
<rect x="0" y="457.8" width="1487" height="33.3" fill="#2e2e2e"/>
<rect x="0" y="524.8" width="1487" height="33.2" fill="#2e2e2e"/>
<text x="143.5" y="408.9" font-size="11.3" fill="#b4b4b4" stroke="#b4b4b4" stroke-width="0.45" letter-spacing="1.3" textLength="30.3" lengthAdjust="spacingAndGlyphs">TITLE</text>
<text x="816.4" y="408.9" font-size="11.3" fill="#b4b4b4" stroke="#b4b4b4" stroke-width="0.45" letter-spacing="1.3" textLength="39.9" lengthAdjust="spacingAndGlyphs">ARTIST</text>
<text x="1225.2" y="408.9" font-size="11.3" fill="#b4b4b4" stroke="#b4b4b4" stroke-width="0.45" letter-spacing="1.3" textLength="21" lengthAdjust="spacingAndGlyphs">KEY</text>
<text x="1264.6" y="408.9" font-size="11.3" fill="#b4b4b4" stroke="#b4b4b4" stroke-width="0.45" letter-spacing="1.3" textLength="24.2" lengthAdjust="spacingAndGlyphs">NRG</text>
<text x="1304.6" y="408.9" font-size="11.3" fill="#b4b4b4" stroke="#b4b4b4" stroke-width="0.45" letter-spacing="1.3" textLength="40.5" lengthAdjust="spacingAndGlyphs">MATCH</text>
<text x="1360.9" y="408.9" font-size="11.3" fill="#b4b4b4" stroke="#b4b4b4" stroke-width="0.45" letter-spacing="1.3" textLength="24.2" lengthAdjust="spacingAndGlyphs">BPM</text>
<rect x="13.5" y="436.9" width="1.5" height="1.4" fill="#d8d8d8"/>
<rect x="13.5" y="439.4" width="1.5" height="1.4" fill="#d8d8d8"/>
<rect x="13.5" y="441.9" width="1.5" height="1.4" fill="#d8d8d8"/>
<rect x="13.5" y="444.4" width="1.5" height="1.4" fill="#d8d8d8"/>
<rect x="16.3" y="436.9" width="1.5" height="1.4" fill="#d8d8d8"/>
<rect x="16.3" y="439.4" width="1.5" height="1.4" fill="#d8d8d8"/>
<rect x="16.3" y="441.9" width="1.5" height="1.4" fill="#d8d8d8"/>
<rect x="16.3" y="444.4" width="1.5" height="1.4" fill="#d8d8d8"/>
<rect x="19.1" y="436.9" width="1.5" height="1.4" fill="#d8d8d8"/>
<rect x="19.1" y="439.4" width="1.5" height="1.4" fill="#d8d8d8"/>
<rect x="19.1" y="441.9" width="1.5" height="1.4" fill="#d8d8d8"/>
<rect x="19.1" y="444.4" width="1.5" height="1.4" fill="#d8d8d8"/>
<rect x="21.9" y="436.9" width="1.5" height="1.4" fill="#d8d8d8"/>
<rect x="21.9" y="439.4" width="1.5" height="1.4" fill="#d8d8d8"/>
<rect x="21.9" y="441.9" width="1.5" height="1.4" fill="#d8d8d8"/>
<rect x="21.9" y="444.4" width="1.5" height="1.4" fill="#d8d8d8"/>
<text x="37" y="444.9" font-size="13.1" fill="#f4f4f4" stroke="#f4f4f4" stroke-width="0.15">1</text>
<rect x="100.4" y="425.5" width="31.6" height="31.2" rx="2" fill="#050505"/>
<circle cx="116.2" cy="441.1" r="12.8" fill="#262626" stroke="#6c6c6c" stroke-width="0.9"/><circle cx="116.2" cy="441.1" r="11" fill="none" stroke="#4e4e4e" stroke-width="0.7"/><circle cx="116.2" cy="441.1" r="9.3" fill="none" stroke="#3c3c3c" stroke-width="0.5"/><circle cx="116.2" cy="441.1" r="3.6" fill="#444" stroke="#5c5c5c" stroke-width="0.6"/><circle cx="116.2" cy="441.1" r="1.2" fill="#777"/>
<rect x="112.3" y="434.3" width="7.8" height="1.6" fill="#9a9a9a"/><circle cx="110" cy="441.1" r="0.8" fill="#888"/><circle cx="122.4" cy="441.1" r="0.8" fill="#888"/><rect x="113.5" y="445.3" width="5.4" height="0.8" fill="#666"/><rect x="113" y="447.1" width="6.4" height="0.8" fill="#666"/>
<text x="143" y="444.7" font-size="13.1" fill="#f4f4f4" stroke="#f4f4f4" stroke-width="0.2" textLength="188.3" lengthAdjust="spacingAndGlyphs">GHETTO TECHNO (313TRO MIX)</text>
<text x="816.2" y="444.7" font-size="13.1" fill="#f4f4f4" stroke="#f4f4f4" stroke-width="0.2" textLength="21.3" lengthAdjust="spacingAndGlyphs">FTP</text>
<rect x="1219.8" y="429.8" width="33.4" height="22.6" rx="2.5" fill="#d190ff"/>
<text x="1236" y="445.3" font-size="13" fill="#111" stroke="none" text-anchor="middle" letter-spacing="-0.3">9B</text>
<rect x="1308" y="429.8" width="34" height="22.6" rx="2.5" fill="#1ee05c"/>
<path d="M1319 441.1 L1323.3 445.1 L1331 436.6" fill="none" stroke="#111" stroke-width="1.8"/>
<text x="1360.6" y="444.9" font-size="13.1" fill="#f4f4f4" stroke="#f4f4f4" stroke-width="0.15" textLength="21.4" lengthAdjust="spacingAndGlyphs">100</text>
<rect x="13.5" y="470.2" width="1.5" height="1.4" fill="#d8d8d8"/>
<rect x="13.5" y="472.7" width="1.5" height="1.4" fill="#d8d8d8"/>
<rect x="13.5" y="475.2" width="1.5" height="1.4" fill="#d8d8d8"/>
<rect x="13.5" y="477.7" width="1.5" height="1.4" fill="#d8d8d8"/>
<rect x="16.3" y="470.2" width="1.5" height="1.4" fill="#d8d8d8"/>
<rect x="16.3" y="472.7" width="1.5" height="1.4" fill="#d8d8d8"/>
<rect x="16.3" y="475.2" width="1.5" height="1.4" fill="#d8d8d8"/>
<rect x="16.3" y="477.7" width="1.5" height="1.4" fill="#d8d8d8"/>
<rect x="19.1" y="470.2" width="1.5" height="1.4" fill="#d8d8d8"/>
<rect x="19.1" y="472.7" width="1.5" height="1.4" fill="#d8d8d8"/>
<rect x="19.1" y="475.2" width="1.5" height="1.4" fill="#d8d8d8"/>
<rect x="19.1" y="477.7" width="1.5" height="1.4" fill="#d8d8d8"/>
<rect x="21.9" y="470.2" width="1.5" height="1.4" fill="#d8d8d8"/>
<rect x="21.9" y="472.7" width="1.5" height="1.4" fill="#d8d8d8"/>
<rect x="21.9" y="475.2" width="1.5" height="1.4" fill="#d8d8d8"/>
<rect x="21.9" y="477.7" width="1.5" height="1.4" fill="#d8d8d8"/>
<text x="37" y="478.2" font-size="13.1" fill="#f4f4f4" stroke="#f4f4f4" stroke-width="0.15">2</text>
<rect x="100.4" y="458.8" width="31.6" height="31.2" rx="2" fill="#444"/>
<text x="143" y="478.0" font-size="13.1" fill="#f4f4f4" stroke="#f4f4f4" stroke-width="0.2" textLength="77.9" lengthAdjust="spacingAndGlyphs">Underground</text>
<text x="816.2" y="478.0" font-size="13.1" fill="#f4f4f4" stroke="#f4f4f4" stroke-width="0.2" textLength="36.5" lengthAdjust="spacingAndGlyphs">Viscid</text>
<rect x="1219.8" y="463.1" width="33.4" height="22.6" rx="2.5" fill="#ee84da"/>
<text x="1236" y="478.6" font-size="13" fill="#111" stroke="none" text-anchor="middle" letter-spacing="-0.3">8B</text>
<rect x="1308" y="463.1" width="34" height="22.6" rx="2.5" fill="#1ee05c"/>
<path d="M1319.5 469.4 L1329 478.9 M1321.5 478.9 L1329 478.9 L1329 471.4" fill="none" stroke="#111" stroke-width="1.8"/>
<text x="1360.6" y="478.2" font-size="13.1" fill="#f4f4f4" stroke="#f4f4f4" stroke-width="0.15" textLength="18.8" lengthAdjust="spacingAndGlyphs">147</text>
<circle cx="1431" cy="474.4" r="5.8" fill="none" stroke="#e8d800" stroke-width="1.5"/><rect x="1430.3" y="471.1" width="1.4" height="4" fill="#e8d800"/><rect x="1430.3" y="476.2" width="1.4" height="1.4" fill="#e8d800"/>
<rect x="13.5" y="503.5" width="1.5" height="1.4" fill="#d8d8d8"/>
<rect x="13.5" y="506.0" width="1.5" height="1.4" fill="#d8d8d8"/>
<rect x="13.5" y="508.5" width="1.5" height="1.4" fill="#d8d8d8"/>
<rect x="13.5" y="511.0" width="1.5" height="1.4" fill="#d8d8d8"/>
<rect x="16.3" y="503.5" width="1.5" height="1.4" fill="#d8d8d8"/>
<rect x="16.3" y="506.0" width="1.5" height="1.4" fill="#d8d8d8"/>
<rect x="16.3" y="508.5" width="1.5" height="1.4" fill="#d8d8d8"/>
<rect x="16.3" y="511.0" width="1.5" height="1.4" fill="#d8d8d8"/>
<rect x="19.1" y="503.5" width="1.5" height="1.4" fill="#d8d8d8"/>
<rect x="19.1" y="506.0" width="1.5" height="1.4" fill="#d8d8d8"/>
<rect x="19.1" y="508.5" width="1.5" height="1.4" fill="#d8d8d8"/>
<rect x="19.1" y="511.0" width="1.5" height="1.4" fill="#d8d8d8"/>
<rect x="21.9" y="503.5" width="1.5" height="1.4" fill="#d8d8d8"/>
<rect x="21.9" y="506.0" width="1.5" height="1.4" fill="#d8d8d8"/>
<rect x="21.9" y="508.5" width="1.5" height="1.4" fill="#d8d8d8"/>
<rect x="21.9" y="511.0" width="1.5" height="1.4" fill="#d8d8d8"/>
<text x="37" y="511.5" font-size="13.1" fill="#f4f4f4" stroke="#f4f4f4" stroke-width="0.15">3</text>
<rect x="100.4" y="492.1" width="31.6" height="31.2" rx="2" fill="#050505"/>
<circle cx="116.2" cy="507.7" r="12.8" fill="#262626" stroke="#6c6c6c" stroke-width="0.9"/><circle cx="116.2" cy="507.7" r="11" fill="none" stroke="#4e4e4e" stroke-width="0.7"/><circle cx="116.2" cy="507.7" r="9.3" fill="none" stroke="#3c3c3c" stroke-width="0.5"/><circle cx="116.2" cy="507.7" r="3.6" fill="#444" stroke="#5c5c5c" stroke-width="0.6"/><circle cx="116.2" cy="507.7" r="1.2" fill="#777"/>
<rect x="112.3" y="500.9" width="7.8" height="1.6" fill="#9a9a9a"/><circle cx="110" cy="507.7" r="0.8" fill="#888"/><circle cx="122.4" cy="507.7" r="0.8" fill="#888"/><rect x="113.5" y="511.9" width="5.4" height="0.8" fill="#666"/><rect x="113" y="513.7" width="6.4" height="0.8" fill="#666"/>
<text x="143" y="511.3" font-size="13.1" fill="#f4f4f4" stroke="#f4f4f4" stroke-width="0.2" textLength="201.4" lengthAdjust="spacingAndGlyphs">GHETTO TECHNO (ORIGINAL MIX)</text>
<text x="816.2" y="511.3" font-size="13.1" fill="#f4f4f4" stroke="#f4f4f4" stroke-width="0.2" textLength="74.1" lengthAdjust="spacingAndGlyphs">Toni Moralez</text>
<rect x="1219.8" y="496.4" width="33.4" height="22.6" rx="2.5" fill="#d190ff"/>
<text x="1236" y="511.9" font-size="13" fill="#111" stroke="none" text-anchor="middle" letter-spacing="-0.3">9B</text>
<rect x="1308" y="496.4" width="34" height="22.6" rx="2.5" fill="#1ee05c"/>
<path d="M1319.5 512.7 L1329 503.2 M1321.5 503.2 L1329 503.2 L1329 510.7" fill="none" stroke="#111" stroke-width="1.8"/>
<text x="1360.6" y="511.5" font-size="13.1" fill="#f4f4f4" stroke="#f4f4f4" stroke-width="0.15" textLength="18.8" lengthAdjust="spacingAndGlyphs">147</text>
<text x="1393.7" y="511.5" font-size="11" fill="#a8a8a8" stroke="none" textLength="26" lengthAdjust="spacingAndGlyphs">-1.8%</text>
<rect x="13.5" y="537.2" width="1.5" height="1.4" fill="#d8d8d8"/>
<rect x="13.5" y="539.7" width="1.5" height="1.4" fill="#d8d8d8"/>
<rect x="13.5" y="542.2" width="1.5" height="1.4" fill="#d8d8d8"/>
<rect x="13.5" y="544.7" width="1.5" height="1.4" fill="#d8d8d8"/>
<rect x="16.3" y="537.2" width="1.5" height="1.4" fill="#d8d8d8"/>
<rect x="16.3" y="539.7" width="1.5" height="1.4" fill="#d8d8d8"/>
<rect x="16.3" y="542.2" width="1.5" height="1.4" fill="#d8d8d8"/>
<rect x="16.3" y="544.7" width="1.5" height="1.4" fill="#d8d8d8"/>
<rect x="19.1" y="537.2" width="1.5" height="1.4" fill="#d8d8d8"/>
<rect x="19.1" y="539.7" width="1.5" height="1.4" fill="#d8d8d8"/>
<rect x="19.1" y="542.2" width="1.5" height="1.4" fill="#d8d8d8"/>
<rect x="19.1" y="544.7" width="1.5" height="1.4" fill="#d8d8d8"/>
<rect x="21.9" y="537.2" width="1.5" height="1.4" fill="#d8d8d8"/>
<rect x="21.9" y="539.7" width="1.5" height="1.4" fill="#d8d8d8"/>
<rect x="21.9" y="542.2" width="1.5" height="1.4" fill="#d8d8d8"/>
<rect x="21.9" y="544.7" width="1.5" height="1.4" fill="#d8d8d8"/>
<text x="37" y="545.2" font-size="13.1" fill="#f4f4f4" stroke="#f4f4f4" stroke-width="0.15">4</text>
<rect x="100.4" y="525.8" width="31.6" height="31.2" rx="2" fill="#050505"/>
<circle cx="116.2" cy="541.4" r="12.8" fill="#262626" stroke="#6c6c6c" stroke-width="0.9"/><circle cx="116.2" cy="541.4" r="11" fill="none" stroke="#4e4e4e" stroke-width="0.7"/><circle cx="116.2" cy="541.4" r="9.3" fill="none" stroke="#3c3c3c" stroke-width="0.5"/><circle cx="116.2" cy="541.4" r="3.6" fill="#444" stroke="#5c5c5c" stroke-width="0.6"/><circle cx="116.2" cy="541.4" r="1.2" fill="#777"/>
<rect x="112.3" y="534.6" width="7.8" height="1.6" fill="#9a9a9a"/><circle cx="110" cy="541.4" r="0.8" fill="#888"/><circle cx="122.4" cy="541.4" r="0.8" fill="#888"/><rect x="113.5" y="545.6" width="5.4" height="0.8" fill="#666"/><rect x="113" y="547.4" width="6.4" height="0.8" fill="#666"/>
<text x="143" y="545.0" font-size="13.1" fill="#f4f4f4" stroke="#f4f4f4" stroke-width="0.2" textLength="99.6" lengthAdjust="spacingAndGlyphs">PONY (313 MIXX)</text>
<text x="816.2" y="545.0" font-size="13.1" fill="#f4f4f4" stroke="#f4f4f4" stroke-width="0.2" textLength="21.3" lengthAdjust="spacingAndGlyphs">FTP</text>
<rect x="1219.8" y="530.1" width="33.4" height="22.6" rx="2.5" fill="#cbd5ff"/>
<text x="1236" y="545.6" font-size="13" fill="#111" stroke="none" text-anchor="middle" letter-spacing="-0.3">10A</text>
<rect x="1308" y="530.1" width="34" height="22.6" rx="2.5" fill="#1ee05c"/>
<path d="M1319 541.4 L1323.3 545.4 L1331 536.9" fill="none" stroke="#111" stroke-width="1.8"/>
<text x="1360.6" y="545.2" font-size="13.1" fill="#f4f4f4" stroke="#f4f4f4" stroke-width="0.15" textLength="20" lengthAdjust="spacingAndGlyphs">150</text>
<rect x="0" y="340" width="1.3" height="228" fill="#343434"/>
</svg></body></html>
